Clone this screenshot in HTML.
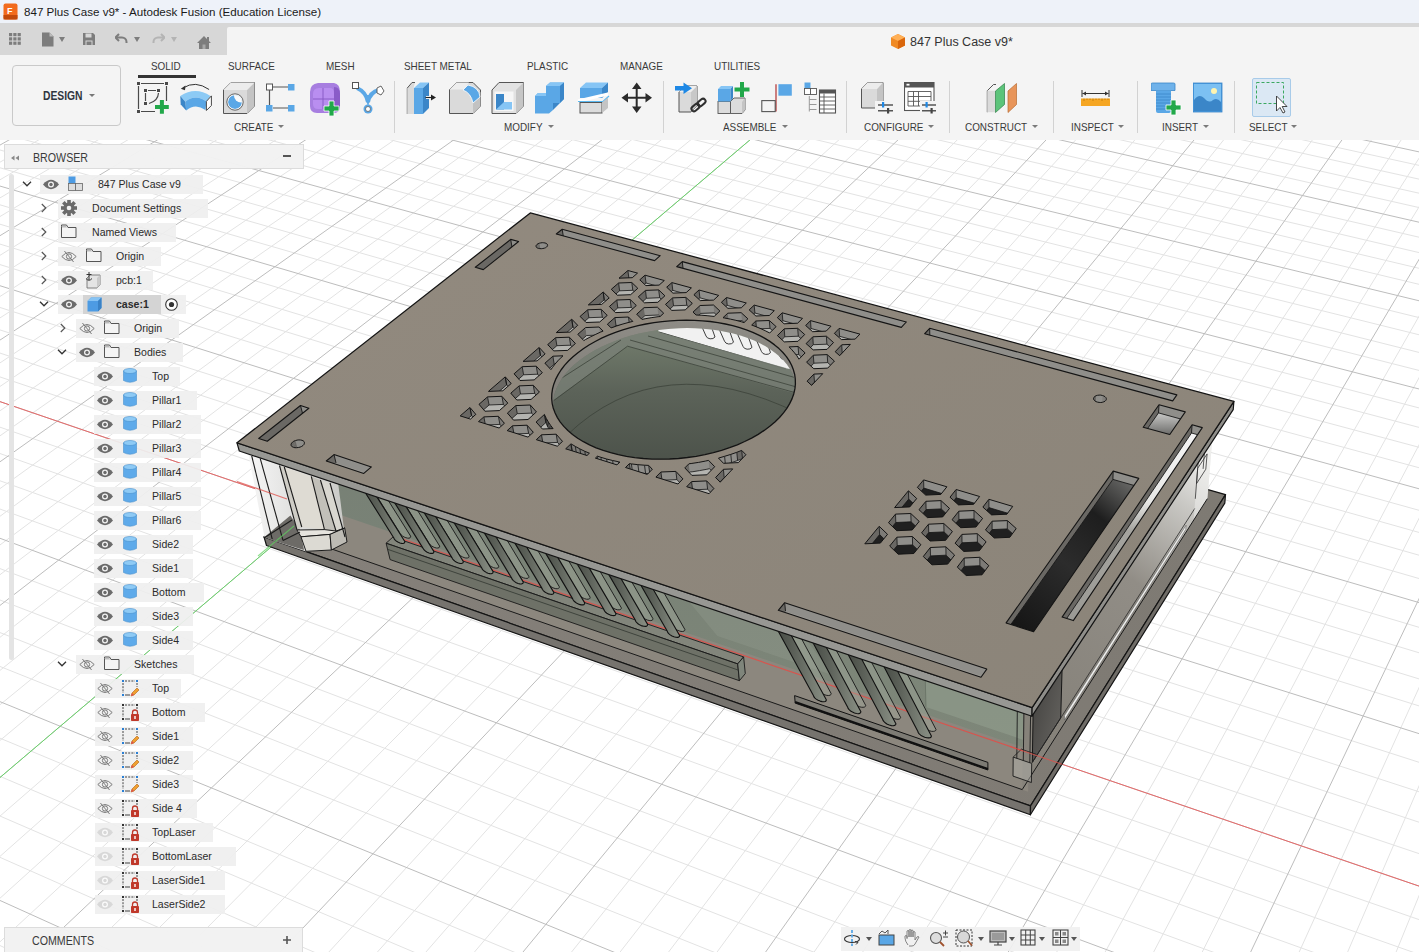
<!DOCTYPE html>
<html><head><meta charset="utf-8">
<style>
html,body{margin:0;padding:0;width:1419px;height:952px;overflow:hidden;background:#fff;font-family:"Liberation Sans",sans-serif;}
.abs{position:absolute;}
#title{left:0;top:0;width:1419px;height:23px;background:#eef2f9;}
#title .t{left:24px;top:5px;font-size:11.6px;color:#1a1a1a;white-space:nowrap;}
#qat{left:0;top:23px;width:1419px;height:32px;background:#d7d7d7;}
#tab{left:227px;top:27px;width:1192px;height:28px;background:#f4f4f4;border-top-left-radius:2px;}
#ribbon{left:0;top:55px;width:1419px;height:85px;background:#f4f4f4;}
.lbl{position:absolute;font-size:11px;color:#3a3a3a;white-space:nowrap;transform:scaleX(0.90);transform-origin:0 0;}
.sep{position:absolute;width:1px;background:#d2d2d2;top:81px;height:52px;}
.arr{position:absolute;width:0;height:0;border-left:3px solid transparent;border-right:3px solid transparent;border-top:3px solid #7a7a7a;}
#view{left:0;top:0;}
#browser{left:0;top:0;}
.hdr{position:absolute;background:rgba(242,242,242,0.97);border:1px solid #dcdcdc;box-sizing:border-box;}
.row{position:absolute;height:19px;background:rgba(239,239,239,0.93);}
.txt{position:absolute;font-size:11px;color:#2b2b2b;white-space:nowrap;transform:scaleX(0.96);transform-origin:0 0;}
</style></head><body>
<svg id="view" class="abs" width="1419" height="952" viewBox="0 0 1419 952">
<defs><clipPath id="vc"><rect x="0" y="140" width="1419" height="812"/></clipPath></defs>
<g clip-path="url(#vc)">
<rect x="0" y="140" width="1419" height="812" fill="#ffffff"/>
<g shape-rendering="auto">
<line x1="-1340.9" y1="689.6" x2="365.6" y2="-176.6" stroke="#e3e3e3" stroke-width="1"/>
<line x1="-1320.9" y1="701.1" x2="381.7" y2="-173.4" stroke="#e3e3e3" stroke-width="1"/>
<line x1="-1300.6" y1="712.8" x2="397.9" y2="-170.2" stroke="#e3e3e3" stroke-width="1"/>
<line x1="-1280.1" y1="724.7" x2="414.2" y2="-167.0" stroke="#e3e3e3" stroke-width="1"/>
<line x1="-1238.2" y1="748.8" x2="447.2" y2="-160.5" stroke="#e3e3e3" stroke-width="1"/>
<line x1="-1216.9" y1="761.1" x2="463.8" y2="-157.2" stroke="#e3e3e3" stroke-width="1"/>
<line x1="-1195.2" y1="773.6" x2="480.6" y2="-153.9" stroke="#e3e3e3" stroke-width="1"/>
<line x1="-1173.3" y1="786.3" x2="497.4" y2="-150.6" stroke="#e3e3e3" stroke-width="1"/>
<line x1="-1128.6" y1="812.1" x2="531.5" y2="-143.9" stroke="#e3e3e3" stroke-width="1"/>
<line x1="-1105.8" y1="825.2" x2="548.7" y2="-140.5" stroke="#e3e3e3" stroke-width="1"/>
<line x1="-1082.7" y1="838.6" x2="566.1" y2="-137.1" stroke="#e3e3e3" stroke-width="1"/>
<line x1="-1059.2" y1="852.1" x2="583.5" y2="-133.6" stroke="#e3e3e3" stroke-width="1"/>
<line x1="-1011.4" y1="879.7" x2="618.8" y2="-126.7" stroke="#e3e3e3" stroke-width="1"/>
<line x1="-987.0" y1="893.8" x2="636.6" y2="-123.2" stroke="#e3e3e3" stroke-width="1"/>
<line x1="-962.2" y1="908.1" x2="654.5" y2="-119.6" stroke="#e3e3e3" stroke-width="1"/>
<line x1="-937.1" y1="922.6" x2="672.6" y2="-116.1" stroke="#e3e3e3" stroke-width="1"/>
<line x1="-885.7" y1="952.2" x2="709.1" y2="-108.9" stroke="#e3e3e3" stroke-width="1"/>
<line x1="-859.5" y1="967.3" x2="727.5" y2="-105.2" stroke="#e3e3e3" stroke-width="1"/>
<line x1="-832.9" y1="982.7" x2="746.1" y2="-101.6" stroke="#e3e3e3" stroke-width="1"/>
<line x1="-805.9" y1="998.2" x2="764.8" y2="-97.9" stroke="#e3e3e3" stroke-width="1"/>
<line x1="-750.7" y1="1030.1" x2="802.7" y2="-90.4" stroke="#e3e3e3" stroke-width="1"/>
<line x1="-722.5" y1="1046.4" x2="821.8" y2="-86.7" stroke="#e3e3e3" stroke-width="1"/>
<line x1="-693.8" y1="1062.9" x2="841.0" y2="-82.9" stroke="#e3e3e3" stroke-width="1"/>
<line x1="-664.7" y1="1079.7" x2="860.4" y2="-79.0" stroke="#e3e3e3" stroke-width="1"/>
<line x1="-605.2" y1="1114.0" x2="899.6" y2="-71.3" stroke="#e3e3e3" stroke-width="1"/>
<line x1="-574.8" y1="1131.6" x2="919.5" y2="-67.4" stroke="#e3e3e3" stroke-width="1"/>
<line x1="-543.8" y1="1149.5" x2="939.4" y2="-63.5" stroke="#e3e3e3" stroke-width="1"/>
<line x1="-512.4" y1="1167.6" x2="959.6" y2="-59.5" stroke="#e3e3e3" stroke-width="1"/>
<line x1="-448.0" y1="1204.7" x2="1000.2" y2="-51.5" stroke="#e3e3e3" stroke-width="1"/>
<line x1="-415.0" y1="1223.8" x2="1020.8" y2="-47.4" stroke="#e3e3e3" stroke-width="1"/>
<line x1="-381.5" y1="1243.1" x2="1041.5" y2="-43.3" stroke="#e3e3e3" stroke-width="1"/>
<line x1="-347.5" y1="1262.7" x2="1062.4" y2="-39.2" stroke="#e3e3e3" stroke-width="1"/>
<line x1="-277.6" y1="1303.0" x2="1104.6" y2="-30.9" stroke="#e3e3e3" stroke-width="1"/>
<line x1="-241.8" y1="1323.7" x2="1126.0" y2="-26.7" stroke="#e3e3e3" stroke-width="1"/>
<line x1="-205.4" y1="1344.7" x2="1147.5" y2="-22.4" stroke="#e3e3e3" stroke-width="1"/>
<line x1="-168.3" y1="1366.1" x2="1169.2" y2="-18.2" stroke="#e3e3e3" stroke-width="1"/>
<line x1="-92.3" y1="1410.0" x2="1213.1" y2="-9.5" stroke="#e3e3e3" stroke-width="1"/>
<line x1="-53.2" y1="1432.5" x2="1235.3" y2="-5.2" stroke="#e3e3e3" stroke-width="1"/>
<line x1="-13.5" y1="1455.4" x2="1257.6" y2="-0.7" stroke="#e3e3e3" stroke-width="1"/>
<line x1="26.9" y1="1478.8" x2="1280.2" y2="3.7" stroke="#e3e3e3" stroke-width="1"/>
<line x1="110.1" y1="1526.7" x2="1325.8" y2="12.7" stroke="#e3e3e3" stroke-width="1"/>
<line x1="152.8" y1="1551.4" x2="1348.9" y2="17.2" stroke="#e3e3e3" stroke-width="1"/>
<line x1="196.3" y1="1576.5" x2="1372.1" y2="21.8" stroke="#e3e3e3" stroke-width="1"/>
<line x1="240.6" y1="1602.0" x2="1395.6" y2="26.4" stroke="#e3e3e3" stroke-width="1"/>
<line x1="331.8" y1="1654.7" x2="1443.0" y2="35.8" stroke="#e3e3e3" stroke-width="1"/>
<line x1="378.8" y1="1681.7" x2="1467.1" y2="40.5" stroke="#e3e3e3" stroke-width="1"/>
<line x1="426.6" y1="1709.4" x2="1491.3" y2="45.3" stroke="#e3e3e3" stroke-width="1"/>
<line x1="475.4" y1="1737.5" x2="1515.7" y2="50.1" stroke="#e3e3e3" stroke-width="1"/>
<line x1="576.0" y1="1795.5" x2="1565.1" y2="59.9" stroke="#e3e3e3" stroke-width="1"/>
<line x1="627.8" y1="1825.4" x2="1590.1" y2="64.8" stroke="#e3e3e3" stroke-width="1"/>
<line x1="680.7" y1="1855.9" x2="1615.3" y2="69.8" stroke="#e3e3e3" stroke-width="1"/>
<line x1="734.7" y1="1887.1" x2="1640.8" y2="74.8" stroke="#e3e3e3" stroke-width="1"/>
<line x1="846.1" y1="1951.4" x2="1692.3" y2="84.9" stroke="#e3e3e3" stroke-width="1"/>
<line x1="903.6" y1="1984.5" x2="1718.3" y2="90.1" stroke="#e3e3e3" stroke-width="1"/>
<line x1="962.4" y1="2018.4" x2="1744.6" y2="95.2" stroke="#e3e3e3" stroke-width="1"/>
<line x1="1022.4" y1="2053.1" x2="1771.2" y2="100.5" stroke="#e3e3e3" stroke-width="1"/>
<line x1="1146.5" y1="2124.7" x2="1824.9" y2="111.1" stroke="#e3e3e3" stroke-width="1"/>
<line x1="1210.7" y1="2161.7" x2="1852.1" y2="116.4" stroke="#e3e3e3" stroke-width="1"/>
<line x1="1276.4" y1="2199.6" x2="1879.5" y2="121.8" stroke="#e3e3e3" stroke-width="1"/>
<line x1="1343.5" y1="2238.4" x2="1907.2" y2="127.3" stroke="#e3e3e3" stroke-width="1"/>
<line x1="-1314.8" y1="655.1" x2="1432.0" y2="2197.2" stroke="#e3e3e3" stroke-width="1"/>
<line x1="-1270.0" y1="632.7" x2="1450.7" y2="2120.2" stroke="#e3e3e3" stroke-width="1"/>
<line x1="-1226.4" y1="610.8" x2="1468.7" y2="2046.7" stroke="#e3e3e3" stroke-width="1"/>
<line x1="-1183.8" y1="589.4" x2="1485.8" y2="1976.4" stroke="#e3e3e3" stroke-width="1"/>
<line x1="-1101.7" y1="548.2" x2="1517.9" y2="1844.7" stroke="#e3e3e3" stroke-width="1"/>
<line x1="-1062.1" y1="528.4" x2="1532.9" y2="1783.0" stroke="#e3e3e3" stroke-width="1"/>
<line x1="-1023.5" y1="509.0" x2="1547.4" y2="1723.8" stroke="#e3e3e3" stroke-width="1"/>
<line x1="-985.7" y1="490.1" x2="1561.2" y2="1666.9" stroke="#e3e3e3" stroke-width="1"/>
<line x1="-912.7" y1="453.5" x2="1587.3" y2="1559.7" stroke="#e3e3e3" stroke-width="1"/>
<line x1="-877.5" y1="435.8" x2="1599.7" y2="1509.2" stroke="#e3e3e3" stroke-width="1"/>
<line x1="-843.0" y1="418.5" x2="1611.5" y2="1460.5" stroke="#e3e3e3" stroke-width="1"/>
<line x1="-809.2" y1="401.5" x2="1623.0" y2="1413.5" stroke="#e3e3e3" stroke-width="1"/>
<line x1="-743.9" y1="368.8" x2="1644.7" y2="1324.6" stroke="#e3e3e3" stroke-width="1"/>
<line x1="-712.3" y1="352.9" x2="1654.9" y2="1282.4" stroke="#e3e3e3" stroke-width="1"/>
<line x1="-681.4" y1="337.4" x2="1664.9" y2="1241.7" stroke="#e3e3e3" stroke-width="1"/>
<line x1="-651.1" y1="322.2" x2="1674.5" y2="1202.3" stroke="#e3e3e3" stroke-width="1"/>
<line x1="-592.3" y1="292.7" x2="1692.7" y2="1127.3" stroke="#e3e3e3" stroke-width="1"/>
<line x1="-563.8" y1="278.4" x2="1701.5" y2="1091.6" stroke="#e3e3e3" stroke-width="1"/>
<line x1="-535.9" y1="264.4" x2="1709.9" y2="1057.0" stroke="#e3e3e3" stroke-width="1"/>
<line x1="-508.5" y1="250.7" x2="1718.1" y2="1023.4" stroke="#e3e3e3" stroke-width="1"/>
<line x1="-455.3" y1="224.0" x2="1733.7" y2="959.3" stroke="#e3e3e3" stroke-width="1"/>
<line x1="-429.5" y1="211.1" x2="1741.1" y2="928.7" stroke="#e3e3e3" stroke-width="1"/>
<line x1="-404.1" y1="198.4" x2="1748.4" y2="899.0" stroke="#e3e3e3" stroke-width="1"/>
<line x1="-379.3" y1="185.9" x2="1755.4" y2="870.1" stroke="#e3e3e3" stroke-width="1"/>
<line x1="-330.9" y1="161.7" x2="1768.9" y2="814.7" stroke="#e3e3e3" stroke-width="1"/>
<line x1="-307.4" y1="149.9" x2="1775.4" y2="788.1" stroke="#e3e3e3" stroke-width="1"/>
<line x1="-284.4" y1="138.3" x2="1781.7" y2="762.3" stroke="#e3e3e3" stroke-width="1"/>
<line x1="-261.7" y1="126.9" x2="1787.8" y2="737.1" stroke="#e3e3e3" stroke-width="1"/>
<line x1="-217.5" y1="104.8" x2="1799.6" y2="688.7" stroke="#e3e3e3" stroke-width="1"/>
<line x1="-196.1" y1="94.0" x2="1805.3" y2="665.5" stroke="#e3e3e3" stroke-width="1"/>
<line x1="-174.9" y1="83.4" x2="1810.8" y2="642.8" stroke="#e3e3e3" stroke-width="1"/>
<line x1="-154.2" y1="73.0" x2="1816.2" y2="620.7" stroke="#e3e3e3" stroke-width="1"/>
<line x1="-113.7" y1="52.7" x2="1826.6" y2="578.1" stroke="#e3e3e3" stroke-width="1"/>
<line x1="-94.0" y1="42.8" x2="1831.6" y2="557.6" stroke="#e3e3e3" stroke-width="1"/>
<line x1="-74.6" y1="33.1" x2="1836.5" y2="537.6" stroke="#e3e3e3" stroke-width="1"/>
<line x1="-55.5" y1="23.5" x2="1841.2" y2="518.0" stroke="#e3e3e3" stroke-width="1"/>
<line x1="-18.3" y1="4.8" x2="1850.5" y2="480.2" stroke="#e3e3e3" stroke-width="1"/>
<line x1="-0.1" y1="-4.3" x2="1854.9" y2="462.0" stroke="#e3e3e3" stroke-width="1"/>
<line x1="17.7" y1="-13.2" x2="1859.3" y2="444.1" stroke="#e3e3e3" stroke-width="1"/>
<line x1="35.3" y1="-22.1" x2="1863.5" y2="426.7" stroke="#e3e3e3" stroke-width="1"/>
<line x1="69.7" y1="-39.3" x2="1871.7" y2="392.9" stroke="#e3e3e3" stroke-width="1"/>
<line x1="86.5" y1="-47.7" x2="1875.7" y2="376.6" stroke="#e3e3e3" stroke-width="1"/>
<line x1="103.0" y1="-56.0" x2="1879.6" y2="360.6" stroke="#e3e3e3" stroke-width="1"/>
<line x1="119.3" y1="-64.2" x2="1883.4" y2="344.9" stroke="#e3e3e3" stroke-width="1"/>
<line x1="151.1" y1="-80.1" x2="1890.8" y2="314.6" stroke="#e3e3e3" stroke-width="1"/>
<line x1="166.7" y1="-87.9" x2="1894.4" y2="299.9" stroke="#e3e3e3" stroke-width="1"/>
<line x1="182.0" y1="-95.6" x2="1897.9" y2="285.5" stroke="#e3e3e3" stroke-width="1"/>
<line x1="197.1" y1="-103.2" x2="1901.4" y2="271.4" stroke="#e3e3e3" stroke-width="1"/>
<line x1="226.6" y1="-118.0" x2="1908.0" y2="243.9" stroke="#e3e3e3" stroke-width="1"/>
<line x1="241.1" y1="-125.2" x2="1911.3" y2="230.6" stroke="#e3e3e3" stroke-width="1"/>
<line x1="255.3" y1="-132.4" x2="1914.5" y2="217.6" stroke="#e3e3e3" stroke-width="1"/>
<line x1="269.4" y1="-139.4" x2="1917.6" y2="204.8" stroke="#e3e3e3" stroke-width="1"/>
<line x1="296.9" y1="-153.2" x2="1923.7" y2="179.9" stroke="#e3e3e3" stroke-width="1"/>
<line x1="310.3" y1="-160.0" x2="1926.6" y2="167.8" stroke="#e3e3e3" stroke-width="1"/>
<line x1="323.6" y1="-166.7" x2="1929.5" y2="155.9" stroke="#e3e3e3" stroke-width="1"/>
<line x1="336.7" y1="-173.2" x2="1932.3" y2="144.2" stroke="#e3e3e3" stroke-width="1"/>
<line x1="-1360.7" y1="678.2" x2="349.7" y2="-179.7" stroke="#bdbdbd" stroke-width="1"/>
<line x1="-1259.3" y1="736.7" x2="430.7" y2="-163.7" stroke="#bdbdbd" stroke-width="1"/>
<line x1="-1151.1" y1="799.1" x2="514.4" y2="-147.2" stroke="#bdbdbd" stroke-width="1"/>
<line x1="-1035.5" y1="865.8" x2="601.1" y2="-130.1" stroke="#bdbdbd" stroke-width="1"/>
<line x1="-911.6" y1="937.3" x2="690.8" y2="-112.5" stroke="#bdbdbd" stroke-width="1"/>
<line x1="-778.5" y1="1014.1" x2="783.7" y2="-94.2" stroke="#bdbdbd" stroke-width="1"/>
<line x1="-635.2" y1="1096.7" x2="880.0" y2="-75.2" stroke="#bdbdbd" stroke-width="1"/>
<line x1="-480.5" y1="1186.0" x2="979.8" y2="-55.5" stroke="#bdbdbd" stroke-width="1"/>
<line x1="-312.8" y1="1282.7" x2="1083.4" y2="-35.1" stroke="#bdbdbd" stroke-width="1"/>
<line x1="-130.6" y1="1387.8" x2="1191.1" y2="-13.9" stroke="#bdbdbd" stroke-width="1"/>
<line x1="68.1" y1="1502.5" x2="1302.9" y2="8.2" stroke="#bdbdbd" stroke-width="1"/>
<line x1="285.8" y1="1628.1" x2="1419.2" y2="31.1" stroke="#bdbdbd" stroke-width="1"/>
<line x1="525.2" y1="1766.2" x2="1540.3" y2="55.0" stroke="#bdbdbd" stroke-width="1"/>
<line x1="789.8" y1="1918.9" x2="1666.4" y2="79.8" stroke="#bdbdbd" stroke-width="1"/>
<line x1="1083.8" y1="2088.5" x2="1797.9" y2="105.7" stroke="#bdbdbd" stroke-width="1"/>
<line x1="1412.3" y1="2278.0" x2="1935.1" y2="132.8" stroke="#bdbdbd" stroke-width="1"/>
<line x1="-1360.7" y1="678.2" x2="1412.3" y2="2278.0" stroke="#bdbdbd" stroke-width="1"/>
<line x1="-1142.3" y1="568.6" x2="1502.2" y2="1909.1" stroke="#bdbdbd" stroke-width="1"/>
<line x1="-948.8" y1="471.5" x2="1574.5" y2="1612.3" stroke="#bdbdbd" stroke-width="1"/>
<line x1="-776.2" y1="385.0" x2="1634.0" y2="1368.3" stroke="#bdbdbd" stroke-width="1"/>
<line x1="-621.4" y1="307.3" x2="1683.8" y2="1164.2" stroke="#bdbdbd" stroke-width="1"/>
<line x1="-481.6" y1="237.2" x2="1726.0" y2="990.9" stroke="#bdbdbd" stroke-width="1"/>
<line x1="-354.9" y1="173.7" x2="1762.3" y2="842.0" stroke="#bdbdbd" stroke-width="1"/>
<line x1="-239.4" y1="115.8" x2="1793.8" y2="712.6" stroke="#bdbdbd" stroke-width="1"/>
<line x1="-133.8" y1="62.8" x2="1821.5" y2="599.2" stroke="#bdbdbd" stroke-width="1"/>
<line x1="-36.8" y1="14.1" x2="1845.9" y2="498.9" stroke="#bdbdbd" stroke-width="1"/>
<line x1="52.7" y1="-30.7" x2="1867.7" y2="409.6" stroke="#bdbdbd" stroke-width="1"/>
<line x1="135.3" y1="-72.2" x2="1887.2" y2="329.6" stroke="#bdbdbd" stroke-width="1"/>
<line x1="212.0" y1="-110.6" x2="1904.7" y2="257.5" stroke="#bdbdbd" stroke-width="1"/>
<line x1="283.2" y1="-146.4" x2="1920.6" y2="192.2" stroke="#bdbdbd" stroke-width="1"/>
<line x1="349.7" y1="-179.7" x2="1935.1" y2="132.8" stroke="#bdbdbd" stroke-width="1"/>
<line x1="-481.6" y1="237.2" x2="1726.0" y2="990.9" stroke="#e86a6a" stroke-width="1"/>
<line x1="-480.5" y1="1186.0" x2="979.8" y2="-55.5" stroke="#6ad46a" stroke-width="1"/>
</g>
<defs>
<linearGradient id="gTop" x1="0" y1="0" x2="1" y2="1"><stop offset="0" stop-color="#928a7f"/><stop offset="1" stop-color="#8b8479"/></linearGradient>
<linearGradient id="gBotTop" x1="0" y1="0" x2="1" y2="0"><stop offset="0" stop-color="#85807a"/><stop offset="1" stop-color="#7e7a73"/></linearGradient>
<linearGradient id="gSideL" x1="0" y1="0" x2="0" y2="1"><stop offset="0" stop-color="#778075"/><stop offset="1" stop-color="#7e8779"/></linearGradient>
<linearGradient id="gSideR" gradientUnits="userSpaceOnUse" x1="1040" y1="720" x2="1215" y2="470"><stop offset="0" stop-color="#86827a"/><stop offset="0.55" stop-color="#918d86"/><stop offset="0.85" stop-color="#c9c8c4"/><stop offset="1" stop-color="#ececea"/></linearGradient>
<linearGradient id="gSideL2" x1="0" y1="0" x2="0" y2="1"><stop offset="0" stop-color="#8d9389" stop-opacity="0.6"/><stop offset="1" stop-color="#8b8a82" stop-opacity="0.6"/></linearGradient>
<linearGradient id="gCorner" x1="0" y1="0" x2="1" y2="0"><stop offset="0" stop-color="#f6f6f6"/><stop offset="1" stop-color="#c9c9c6"/></linearGradient>
<linearGradient id="gFin" x1="0" y1="0" x2="1" y2="0"><stop offset="0" stop-color="#3e423c"/><stop offset="0.45" stop-color="#5d625a"/><stop offset="1" stop-color="#8a9085"/></linearGradient>
<linearGradient id="gWallF" x1="0" y1="0" x2="0" y2="1"><stop offset="0" stop-color="#5a5853"/><stop offset="1" stop-color="#8f8c86"/></linearGradient>
<linearGradient id="gThin" x1="0" y1="0" x2="0" y2="1"><stop offset="0" stop-color="#f4f4f4"/><stop offset="0.35" stop-color="#e8e8e6"/><stop offset="0.5" stop-color="#a5a49f"/><stop offset="1" stop-color="#9a9994"/></linearGradient>
<linearGradient id="gSq" x1="0" y1="0" x2="0" y2="1"><stop offset="0" stop-color="#c9c9c7"/><stop offset="1" stop-color="#4a4a48"/></linearGradient>
<linearGradient id="gDark" gradientUnits="userSpaceOnUse" x1="1130" y1="480" x2="1010" y2="630"><stop offset="0" stop-color="#6a6a68"/><stop offset="0.25" stop-color="#1e1e1e"/><stop offset="0.55" stop-color="#2c2c2c"/><stop offset="1" stop-color="#141414"/></linearGradient>
<linearGradient id="gDarkP" x1="0" y1="0" x2="1" y2="1"><stop offset="0" stop-color="#3c3b39"/><stop offset="1" stop-color="#6a6864"/></linearGradient>
<linearGradient id="gWall" x1="0" y1="0" x2="0" y2="1"><stop offset="0" stop-color="#77736c"/><stop offset="1" stop-color="#9c9a95"/></linearGradient>
<linearGradient id="gWall2" x1="0" y1="0" x2="0" y2="1"><stop offset="0" stop-color="#5c5b58"/><stop offset="1" stop-color="#9a9a98"/></linearGradient>
<linearGradient id="gFanWall" x1="0" y1="0" x2="0" y2="1"><stop offset="0" stop-color="#8e8c86"/><stop offset="1" stop-color="#77746e"/></linearGradient>
<linearGradient id="gFanIn" x1="0" y1="0" x2="0" y2="1"><stop offset="0" stop-color="#75806f"/><stop offset="0.45" stop-color="#5c6359"/><stop offset="1" stop-color="#4b5149"/></linearGradient>
</defs>
<polygon points="264.0,536.9 1030.5,805.9 1225.5,494.6 544.5,300.7" fill="url(#gBotTop)" stroke="#141414" stroke-width="1.2" stroke-linejoin="round" />
<polygon points="266.5,545.5 1030.4,814.8 1030.5,805.9 264.0,536.9" fill="#76736e" stroke="#141414" stroke-width="1.2" stroke-linejoin="round" />
<polygon points="1030.4,814.8 1224.8,503.1 1225.5,494.6 1030.5,805.9" fill="#6f6c67" stroke="#141414" stroke-width="1.2" stroke-linejoin="round" />
<polygon points="280.6,531.2 1028.1,791.7 1029.5,702.1 256.6,445.4" fill="#8c877e" stroke="none" stroke-width="1.2" stroke-linejoin="round" />
<polygon points="339.1,514.4 1037.5,752.4 1038.5,698.5 1016.1,692.1 283.8,449.6" fill="url(#gSideL)" stroke="none" stroke-width="1.2" stroke-linejoin="round" />
<polygon points="926.0,706.9 1032.2,742.9 1033.0,694.4 924.7,658.6" fill="#93a08f" stroke="none" stroke-width="1.0" stroke-linejoin="round" fill-opacity="0.55"/>
<polyline points="926.0,706.9 924.7,658.6 1033.0,694.4" fill="none" stroke="#5d665a" stroke-width="0.6" stroke-linejoin="round" />
<polygon points="717.4,636.0 832.2,675.0 795.3,624.3 674.7,584.3" fill="#8e968a" stroke="none" stroke-width="1.0" stroke-linejoin="round" fill-opacity="0.45"/>
<polyline points="280.6,531.2 1022.2,789.6" fill="none" stroke="#1a1a1a" stroke-width="1.0" stroke-linejoin="round" />
<line x1="394.1" y1="536.2" x2="1043.8" y2="758.0" stroke="#e0504a" stroke-width="1.2" opacity="0.9"/>
<polygon points="795.2,703.1 987.9,770.0 987.9,762.4 794.6,695.6" fill="#7d7b74" stroke="#121212" stroke-width="1.0" stroke-linejoin="round" />
<polyline points="795.1,702.0 987.9,768.9" fill="none" stroke="#101010" stroke-width="2.0" stroke-linejoin="round" />
<polygon points="386.1,543.2 737.7,663.9 743.6,656.9 392.9,537.1" fill="#7c8479" stroke="#1a1a1a" stroke-width="0.9" stroke-linejoin="round" fill-opacity="0.6"/>
<polygon points="390.1,559.6 739.4,680.7 737.7,663.9 386.1,543.2" fill="#5d655b" stroke="#1a1a1a" stroke-width="0.9" stroke-linejoin="round" fill-opacity="0.65"/>
<polygon points="739.4,680.7 745.3,673.6 743.6,656.9 737.7,663.9" fill="#7f857b" stroke="#1a1a1a" stroke-width="0.9" stroke-linejoin="round" />
<polyline points="387.6,549.3 738.3,670.1" fill="none" stroke="#2a2f29" stroke-width="0.7" stroke-linejoin="round" />
<polygon points="362.0,472.5 373.1,476.2 410.6,536.1 410.6,537.1 410.0,537.8 409.0,538.2 407.5,538.1 405.9,537.7 404.1,537.0 402.5,536.0 401.1,534.8 400.1,533.5 399.5,532.4" fill="#a2a89c" stroke="#161616" stroke-width="0.9" stroke-linejoin="round" fill-opacity="0.45"/>
<polygon points="355.9,477.7 367.1,481.4 404.8,541.5 404.7,542.4 404.2,543.1 403.1,543.5 401.7,543.4 400.0,543.0 398.3,542.3 396.6,541.3 395.2,540.1 394.2,538.8 393.7,537.7" fill="url(#gFin)" stroke="#111" stroke-width="1.1" stroke-linejoin="round" />
<polygon points="391.1,482.1 402.4,485.9 439.6,546.0 439.6,547.0 439.0,547.7 437.9,548.0 436.5,548.0 434.8,547.6 433.0,546.8 431.4,545.8 430.0,544.6 429.0,543.4 428.4,542.2" fill="#a2a89c" stroke="#161616" stroke-width="0.9" stroke-linejoin="round" fill-opacity="0.45"/>
<polygon points="385.1,487.4 396.4,491.1 433.8,551.4 433.8,552.4 433.2,553.1 432.2,553.4 430.7,553.4 429.0,553.0 427.2,552.2 425.6,551.2 424.2,550.0 423.2,548.7 422.6,547.6" fill="url(#gFin)" stroke="#111" stroke-width="1.1" stroke-linejoin="round" />
<polygon points="420.6,491.9 432.0,495.7 469.0,556.0 469.0,557.0 468.4,557.7 467.3,558.0 465.8,558.0 464.1,557.6 462.3,556.8 460.6,555.8 459.2,554.6 458.2,553.3 457.7,552.2" fill="#a2a89c" stroke="#161616" stroke-width="0.9" stroke-linejoin="round" fill-opacity="0.45"/>
<polygon points="414.6,497.2 426.1,501.0 463.3,561.5 463.2,562.4 462.6,563.1 461.5,563.5 460.1,563.4 458.4,563.0 456.6,562.2 454.9,561.2 453.5,560.0 452.5,558.8 451.9,557.6" fill="url(#gFin)" stroke="#111" stroke-width="1.1" stroke-linejoin="round" />
<polygon points="450.4,501.7 461.9,505.6 498.7,566.1 498.7,567.1 498.1,567.8 496.9,568.2 495.4,568.1 493.7,567.7 491.9,566.9 490.2,565.9 488.8,564.7 487.8,563.4 487.3,562.2" fill="#a2a89c" stroke="#161616" stroke-width="0.9" stroke-linejoin="round" fill-opacity="0.45"/>
<polygon points="444.5,507.1 456.1,510.9 493.1,571.6 493.0,572.6 492.4,573.3 491.3,573.7 489.8,573.6 488.0,573.2 486.2,572.4 484.5,571.3 483.1,570.1 482.1,568.9 481.6,567.7" fill="url(#gFin)" stroke="#111" stroke-width="1.1" stroke-linejoin="round" />
<polygon points="480.6,511.7 492.3,515.6 528.8,576.4 528.8,577.4 528.1,578.1 527.0,578.4 525.4,578.3 523.7,577.9 521.9,577.1 520.2,576.1 518.7,574.9 517.7,573.6 517.2,572.4" fill="#a2a89c" stroke="#161616" stroke-width="0.9" stroke-linejoin="round" fill-opacity="0.45"/>
<polygon points="474.8,517.1 486.5,521.0 523.2,581.9 523.2,582.9 522.5,583.6 521.4,584.0 519.9,583.9 518.1,583.5 516.3,582.7 514.6,581.6 513.1,580.4 512.1,579.2 511.6,578.0" fill="url(#gFin)" stroke="#111" stroke-width="1.1" stroke-linejoin="round" />
<polygon points="511.1,521.8 523.0,525.7 559.3,586.7 559.2,587.7 558.5,588.4 557.4,588.7 555.8,588.7 554.0,588.2 552.2,587.4 550.5,586.4 549.0,585.2 548.0,583.9 547.6,582.7" fill="#a2a89c" stroke="#161616" stroke-width="0.9" stroke-linejoin="round" fill-opacity="0.45"/>
<polygon points="505.4,527.3 517.2,531.3 553.8,592.4 553.7,593.4 553.0,594.0 551.8,594.4 550.3,594.3 548.5,593.9 546.7,593.1 544.9,592.0 543.5,590.8 542.5,589.5 542.0,588.4" fill="url(#gFin)" stroke="#111" stroke-width="1.1" stroke-linejoin="round" />
<polygon points="542.1,532.0 554.0,536.0 590.1,597.2 590.0,598.2 589.3,598.9 588.1,599.2 586.6,599.2 584.7,598.7 582.9,597.9 581.2,596.8 579.7,595.6 578.7,594.4 578.2,593.2" fill="#a2a89c" stroke="#161616" stroke-width="0.9" stroke-linejoin="round" fill-opacity="0.45"/>
<polygon points="536.4,537.6 548.4,541.6 584.7,602.9 584.5,603.9 583.9,604.6 582.7,604.9 581.1,604.9 579.3,604.4 577.4,603.6 575.7,602.5 574.2,601.3 573.2,600.0 572.7,598.9" fill="url(#gFin)" stroke="#111" stroke-width="1.1" stroke-linejoin="round" />
<polygon points="573.4,542.4 585.5,546.4 621.3,607.8 621.2,608.8 620.5,609.5 619.3,609.8 617.7,609.8 615.8,609.3 614.0,608.5 612.2,607.4 610.8,606.2 609.8,604.9 609.3,603.7" fill="#a2a89c" stroke="#161616" stroke-width="0.9" stroke-linejoin="round" fill-opacity="0.45"/>
<polygon points="567.8,548.0 579.9,552.1 615.9,613.6 615.8,614.6 615.1,615.3 613.9,615.6 612.3,615.5 610.4,615.1 608.6,614.3 606.8,613.2 605.3,612.0 604.3,610.7 603.9,609.5" fill="url(#gFin)" stroke="#111" stroke-width="1.1" stroke-linejoin="round" />
<polygon points="605.1,552.9 617.4,556.9 652.9,618.6 652.8,619.6 652.0,620.3 650.8,620.6 649.2,620.5 647.3,620.0 645.4,619.2 643.6,618.1 642.2,616.9 641.2,615.6 640.7,614.4" fill="#a2a89c" stroke="#161616" stroke-width="0.9" stroke-linejoin="round" fill-opacity="0.45"/>
<polygon points="599.5,558.6 611.8,562.7 647.6,624.4 647.4,625.4 646.7,626.1 645.5,626.4 643.8,626.3 642.0,625.9 640.1,625.1 638.3,624.0 636.8,622.7 635.8,621.5 635.4,620.3" fill="url(#gFin)" stroke="#111" stroke-width="1.1" stroke-linejoin="round" />
<polygon points="637.2,563.5 649.6,567.6 684.9,629.5 684.7,630.5 684.0,631.1 682.7,631.5 681.0,631.4 679.2,630.9 677.2,630.1 675.5,629.0 674.0,627.7 673.0,626.5 672.6,625.3" fill="#a2a89c" stroke="#161616" stroke-width="0.9" stroke-linejoin="round" fill-opacity="0.45"/>
<polygon points="631.7,569.3 644.2,573.4 679.6,635.4 679.5,636.4 678.7,637.1 677.5,637.4 675.8,637.3 673.9,636.8 672.0,636.0 670.2,634.9 668.7,633.6 667.7,632.4 667.3,631.2" fill="url(#gFin)" stroke="#111" stroke-width="1.1" stroke-linejoin="round" />
<polygon points="774.6,608.9 787.7,613.2 831.2,693.6 830.9,694.6 830.1,695.2 828.7,695.5 826.9,695.4 825.0,694.9 822.9,694.0 821.1,692.9 819.6,691.6 818.6,690.3 818.2,689.1" fill="#a2a89c" stroke="#161616" stroke-width="0.9" stroke-linejoin="round" fill-opacity="0.45"/>
<polygon points="769.4,615.0 782.6,619.4 826.3,699.8 826.1,700.8 825.2,701.5 823.9,701.8 822.1,701.6 820.1,701.1 818.1,700.3 816.2,699.1 814.7,697.9 813.8,696.6 813.4,695.4" fill="url(#gFin)" stroke="#111" stroke-width="1.1" stroke-linejoin="round" />
<polygon points="809.3,620.4 822.6,624.8 865.7,705.4 865.4,706.4 864.5,707.0 863.1,707.3 861.3,707.2 859.3,706.7 857.3,705.8 855.4,704.7 853.9,703.4 852.9,702.1 852.6,700.9" fill="#a2a89c" stroke="#161616" stroke-width="0.9" stroke-linejoin="round" fill-opacity="0.45"/>
<polygon points="804.3,626.6 817.6,631.0 860.9,711.7 860.6,712.7 859.8,713.4 858.3,713.7 856.5,713.5 854.5,713.0 852.5,712.1 850.6,711.0 849.1,709.7 848.1,708.4 847.7,707.2" fill="url(#gFin)" stroke="#111" stroke-width="1.1" stroke-linejoin="round" />
<polygon points="844.5,632.0 858.0,636.5 900.6,717.4 900.3,718.3 899.4,719.0 898.0,719.3 896.1,719.1 894.1,718.6 892.0,717.7 890.2,716.6 888.7,715.3 887.7,714.0 887.3,712.8" fill="#a2a89c" stroke="#161616" stroke-width="0.9" stroke-linejoin="round" fill-opacity="0.45"/>
<polygon points="839.5,638.3 853.0,642.8 895.9,723.8 895.6,724.8 894.7,725.4 893.3,725.7 891.4,725.6 889.4,725.0 887.3,724.2 885.5,723.0 884.0,721.7 883.0,720.4 882.6,719.2" fill="url(#gFin)" stroke="#111" stroke-width="1.1" stroke-linejoin="round" />
<polygon points="880.2,643.8 893.8,648.3 936.0,729.5 935.7,730.5 934.7,731.1 933.3,731.4 931.4,731.3 929.3,730.7 927.2,729.8 925.4,728.7 923.8,727.4 922.9,726.1 922.5,724.9" fill="#a2a89c" stroke="#161616" stroke-width="0.9" stroke-linejoin="round" fill-opacity="0.45"/>
<polygon points="875.3,650.1 889.0,654.7 931.4,736.0 931.1,737.0 930.1,737.7 928.7,737.9 926.8,737.8 924.7,737.2 922.6,736.3 920.7,735.2 919.2,733.9 918.2,732.6 917.9,731.4" fill="url(#gFin)" stroke="#111" stroke-width="1.1" stroke-linejoin="round" />
<polygon points="248.0,452.0 338.0,482.0 345.0,537.0 331.0,550.0 306.0,551.5 276.5,541.5 264.5,537.1" fill="url(#gCorner)" stroke="none" stroke-width="1.1" stroke-linejoin="round" />
<polygon points="264.5,537.1 290.4,515.4 300.0,530.0 304.0,550.0 276.5,541.5" fill="#6d6b67" stroke="none" stroke-width="1.1" stroke-linejoin="round" />
<polygon points="279.5,465.5 284.3,467.0 301.8,527.0 297.0,530.0" fill="#cfcdc6" stroke="none" stroke-width="1.1" stroke-linejoin="round" />
<polygon points="284.3,467.0 311.3,476.4 324.5,529.6 301.8,527.0" fill="#dedbd3" stroke="none" stroke-width="1.1" stroke-linejoin="round" />
<polygon points="311.3,476.4 320.4,480.0 336.0,531.0 324.5,529.6" fill="#c2c0b9" stroke="none" stroke-width="1.1" stroke-linejoin="round" />
<polygon points="320.4,480.0 330.0,483.0 345.0,537.0 336.0,531.0" fill="#d9d7d0" stroke="none" stroke-width="1.1" stroke-linejoin="round" />
<polygon points="297.0,530.0 324.5,529.6 336.0,531.0 344.7,528.0 330.0,534.4 301.0,536.8" fill="#e6e4de" stroke="#1a1a1a" stroke-width="1.0" stroke-linejoin="round" />
<polygon points="301.0,536.8 330.0,534.4 331.4,550.0 306.0,551.3" fill="#dcdad3" stroke="#1a1a1a" stroke-width="1.0" stroke-linejoin="round" />
<polygon points="330.0,534.4 344.7,528.0 347.0,542.0 331.4,550.0" fill="#bdbbb4" stroke="#1a1a1a" stroke-width="1.0" stroke-linejoin="round" />
<polyline points="251.7,455.9 272.2,539.2" fill="none" stroke="#1a1a1a" stroke-width="1.1" stroke-linejoin="round"/>
<polyline points="260.2,458.3 283.0,540.4" fill="none" stroke="#1a1a1a" stroke-width="1.1" stroke-linejoin="round"/>
<polyline points="279.5,465.5 297.0,530.0" fill="none" stroke="#1a1a1a" stroke-width="1.1" stroke-linejoin="round"/>
<polyline points="284.3,467.0 301.8,527.0" fill="none" stroke="#1a1a1a" stroke-width="1.1" stroke-linejoin="round"/>
<polyline points="311.3,476.4 324.5,529.6" fill="none" stroke="#1a1a1a" stroke-width="1.1" stroke-linejoin="round"/>
<polyline points="320.4,480.0 336.0,531.0" fill="none" stroke="#1a1a1a" stroke-width="1.1" stroke-linejoin="round"/>
<polyline points="330.0,483.0 345.0,537.0" fill="none" stroke="#1a1a1a" stroke-width="1.1" stroke-linejoin="round"/>
<polyline points="264.0,538.0 292.0,520.0" fill="none" stroke="#1a1a1a" stroke-width="1.1" stroke-linejoin="round"/>
<polyline points="283.0,540.4 300.0,532.0" fill="none" stroke="#1a1a1a" stroke-width="1.1" stroke-linejoin="round"/>
<line x1="237" y1="481.5" x2="287" y2="499" stroke="#e0504a" stroke-width="1.1" opacity="0.75"/>
<line x1="258" y1="556" x2="294" y2="526" stroke="#5fd35f" stroke-width="1.1" opacity="0.7"/>
<polygon points="1022.2,789.6 1207.4,498.6 1214.4,413.5 1023.4,700.1" fill="url(#gSideR)" stroke="none" stroke-width="1.2" stroke-linejoin="round" />
<polygon points="1032.3,762.4 1060.7,717.9 1062.9,640.7 1033.6,684.7" fill="url(#gDarkP)" stroke="#161616" stroke-width="1.0" stroke-linejoin="round" />
<polyline points="1032.3,762.4 1194.9,508.3" fill="none" stroke="#2a2a2a" stroke-width="0.8" stroke-linejoin="round" />
<polygon points="1064.4,720.0 1185.7,529.6 1186.1,525.2 1064.6,715.3" fill="#ededeb" stroke="#555" stroke-width="0.5" stroke-linejoin="round" />
<polygon points="1193.6,520.1 1207.4,498.6 1214.4,413.5 1200.3,434.6" fill="#f0f0ee" stroke="none" stroke-width="1.0" stroke-linejoin="round" fill-opacity="0.5"/>
<polyline points="1195.3,498.8 1200.3,434.6" fill="none" stroke="#333" stroke-width="0.8" stroke-linejoin="round" />
<polyline points="1203.1,468.9 1206.7,425.1" fill="none" stroke="#333" stroke-width="0.8" stroke-linejoin="round" />
<polygon points="1196.5,483.7 1205.8,469.2 1207.1,453.9 1197.7,468.3" fill="none" stroke="#333" stroke-width="0.8" stroke-linejoin="round" />
<polyline points="1022.2,789.6 1207.4,498.6" fill="none" stroke="#1a1a1a" stroke-width="1.0" stroke-linejoin="round" />
<polygon points="1013.6,702.5 1032.6,708.8 1032.8,693.0 1013.7,686.7" fill="#b5b5b0" stroke="#1a1a1a" stroke-width="0.9" stroke-linejoin="round" fill-opacity="0.45"/>
<polygon points="1013.0,776.1 1031.4,782.5 1031.7,763.4 1013.2,757.1" fill="#b5b5b0" stroke="#1a1a1a" stroke-width="0.9" stroke-linejoin="round" fill-opacity="0.45"/>
<polyline points="1016.8,758.3 1017.4,703.7" fill="none" stroke="#1a1a1a" stroke-width="0.9" stroke-linejoin="round" />
<polyline points="1023.3,760.6 1024.0,706.0" fill="none" stroke="#1a1a1a" stroke-width="0.9" stroke-linejoin="round" />
<polyline points="1029.8,762.8 1030.7,708.2" fill="none" stroke="#1a1a1a" stroke-width="0.9" stroke-linejoin="round" />
<polyline points="1013.6,702.5 1022.1,694.6 1037.2,699.6" fill="none" stroke="#1a1a1a" stroke-width="0.8" stroke-linejoin="round" />
<polyline points="1013.2,757.1 1021.4,749.2 1036.2,754.3" fill="none" stroke="#1a1a1a" stroke-width="0.8" stroke-linejoin="round" />
<line x1="1010.0" y1="746.5" x2="1062.0" y2="764.2" stroke="#e0504a" stroke-width="1.1" opacity="0.8"/>
<polygon points="239.3,451.0 1032.0,716.2 1032.1,707.6 237.0,442.8" fill="#979793" stroke="#141414" stroke-width="1.2" stroke-linejoin="round" />
<polygon points="1032.0,716.2 1233.2,409.6 1233.9,401.4 1032.1,707.6" fill="#8f8e8a" stroke="#141414" stroke-width="1.2" stroke-linejoin="round" />
<polygon points="237.0,442.8 1032.1,707.6 1233.9,401.4 530.3,212.9" fill="url(#gTop)" stroke="#141414" stroke-width="1.25" stroke-linejoin="round" />
<clipPath id="h1"><polygon points="258.7,438.5 267.3,441.3 308.9,408.2 300.5,405.5"/></clipPath>
<g clip-path="url(#h1)">
<polygon points="258.7,438.5 267.3,441.3 308.9,408.2 300.5,405.5" fill="#8f8e8a"/>
<polygon points="308.9,408.2 300.5,405.5 302.6,413.6 311.0,416.3" fill="#8f8e8a"/>
<polygon points="300.5,405.5 258.7,438.5 261.0,446.7 302.6,413.6" fill="#6a6864"/>
<polygon points="261.0,446.7 269.5,449.6 311.0,416.3 302.6,413.6" fill="#8a8780" stroke="none" stroke-width="0.88"/>
<line x1="258.7" y1="438.5" x2="261.0" y2="446.7" stroke="#141414" stroke-width="0.88"/>
<line x1="267.3" y1="441.3" x2="269.5" y2="449.6" stroke="#141414" stroke-width="0.88"/>
<line x1="308.9" y1="408.2" x2="311.0" y2="416.3" stroke="#141414" stroke-width="0.88"/>
<line x1="300.5" y1="405.5" x2="302.6" y2="413.6" stroke="#141414" stroke-width="0.88"/>
</g>
<polygon points="258.7,438.5 267.3,441.3 308.9,408.2 300.5,405.5" fill="none" stroke="#141414" stroke-width="1.1" stroke-linejoin="round"/>
<clipPath id="h2"><polygon points="475.3,267.3 483.3,269.6 518.6,241.5 510.7,239.4"/></clipPath>
<g clip-path="url(#h2)">
<polygon points="475.3,267.3 483.3,269.6 518.6,241.5 510.7,239.4" fill="#8f8e8a"/>
<polygon points="518.6,241.5 510.7,239.4 512.0,247.1 519.9,249.2" fill="#8f8e8a"/>
<polygon points="510.7,239.4 475.3,267.3 476.7,275.1 512.0,247.1" fill="#6a6864"/>
<polygon points="476.7,275.1 484.7,277.4 519.9,249.2 512.0,247.1" fill="#8a8780" stroke="none" stroke-width="0.88"/>
<line x1="475.3" y1="267.3" x2="476.7" y2="275.1" stroke="#141414" stroke-width="0.88"/>
<line x1="483.3" y1="269.6" x2="484.7" y2="277.4" stroke="#141414" stroke-width="0.88"/>
<line x1="518.6" y1="241.5" x2="519.9" y2="249.2" stroke="#141414" stroke-width="0.88"/>
<line x1="510.7" y1="239.4" x2="512.0" y2="247.1" stroke="#141414" stroke-width="0.88"/>
</g>
<polygon points="475.3,267.3 483.3,269.6 518.6,241.5 510.7,239.4" fill="none" stroke="#141414" stroke-width="1.1" stroke-linejoin="round"/>
<clipPath id="h3"><polygon points="326.3,461.0 363.8,473.4 371.4,466.9 334.0,454.6"/></clipPath>
<g clip-path="url(#h3)">
<polygon points="326.3,461.0 363.8,473.4 371.4,466.9 334.0,454.6" fill="#8f8e8a"/>
<polygon points="371.4,466.9 334.0,454.6 336.0,462.9 373.3,475.2" fill="#8f8e8a"/>
<polygon points="334.0,454.6 326.3,461.0 328.4,469.2 336.0,462.9" fill="#6a6864"/>
<polygon points="328.4,469.2 365.8,481.7 373.3,475.2 336.0,462.9" fill="#9a9893" stroke="none" stroke-width="0.88"/>
<line x1="326.3" y1="461.0" x2="328.4" y2="469.2" stroke="#141414" stroke-width="0.88"/>
<line x1="363.8" y1="473.4" x2="365.8" y2="481.7" stroke="#141414" stroke-width="0.88"/>
<line x1="371.4" y1="466.9" x2="373.3" y2="475.2" stroke="#141414" stroke-width="0.88"/>
<line x1="334.0" y1="454.6" x2="336.0" y2="462.9" stroke="#141414" stroke-width="0.88"/>
</g>
<polygon points="326.3,461.0 363.8,473.4 371.4,466.9 334.0,454.6" fill="none" stroke="#141414" stroke-width="1.1" stroke-linejoin="round"/>
<clipPath id="h4"><polygon points="778.3,610.3 981.0,677.3 986.8,669.1 784.7,602.7"/></clipPath>
<g clip-path="url(#h4)">
<polygon points="778.3,610.3 981.0,677.3 986.8,669.1 784.7,602.7" fill="#8f8e8a"/>
<polygon points="986.8,669.1 784.7,602.7 785.5,611.2 986.8,677.7" fill="#8f8e8a"/>
<polygon points="784.7,602.7 778.3,610.3 779.1,618.8 785.5,611.2" fill="#6a6864"/>
<polygon points="779.1,618.8 981.1,685.9 986.8,677.7 785.5,611.2" fill="#9a9893" stroke="none" stroke-width="0.88"/>
<line x1="778.3" y1="610.3" x2="779.1" y2="618.8" stroke="#141414" stroke-width="0.88"/>
<line x1="981.0" y1="677.3" x2="981.1" y2="685.9" stroke="#141414" stroke-width="0.88"/>
<line x1="986.8" y1="669.1" x2="986.8" y2="677.7" stroke="#141414" stroke-width="0.88"/>
<line x1="784.7" y1="602.7" x2="785.5" y2="611.2" stroke="#141414" stroke-width="0.88"/>
</g>
<polygon points="778.3,610.3 981.0,677.3 986.8,669.1 784.7,602.7" fill="none" stroke="#141414" stroke-width="1.1" stroke-linejoin="round"/>
<clipPath id="h5"><polygon points="556.3,234.0 654.6,260.6 660.2,255.7 562.2,229.2"/></clipPath>
<g clip-path="url(#h5)">
<polygon points="556.3,234.0 654.6,260.6 660.2,255.7 562.2,229.2" fill="#8f8e8a"/>
<polygon points="660.2,255.7 562.2,229.2 563.4,236.9 661.2,263.4" fill="#8f8e8a"/>
<polygon points="562.2,229.2 556.3,234.0 557.5,241.7 563.4,236.9" fill="#6a6864"/>
<polygon points="557.5,241.7 655.5,268.4 661.2,263.4 563.4,236.9" fill="#b5b5b0" stroke="none" stroke-width="0.88"/>
<line x1="556.3" y1="234.0" x2="557.5" y2="241.7" stroke="#141414" stroke-width="0.88"/>
<line x1="654.6" y1="260.6" x2="655.5" y2="268.4" stroke="#141414" stroke-width="0.88"/>
<line x1="660.2" y1="255.7" x2="661.2" y2="263.4" stroke="#141414" stroke-width="0.88"/>
<line x1="562.2" y1="229.2" x2="563.4" y2="236.9" stroke="#141414" stroke-width="0.88"/>
</g>
<polygon points="556.3,234.0 654.6,260.6 660.2,255.7 562.2,229.2" fill="none" stroke="#141414" stroke-width="1.1" stroke-linejoin="round"/>
<clipPath id="h6"><polygon points="676.7,266.6 901.3,327.4 906.3,322.0 682.3,261.6"/></clipPath>
<g clip-path="url(#h6)">
<polygon points="676.7,266.6 901.3,327.4 906.3,322.0 682.3,261.6" fill="#8f8e8a"/>
<polygon points="906.3,322.0 682.3,261.6 683.1,269.4 906.5,329.9" fill="#8f8e8a"/>
<polygon points="682.3,261.6 676.7,266.6 677.5,274.4 683.1,269.4" fill="#6a6864"/>
<polygon points="677.5,274.4 901.5,335.3 906.5,329.9 683.1,269.4" fill="#b5b5b0" stroke="none" stroke-width="0.88"/>
<line x1="676.7" y1="266.6" x2="677.5" y2="274.4" stroke="#141414" stroke-width="0.88"/>
<line x1="901.3" y1="327.4" x2="901.5" y2="335.3" stroke="#141414" stroke-width="0.88"/>
<line x1="906.3" y1="322.0" x2="906.5" y2="329.9" stroke="#141414" stroke-width="0.88"/>
<line x1="682.3" y1="261.6" x2="683.1" y2="269.4" stroke="#141414" stroke-width="0.88"/>
</g>
<polygon points="676.7,266.6 901.3,327.4 906.3,322.0 682.3,261.6" fill="none" stroke="#141414" stroke-width="1.1" stroke-linejoin="round"/>
<clipPath id="h7"><polygon points="924.7,333.7 1172.7,400.9 1176.9,394.9 929.7,328.3"/></clipPath>
<g clip-path="url(#h7)">
<polygon points="924.7,333.7 1172.7,400.9 1176.9,394.9 929.7,328.3" fill="#8f8e8a"/>
<polygon points="1176.9,394.9 929.7,328.3 929.8,336.2 1176.3,403.0" fill="#8f8e8a"/>
<polygon points="929.7,328.3 924.7,333.7 924.9,341.7 929.8,336.2" fill="#6a6864"/>
<polygon points="924.9,341.7 1172.1,409.0 1176.3,403.0 929.8,336.2" fill="#b5b5b0" stroke="none" stroke-width="0.88"/>
<line x1="924.7" y1="333.7" x2="924.9" y2="341.7" stroke="#141414" stroke-width="0.88"/>
<line x1="1172.7" y1="400.9" x2="1172.1" y2="409.0" stroke="#141414" stroke-width="0.88"/>
<line x1="1176.9" y1="394.9" x2="1176.3" y2="403.0" stroke="#141414" stroke-width="0.88"/>
<line x1="929.7" y1="328.3" x2="929.8" y2="336.2" stroke="#141414" stroke-width="0.88"/>
</g>
<polygon points="924.7,333.7 1172.7,400.9 1176.9,394.9 929.7,328.3" fill="none" stroke="#141414" stroke-width="1.1" stroke-linejoin="round"/>
<clipPath id="h8"><polygon points="1143.2,427.2 1169.8,434.5 1185.3,411.9 1159.0,404.8"/></clipPath>
<g clip-path="url(#h8)">
<polygon points="1143.2,427.2 1169.8,434.5 1185.3,411.9 1159.0,404.8" fill="#8f8e8a"/>
<polygon points="1185.3,411.9 1159.0,404.8 1158.5,412.9 1184.7,420.1" fill="#8f8e8a"/>
<polygon points="1159.0,404.8 1143.2,427.2 1142.8,435.3 1158.5,412.9" fill="#6a6864"/>
<polygon points="1142.8,435.3 1169.2,442.7 1184.7,420.1 1158.5,412.9" fill="url(#gSq)" stroke="#141414" stroke-width="0.88"/>
<line x1="1143.2" y1="427.2" x2="1142.8" y2="435.3" stroke="#141414" stroke-width="0.88"/>
<line x1="1169.8" y1="434.5" x2="1169.2" y2="442.7" stroke="#141414" stroke-width="0.88"/>
<line x1="1185.3" y1="411.9" x2="1184.7" y2="420.1" stroke="#141414" stroke-width="0.88"/>
<line x1="1159.0" y1="404.8" x2="1158.5" y2="412.9" stroke="#141414" stroke-width="0.88"/>
</g>
<polygon points="1143.2,427.2 1169.8,434.5 1185.3,411.9 1159.0,404.8" fill="none" stroke="#141414" stroke-width="1.1" stroke-linejoin="round"/>
<clipPath id="h9"><polygon points="1062.1,617.1 1073.3,620.6 1202.3,427.6 1192.1,424.8"/></clipPath>
<g clip-path="url(#h9)">
<polygon points="1062.1,617.1 1073.3,620.6 1202.3,427.6 1192.1,424.8" fill="#8f8e8a"/>
<polygon points="1202.3,427.6 1192.1,424.8 1191.5,433.0 1201.6,435.8" fill="#8f8e8a"/>
<polygon points="1192.1,424.8 1062.1,617.1 1061.9,625.6 1191.5,433.0" fill="#6a6864"/>
<polygon points="1061.9,625.6 1073.0,629.1 1201.6,435.8 1191.5,433.0" fill="url(#gThin)" stroke="#141414" stroke-width="0.88"/>
<line x1="1062.1" y1="617.1" x2="1061.9" y2="625.6" stroke="#141414" stroke-width="0.88"/>
<line x1="1073.3" y1="620.6" x2="1073.0" y2="629.1" stroke="#141414" stroke-width="0.88"/>
<line x1="1202.3" y1="427.6" x2="1201.6" y2="435.8" stroke="#141414" stroke-width="0.88"/>
<line x1="1192.1" y1="424.8" x2="1191.5" y2="433.0" stroke="#141414" stroke-width="0.88"/>
</g>
<polygon points="1062.1,617.1 1073.3,620.6 1202.3,427.6 1192.1,424.8" fill="none" stroke="#141414" stroke-width="1.1" stroke-linejoin="round"/>
<clipPath id="h10"><polygon points="1006.1,622.9 1033.6,631.7 1138.8,478.4 1113.2,471.1"/></clipPath>
<g clip-path="url(#h10)">
<polygon points="1006.1,622.9 1033.6,631.7 1138.8,478.4 1113.2,471.1" fill="#8f8e8a"/>
<polygon points="1138.8,478.4 1113.2,471.1 1112.9,479.4 1138.4,486.7" fill="#8f8e8a"/>
<polygon points="1113.2,471.1 1006.1,622.9 1006.0,631.4 1112.9,479.4" fill="#6a6864"/>
<polygon points="1006.0,631.4 1033.4,640.2 1138.4,486.7 1112.9,479.4" fill="url(#gDark)" stroke="#141414" stroke-width="0.88"/>
<line x1="1006.1" y1="622.9" x2="1006.0" y2="631.4" stroke="#141414" stroke-width="0.88"/>
<line x1="1033.6" y1="631.7" x2="1033.4" y2="640.2" stroke="#141414" stroke-width="0.88"/>
<line x1="1138.8" y1="478.4" x2="1138.4" y2="486.7" stroke="#141414" stroke-width="0.88"/>
<line x1="1113.2" y1="471.1" x2="1112.9" y2="479.4" stroke="#141414" stroke-width="0.88"/>
</g>
<polygon points="1006.1,622.9 1033.6,631.7 1138.8,478.4 1113.2,471.1" fill="none" stroke="#141414" stroke-width="1.1" stroke-linejoin="round"/>
<clipPath id="h11"><polygon points="303.0,445.5 303.9,444.6 304.4,443.5 304.5,442.5 304.1,441.6 303.3,440.9 302.1,440.3 300.6,440.0 298.9,439.9 297.1,440.1 295.4,440.6 293.8,441.2 292.5,442.1 291.6,443.1 291.1,444.1 291.0,445.1 291.4,446.0 292.2,446.8 293.4,447.3 294.9,447.7 296.6,447.7 298.3,447.5 300.1,447.1 301.7,446.4"/></clipPath>
<g clip-path="url(#h11)">
<polygon points="303.0,445.5 303.9,444.6 304.4,443.5 304.5,442.5 304.1,441.6 303.3,440.9 302.1,440.3 300.6,440.0 298.9,439.9 297.1,440.1 295.4,440.6 293.8,441.2 292.5,442.1 291.6,443.1 291.1,444.1 291.0,445.1 291.4,446.0 292.2,446.8 293.4,447.3 294.9,447.7 296.6,447.7 298.3,447.5 300.1,447.1 301.7,446.4" fill="#8f8e8a"/>
<polygon points="304.5,442.5 304.1,441.6 306.3,449.8 306.6,450.7" fill="#7d7b77"/>
<polygon points="304.1,441.6 303.3,440.9 305.4,449.1 306.3,449.8" fill="#7d7b77"/>
<polygon points="303.3,440.9 302.1,440.3 304.2,448.5 305.4,449.1" fill="#7d7b77"/>
<polygon points="302.1,440.3 300.6,440.0 302.8,448.2 304.2,448.5" fill="#8f8e8a"/>
<polygon points="300.6,440.0 298.9,439.9 301.1,448.1 302.8,448.2" fill="#8f8e8a"/>
<polygon points="298.9,439.9 297.1,440.1 299.3,448.3 301.1,448.1" fill="#8f8e8a"/>
<polygon points="297.1,440.1 295.4,440.6 297.6,448.8 299.3,448.3" fill="#8f8e8a"/>
<polygon points="295.4,440.6 293.8,441.2 296.0,449.5 297.6,448.8" fill="#6a6864"/>
<polygon points="293.8,441.2 292.5,442.1 294.7,450.3 296.0,449.5" fill="#6a6864"/>
<polygon points="292.5,442.1 291.6,443.1 293.8,451.3 294.7,450.3" fill="#6a6864"/>
<polygon points="291.6,443.1 291.1,444.1 293.2,452.3 293.8,451.3" fill="#6a6864"/>
<polygon points="291.1,444.1 291.0,445.1 293.2,453.3 293.2,452.3" fill="#6a6864"/>
<polygon points="305.1,453.7 306.1,452.8 306.6,451.7 306.6,450.7 306.3,449.8 305.4,449.1 304.2,448.5 302.8,448.2 301.1,448.1 299.3,448.3 297.6,448.8 296.0,449.5 294.7,450.3 293.8,451.3 293.2,452.3 293.2,453.3 293.6,454.2 294.4,455.0 295.6,455.6 297.1,455.9 298.8,455.9 300.5,455.7 302.2,455.3 303.8,454.6" fill="#b9b9b4" stroke="#141414" stroke-width="0.80"/>
</g>
<polygon points="303.0,445.5 303.9,444.6 304.4,443.5 304.5,442.5 304.1,441.6 303.3,440.9 302.1,440.3 300.6,440.0 298.9,439.9 297.1,440.1 295.4,440.6 293.8,441.2 292.5,442.1 291.6,443.1 291.1,444.1 291.0,445.1 291.4,446.0 292.2,446.8 293.4,447.3 294.9,447.7 296.6,447.7 298.3,447.5 300.1,447.1 301.7,446.4" fill="none" stroke="#141414" stroke-width="1.0" stroke-linejoin="round"/>
<clipPath id="h12"><polygon points="546.6,247.0 547.3,246.3 547.6,245.5 547.5,244.7 547.1,244.0 546.3,243.4 545.1,243.0 543.8,242.8 542.3,242.7 540.8,242.9 539.3,243.2 538.1,243.7 537.0,244.4 536.3,245.1 536.0,245.9 536.1,246.7 536.5,247.4 537.4,248.0 538.5,248.4 539.8,248.6 541.3,248.7 542.8,248.5 544.3,248.2 545.6,247.7"/></clipPath>
<g clip-path="url(#h12)">
<polygon points="546.6,247.0 547.3,246.3 547.6,245.5 547.5,244.7 547.1,244.0 546.3,243.4 545.1,243.0 543.8,242.8 542.3,242.7 540.8,242.9 539.3,243.2 538.1,243.7 537.0,244.4 536.3,245.1 536.0,245.9 536.1,246.7 536.5,247.4 537.4,248.0 538.5,248.4 539.8,248.6 541.3,248.7 542.8,248.5 544.3,248.2 545.6,247.7" fill="#8f8e8a"/>
<polygon points="547.5,244.7 547.1,244.0 548.3,251.7 548.8,252.4" fill="#7d7b77"/>
<polygon points="547.1,244.0 546.3,243.4 547.5,251.2 548.3,251.7" fill="#7d7b77"/>
<polygon points="546.3,243.4 545.1,243.0 546.4,250.7 547.5,251.2" fill="#7d7b77"/>
<polygon points="545.1,243.0 543.8,242.8 545.0,250.5 546.4,250.7" fill="#8f8e8a"/>
<polygon points="543.8,242.8 542.3,242.7 543.5,250.4 545.0,250.5" fill="#8f8e8a"/>
<polygon points="542.3,242.7 540.8,242.9 542.0,250.6 543.5,250.4" fill="#8f8e8a"/>
<polygon points="540.8,242.9 539.3,243.2 540.6,250.9 542.0,250.6" fill="#8f8e8a"/>
<polygon points="539.3,243.2 538.1,243.7 539.3,251.5 540.6,250.9" fill="#6a6864"/>
<polygon points="538.1,243.7 537.0,244.4 538.3,252.1 539.3,251.5" fill="#6a6864"/>
<polygon points="537.0,244.4 536.3,245.1 537.6,252.8 538.3,252.1" fill="#6a6864"/>
<polygon points="536.3,245.1 536.0,245.9 537.3,253.6 537.6,252.8" fill="#6a6864"/>
<polygon points="536.0,245.9 536.1,246.7 537.3,254.4 537.3,253.6" fill="#7d7b77"/>
<polygon points="547.8,254.7 548.5,254.0 548.8,253.2 548.8,252.4 548.3,251.7 547.5,251.2 546.4,250.7 545.0,250.5 543.5,250.4 542.0,250.6 540.6,250.9 539.3,251.5 538.3,252.1 537.6,252.8 537.3,253.6 537.3,254.4 537.8,255.1 538.6,255.7 539.7,256.1 541.1,256.4 542.6,256.4 544.1,256.3 545.5,255.9 546.8,255.4" fill="#b9b9b4" stroke="#141414" stroke-width="0.80"/>
</g>
<polygon points="546.6,247.0 547.3,246.3 547.6,245.5 547.5,244.7 547.1,244.0 546.3,243.4 545.1,243.0 543.8,242.8 542.3,242.7 540.8,242.9 539.3,243.2 538.1,243.7 537.0,244.4 536.3,245.1 536.0,245.9 536.1,246.7 536.5,247.4 537.4,248.0 538.5,248.4 539.8,248.6 541.3,248.7 542.8,248.5 544.3,248.2 545.6,247.7" fill="none" stroke="#141414" stroke-width="1.0" stroke-linejoin="round"/>
<clipPath id="h13"><polygon points="1105.8,400.4 1106.3,399.5 1106.3,398.5 1105.9,397.6 1105.0,396.7 1103.9,396.0 1102.4,395.5 1100.8,395.1 1099.1,395.1 1097.5,395.3 1096.1,395.7 1094.9,396.4 1094.0,397.2 1093.6,398.1 1093.6,399.0 1094.0,400.0 1094.8,400.8 1096.0,401.6 1097.4,402.1 1099.1,402.4 1100.7,402.5 1102.4,402.3 1103.8,401.8 1105.0,401.2"/></clipPath>
<g clip-path="url(#h13)">
<polygon points="1105.8,400.4 1106.3,399.5 1106.3,398.5 1105.9,397.6 1105.0,396.7 1103.9,396.0 1102.4,395.5 1100.8,395.1 1099.1,395.1 1097.5,395.3 1096.1,395.7 1094.9,396.4 1094.0,397.2 1093.6,398.1 1093.6,399.0 1094.0,400.0 1094.8,400.8 1096.0,401.6 1097.4,402.1 1099.1,402.4 1100.7,402.5 1102.4,402.3 1103.8,401.8 1105.0,401.2" fill="#8f8e8a"/>
<polygon points="1106.3,399.5 1106.3,398.5 1105.9,406.6 1105.9,407.6" fill="#6a6864"/>
<polygon points="1106.3,398.5 1105.9,397.6 1105.5,405.7 1105.9,406.6" fill="#7d7b77"/>
<polygon points="1105.9,397.6 1105.0,396.7 1104.7,404.8 1105.5,405.7" fill="#7d7b77"/>
<polygon points="1105.0,396.7 1103.9,396.0 1103.5,404.1 1104.7,404.8" fill="#7d7b77"/>
<polygon points="1103.9,396.0 1102.4,395.5 1102.1,403.6 1103.5,404.1" fill="#7d7b77"/>
<polygon points="1102.4,395.5 1100.8,395.1 1100.5,403.3 1102.1,403.6" fill="#8f8e8a"/>
<polygon points="1100.8,395.1 1099.1,395.1 1098.8,403.2 1100.5,403.3" fill="#8f8e8a"/>
<polygon points="1099.1,395.1 1097.5,395.3 1097.2,403.4 1098.8,403.2" fill="#8f8e8a"/>
<polygon points="1097.5,395.3 1096.1,395.7 1095.8,403.8 1097.2,403.4" fill="#8f8e8a"/>
<polygon points="1096.1,395.7 1094.9,396.4 1094.6,404.5 1095.8,403.8" fill="#6a6864"/>
<polygon points="1094.9,396.4 1094.0,397.2 1093.7,405.3 1094.6,404.5" fill="#6a6864"/>
<polygon points="1094.0,397.2 1093.6,398.1 1093.3,406.2 1093.7,405.3" fill="#6a6864"/>
<polygon points="1105.5,408.5 1105.9,407.6 1105.9,406.6 1105.5,405.7 1104.7,404.8 1103.5,404.1 1102.1,403.6 1100.5,403.3 1098.8,403.2 1097.2,403.4 1095.8,403.8 1094.6,404.5 1093.7,405.3 1093.3,406.2 1093.3,407.1 1093.7,408.1 1094.5,409.0 1095.7,409.7 1097.1,410.2 1098.7,410.5 1100.4,410.6 1102.0,410.4 1103.5,410.0 1104.7,409.3" fill="#b9b9b4" stroke="#141414" stroke-width="0.80"/>
</g>
<polygon points="1105.8,400.4 1106.3,399.5 1106.3,398.5 1105.9,397.6 1105.0,396.7 1103.9,396.0 1102.4,395.5 1100.8,395.1 1099.1,395.1 1097.5,395.3 1096.1,395.7 1094.9,396.4 1094.0,397.2 1093.6,398.1 1093.6,399.0 1094.0,400.0 1094.8,400.8 1096.0,401.6 1097.4,402.1 1099.1,402.4 1100.7,402.5 1102.4,402.3 1103.8,401.8 1105.0,401.2" fill="none" stroke="#141414" stroke-width="1.0" stroke-linejoin="round"/>
<clipPath id="h14"><polygon points="779.5,417.5 783.5,412.9 787.0,408.2 789.8,403.4 792.1,398.6 793.8,393.7 794.9,388.9 795.4,384.0 795.3,379.2 794.7,374.5 793.4,369.8 791.6,365.3 789.3,360.9 786.4,356.6 782.9,352.5 779.0,348.6 774.6,344.9 769.8,341.4 764.5,338.1 758.8,335.1 752.8,332.3 746.4,329.8 739.7,327.6 732.7,325.6 725.4,324.0 717.9,322.6 710.2,321.5 702.4,320.8 694.5,320.3 686.4,320.2 678.3,320.3 670.2,320.8 662.1,321.6 654.0,322.6 646.0,324.0 638.1,325.7 630.4,327.7 622.8,329.9 615.5,332.4 608.4,335.2 601.6,338.2 595.2,341.5 589.0,345.0 583.3,348.7 577.9,352.7 573.0,356.8 568.5,361.0 564.5,365.4 561.0,370.0 558.1,374.6 555.6,379.4 553.8,384.2 552.5,389.0 551.8,393.9 551.7,398.7 552.2,403.6 553.3,408.3 555.1,413.0 557.4,417.6 560.3,422.1 563.8,426.4 567.9,430.5 572.5,434.5 577.7,438.2 583.4,441.7 589.5,444.9 596.1,447.8 603.2,450.4 610.6,452.7 618.3,454.7 626.4,456.3 634.7,457.6 643.3,458.5 652.0,459.1 660.8,459.2 669.7,459.0 678.6,458.5 687.4,457.5 696.2,456.3 704.9,454.6 713.4,452.6 721.6,450.3 729.6,447.7 737.3,444.8 744.7,441.5 751.6,438.1 758.2,434.4 764.2,430.4 769.8,426.3 774.9,422.0"/></clipPath>
<g clip-path="url(#h14)">
<polygon points="779.5,417.5 783.5,412.9 787.0,408.2 789.8,403.4 792.1,398.6 793.8,393.7 794.9,388.9 795.4,384.0 795.3,379.2 794.7,374.5 793.4,369.8 791.6,365.3 789.3,360.9 786.4,356.6 782.9,352.5 779.0,348.6 774.6,344.9 769.8,341.4 764.5,338.1 758.8,335.1 752.8,332.3 746.4,329.8 739.7,327.6 732.7,325.6 725.4,324.0 717.9,322.6 710.2,321.5 702.4,320.8 694.5,320.3 686.4,320.2 678.3,320.3 670.2,320.8 662.1,321.6 654.0,322.6 646.0,324.0 638.1,325.7 630.4,327.7 622.8,329.9 615.5,332.4 608.4,335.2 601.6,338.2 595.2,341.5 589.0,345.0 583.3,348.7 577.9,352.7 573.0,356.8 568.5,361.0 564.5,365.4 561.0,370.0 558.1,374.6 555.6,379.4 553.8,384.2 552.5,389.0 551.8,393.9 551.7,398.7 552.2,403.6 553.3,408.3 555.1,413.0 557.4,417.6 560.3,422.1 563.8,426.4 567.9,430.5 572.5,434.5 577.7,438.2 583.4,441.7 589.5,444.9 596.1,447.8 603.2,450.4 610.6,452.7 618.3,454.7 626.4,456.3 634.7,457.6 643.3,458.5 652.0,459.1 660.8,459.2 669.7,459.0 678.6,458.5 687.4,457.5 696.2,456.3 704.9,454.6 713.4,452.6 721.6,450.3 729.6,447.7 737.3,444.8 744.7,441.5 751.6,438.1 758.2,434.4 764.2,430.4 769.8,426.3 774.9,422.0" fill="url(#gFanWall)"/>
<polygon points="780.2,425.6 784.2,421.0 787.6,416.3 790.5,411.5 792.7,406.7 794.4,401.8 795.5,397.0 796.0,392.1 795.9,387.3 795.3,382.5 794.0,377.9 792.2,373.3 789.9,368.9 787.0,364.6 783.6,360.5 779.6,356.6 775.3,352.9 770.4,349.4 765.2,346.1 759.5,343.1 753.5,340.3 747.1,337.8 740.4,335.5 733.4,333.6 726.2,331.9 718.7,330.5 711.1,329.5 703.3,328.7 695.3,328.2 687.3,328.1 679.2,328.2 671.1,328.7 663.0,329.5 655.0,330.6 647.0,332.0 639.1,333.6 631.4,335.6 623.9,337.8 616.6,340.4 609.6,343.2 602.8,346.2 596.3,349.5 590.2,353.0 584.5,356.7 579.1,360.7 574.2,364.8 569.8,369.0 565.8,373.5 562.3,378.0 559.4,382.7 557.0,387.4 555.1,392.3 553.8,397.1 553.2,402.0 553.1,406.8 553.6,411.7 554.7,416.5 556.4,421.2 558.7,425.8 561.6,430.3 565.1,434.6 569.2,438.7 573.8,442.7 579.0,446.4 584.6,449.9 590.8,453.1 597.4,456.0 604.4,458.6 611.8,460.9 619.5,462.9 627.6,464.5 635.9,465.8 644.4,466.7 653.0,467.3 661.8,467.5 670.7,467.3 679.6,466.7 688.4,465.8 697.2,464.5 705.8,462.9 714.3,460.9 722.5,458.5 730.5,455.9 738.1,453.0 745.5,449.8 752.4,446.3 758.9,442.5 765.0,438.6 770.5,434.4 775.6,430.1" fill="url(#gFanIn)" stroke="none" stroke-width="1.04"/>
<clipPath id="hb15"><polygon points="780.2,425.6 784.2,421.0 787.6,416.3 790.5,411.5 792.7,406.7 794.4,401.8 795.5,397.0 796.0,392.1 795.9,387.3 795.3,382.5 794.0,377.9 792.2,373.3 789.9,368.9 787.0,364.6 783.6,360.5 779.6,356.6 775.3,352.9 770.4,349.4 765.2,346.1 759.5,343.1 753.5,340.3 747.1,337.8 740.4,335.5 733.4,333.6 726.2,331.9 718.7,330.5 711.1,329.5 703.3,328.7 695.3,328.2 687.3,328.1 679.2,328.2 671.1,328.7 663.0,329.5 655.0,330.6 647.0,332.0 639.1,333.6 631.4,335.6 623.9,337.8 616.6,340.4 609.6,343.2 602.8,346.2 596.3,349.5 590.2,353.0 584.5,356.7 579.1,360.7 574.2,364.8 569.8,369.0 565.8,373.5 562.3,378.0 559.4,382.7 557.0,387.4 555.1,392.3 553.8,397.1 553.2,402.0 553.1,406.8 553.6,411.7 554.7,416.5 556.4,421.2 558.7,425.8 561.6,430.3 565.1,434.6 569.2,438.7 573.8,442.7 579.0,446.4 584.6,449.9 590.8,453.1 597.4,456.0 604.4,458.6 611.8,460.9 619.5,462.9 627.6,464.5 635.9,465.8 644.4,466.7 653.0,467.3 661.8,467.5 670.7,467.3 679.6,466.7 688.4,465.8 697.2,464.5 705.8,462.9 714.3,460.9 722.5,458.5 730.5,455.9 738.1,453.0 745.5,449.8 752.4,446.3 758.9,442.5 765.0,438.6 770.5,434.4 775.6,430.1"/></clipPath><g clip-path="url(#hb15)"><g>
<polygon points="640,290 659,332 786,369 830,370 830,290" fill="#f1f1f1"/>
<g fill="none" stroke="#2a2a2a" stroke-width="0.9">
<path d="M690.0,300.0 L706.0,336.0 a5,4 0 0 0 9,1 L703.0,303.0"/><path d="M708.5,305.2 L724.5,341.2 a5,4 0 0 0 9,1 L721.5,308.2"/><path d="M727.0,310.4 L743.0,346.4 a5,4 0 0 0 9,1 L740.0,313.4"/><path d="M745.5,315.6 L761.5,351.6 a5,4 0 0 0 9,1 L758.5,318.6"/><path d="M764.0,320.8 L780.0,356.8 a5,4 0 0 0 9,1 L777.0,323.8"/><path d="M782.5,326.0 L798.5,362.0 a5,4 0 0 0 9,1 L795.5,329.0"/><path d="M801.0,331.2 L817.0,367.2 a5,4 0 0 0 9,1 L814.0,334.2"/>
</g>
<path d="M659,332 L786,369" stroke="#3a3f39" stroke-width="1"/>
<polygon points="540,300 659,332 800,372 800,395 627.5,346.2 540,410" fill="#7b8278" fill-opacity="0.75"/>
<path d="M627.5,346.2 L553.5,400.8 M627.5,346.2 L800,394 M630,340 L800,388 M540,392 L621,340 M648,336 L800,379" stroke="#3c423a" stroke-width="0.8" fill="none"/>
<path d="M566,436 Q660,345 800,414" stroke="#3c423a" stroke-width="0.8" fill="none"/>
</g></g>
</g>
<polygon points="779.5,417.5 783.5,412.9 787.0,408.2 789.8,403.4 792.1,398.6 793.8,393.7 794.9,388.9 795.4,384.0 795.3,379.2 794.7,374.5 793.4,369.8 791.6,365.3 789.3,360.9 786.4,356.6 782.9,352.5 779.0,348.6 774.6,344.9 769.8,341.4 764.5,338.1 758.8,335.1 752.8,332.3 746.4,329.8 739.7,327.6 732.7,325.6 725.4,324.0 717.9,322.6 710.2,321.5 702.4,320.8 694.5,320.3 686.4,320.2 678.3,320.3 670.2,320.8 662.1,321.6 654.0,322.6 646.0,324.0 638.1,325.7 630.4,327.7 622.8,329.9 615.5,332.4 608.4,335.2 601.6,338.2 595.2,341.5 589.0,345.0 583.3,348.7 577.9,352.7 573.0,356.8 568.5,361.0 564.5,365.4 561.0,370.0 558.1,374.6 555.6,379.4 553.8,384.2 552.5,389.0 551.8,393.9 551.7,398.7 552.2,403.6 553.3,408.3 555.1,413.0 557.4,417.6 560.3,422.1 563.8,426.4 567.9,430.5 572.5,434.5 577.7,438.2 583.4,441.7 589.5,444.9 596.1,447.8 603.2,450.4 610.6,452.7 618.3,454.7 626.4,456.3 634.7,457.6 643.3,458.5 652.0,459.1 660.8,459.2 669.7,459.0 678.6,458.5 687.4,457.5 696.2,456.3 704.9,454.6 713.4,452.6 721.6,450.3 729.6,447.7 737.3,444.8 744.7,441.5 751.6,438.1 758.2,434.4 764.2,430.4 769.8,426.3 774.9,422.0" fill="none" stroke="#141414" stroke-width="1.3" stroke-linejoin="round"/>
<clipPath id="h16"><polygon points="470.0,407.5 475.8,414.4 470.5,419.1 460.2,415.9 469.9,407.5"/></clipPath>
<g clip-path="url(#h16)">
<polygon points="470.0,407.5 475.8,414.4 470.5,419.1 460.2,415.9 469.9,407.5" fill="#8f8e8a"/>
<polygon points="470.0,407.5 475.8,414.4 477.4,422.5 471.6,415.6" fill="#7d7b77"/>
<polygon points="460.2,415.9 469.9,407.5 471.5,415.6 461.8,424.0" fill="#6a6864"/>
<polygon points="471.6,415.6 477.4,422.5 472.1,427.2 461.8,424.0 471.5,415.6" fill="#b4b4b0" stroke="#141414" stroke-width="0.80"/>
<line x1="470.0" y1="407.5" x2="471.6" y2="415.6" stroke="#141414" stroke-width="0.80"/>
<line x1="475.8" y1="414.4" x2="477.4" y2="422.5" stroke="#141414" stroke-width="0.80"/>
<line x1="470.5" y1="419.1" x2="472.1" y2="427.2" stroke="#141414" stroke-width="0.80"/>
<line x1="460.2" y1="415.9" x2="461.8" y2="424.0" stroke="#141414" stroke-width="0.80"/>
<line x1="469.9" y1="407.5" x2="471.5" y2="415.6" stroke="#141414" stroke-width="0.80"/>
</g>
<polygon points="470.0,407.5 475.8,414.4 470.5,419.1 460.2,415.9 469.9,407.5" fill="none" stroke="#141414" stroke-width="1.0" stroke-linejoin="round"/>
<clipPath id="h17"><polygon points="483.9,416.9 498.4,416.3 504.4,423.3 499.1,428.0 478.5,421.6"/></clipPath>
<g clip-path="url(#h17)">
<polygon points="483.9,416.9 498.4,416.3 504.4,423.3 499.1,428.0 478.5,421.6" fill="#8f8e8a"/>
<polygon points="483.9,416.9 498.4,416.3 499.9,424.4 485.4,425.0" fill="#8f8e8a"/>
<polygon points="498.4,416.3 504.4,423.3 505.9,431.4 499.9,424.4" fill="#7d7b77"/>
<polygon points="478.5,421.6 483.9,416.9 485.4,425.0 480.1,429.8" fill="#6a6864"/>
<polygon points="485.4,425.0 499.9,424.4 505.9,431.4 500.6,436.2 480.1,429.8" fill="#b4b4b0" stroke="#141414" stroke-width="0.80"/>
<line x1="483.9" y1="416.9" x2="485.4" y2="425.0" stroke="#141414" stroke-width="0.80"/>
<line x1="498.4" y1="416.3" x2="499.9" y2="424.4" stroke="#141414" stroke-width="0.80"/>
<line x1="504.4" y1="423.3" x2="505.9" y2="431.4" stroke="#141414" stroke-width="0.80"/>
<line x1="499.1" y1="428.0" x2="500.6" y2="436.2" stroke="#141414" stroke-width="0.80"/>
<line x1="478.5" y1="421.6" x2="480.1" y2="429.8" stroke="#141414" stroke-width="0.80"/>
</g>
<polygon points="483.9,416.9 498.4,416.3 504.4,423.3 499.1,428.0 478.5,421.6" fill="none" stroke="#141414" stroke-width="1.0" stroke-linejoin="round"/>
<clipPath id="h18"><polygon points="512.5,425.8 527.1,425.2 533.3,432.3 528.0,437.1 507.2,430.6"/></clipPath>
<g clip-path="url(#h18)">
<polygon points="512.5,425.8 527.1,425.2 533.3,432.3 528.0,437.1 507.2,430.6" fill="#8f8e8a"/>
<polygon points="512.5,425.8 527.1,425.2 528.6,433.4 514.0,434.0" fill="#8f8e8a"/>
<polygon points="527.1,425.2 533.3,432.3 534.7,440.5 528.6,433.4" fill="#7d7b77"/>
<polygon points="507.2,430.6 512.5,425.8 514.0,434.0 508.7,438.8" fill="#6a6864"/>
<polygon points="514.0,434.0 528.6,433.4 534.7,440.5 529.5,445.3 508.7,438.8" fill="#b4b4b0" stroke="#141414" stroke-width="0.80"/>
<line x1="512.5" y1="425.8" x2="514.0" y2="434.0" stroke="#141414" stroke-width="0.80"/>
<line x1="527.1" y1="425.2" x2="528.6" y2="433.4" stroke="#141414" stroke-width="0.80"/>
<line x1="533.3" y1="432.3" x2="534.7" y2="440.5" stroke="#141414" stroke-width="0.80"/>
<line x1="528.0" y1="437.1" x2="529.5" y2="445.3" stroke="#141414" stroke-width="0.80"/>
<line x1="507.2" y1="430.6" x2="508.7" y2="438.8" stroke="#141414" stroke-width="0.80"/>
</g>
<polygon points="512.5,425.8 527.1,425.2 533.3,432.3 528.0,437.1 507.2,430.6" fill="none" stroke="#141414" stroke-width="1.0" stroke-linejoin="round"/>
<clipPath id="h19"><polygon points="541.5,434.8 556.2,434.2 562.5,441.4 557.3,446.2 536.3,439.7"/></clipPath>
<g clip-path="url(#h19)">
<polygon points="541.5,434.8 556.2,434.2 562.5,441.4 557.3,446.2 536.3,439.7" fill="#8f8e8a"/>
<polygon points="541.5,434.8 556.2,434.2 557.5,442.4 542.9,443.0" fill="#8f8e8a"/>
<polygon points="556.2,434.2 562.5,441.4 563.9,449.6 557.5,442.4" fill="#7d7b77"/>
<polygon points="536.3,439.7 541.5,434.8 542.9,443.0 537.7,447.9" fill="#6a6864"/>
<polygon points="542.9,443.0 557.5,442.4 563.9,449.6 558.7,454.5 537.7,447.9" fill="#b4b4b0" stroke="#141414" stroke-width="0.80"/>
<line x1="541.5" y1="434.8" x2="542.9" y2="443.0" stroke="#141414" stroke-width="0.80"/>
<line x1="556.2" y1="434.2" x2="557.5" y2="442.4" stroke="#141414" stroke-width="0.80"/>
<line x1="562.5" y1="441.4" x2="563.9" y2="449.6" stroke="#141414" stroke-width="0.80"/>
<line x1="557.3" y1="446.2" x2="558.7" y2="454.5" stroke="#141414" stroke-width="0.80"/>
<line x1="536.3" y1="439.7" x2="537.7" y2="447.9" stroke="#141414" stroke-width="0.80"/>
</g>
<polygon points="541.5,434.8 556.2,434.2 562.5,441.4 557.3,446.2 536.3,439.7" fill="none" stroke="#141414" stroke-width="1.0" stroke-linejoin="round"/>
<clipPath id="h20"><polygon points="570.8,444.0 571.1,443.9 575.3,446.4 579.9,448.9 584.8,451.3 589.4,453.2 587.0,455.5 565.7,448.8"/></clipPath>
<g clip-path="url(#h20)">
<polygon points="570.8,444.0 571.1,443.9 575.3,446.4 579.9,448.9 584.8,451.3 589.4,453.2 587.0,455.5 565.7,448.8" fill="#8f8e8a"/>
<polygon points="570.8,444.0 571.1,443.9 572.5,452.2 572.2,452.2" fill="#8f8e8a"/>
<polygon points="571.1,443.9 575.3,446.4 576.6,454.7 572.5,452.2" fill="#7d7b77"/>
<polygon points="575.3,446.4 579.9,448.9 581.2,457.2 576.6,454.7" fill="#7d7b77"/>
<polygon points="579.9,448.9 584.8,451.3 586.1,459.5 581.2,457.2" fill="#7d7b77"/>
<polygon points="584.8,451.3 589.4,453.2 590.6,461.4 586.1,459.5" fill="#7d7b77"/>
<polygon points="565.7,448.8 570.8,444.0 572.2,452.2 567.0,457.1" fill="#6a6864"/>
<polygon points="572.2,452.2 572.5,452.2 576.6,454.7 581.2,457.2 586.1,459.5 590.6,461.4 588.2,463.7 567.0,457.1" fill="#b4b4b0" stroke="#141414" stroke-width="0.80"/>
<line x1="570.8" y1="444.0" x2="572.2" y2="452.2" stroke="#141414" stroke-width="0.80"/>
<line x1="571.1" y1="443.9" x2="572.5" y2="452.2" stroke="#141414" stroke-width="0.80"/>
<line x1="575.3" y1="446.4" x2="576.6" y2="454.7" stroke="#141414" stroke-width="0.80"/>
<line x1="579.9" y1="448.9" x2="581.2" y2="457.2" stroke="#141414" stroke-width="0.80"/>
<line x1="584.8" y1="451.3" x2="586.1" y2="459.5" stroke="#141414" stroke-width="0.80"/>
<line x1="589.4" y1="453.2" x2="590.6" y2="461.4" stroke="#141414" stroke-width="0.80"/>
<line x1="587.0" y1="455.5" x2="588.2" y2="463.7" stroke="#141414" stroke-width="0.80"/>
<line x1="565.7" y1="448.8" x2="567.0" y2="457.1" stroke="#141414" stroke-width="0.80"/>
</g>
<polygon points="570.8,444.0 571.1,443.9 575.3,446.4 579.9,448.9 584.8,451.3 589.4,453.2 587.0,455.5 565.7,448.8" fill="none" stroke="#141414" stroke-width="1.0" stroke-linejoin="round"/>
<clipPath id="h21"><polygon points="597.4,456.2 600.9,457.3 606.6,459.0 612.6,460.5 618.7,461.8 619.8,462.0 617.0,464.9 595.4,458.1"/></clipPath>
<g clip-path="url(#h21)">
<polygon points="597.4,456.2 600.9,457.3 606.6,459.0 612.6,460.5 618.7,461.8 619.8,462.0 617.0,464.9 595.4,458.1" fill="#8f8e8a"/>
<polygon points="597.4,456.2 600.9,457.3 602.1,465.6 598.7,464.4" fill="#8f8e8a"/>
<polygon points="600.9,457.3 606.6,459.0 607.9,467.3 602.1,465.6" fill="#8f8e8a"/>
<polygon points="606.6,459.0 612.6,460.5 613.8,468.8 607.9,467.3" fill="#8f8e8a"/>
<polygon points="612.6,460.5 618.7,461.8 619.9,470.1 613.8,468.8" fill="#8f8e8a"/>
<polygon points="618.7,461.8 619.8,462.0 621.0,470.3 619.9,470.1" fill="#8f8e8a"/>
<polygon points="595.4,458.1 597.4,456.2 598.7,464.4 596.6,466.4" fill="#6a6864"/>
<polygon points="598.7,464.4 602.1,465.6 607.9,467.3 613.8,468.8 619.9,470.1 621.0,470.3 618.1,473.1 596.6,466.4" fill="#b4b4b0" stroke="#141414" stroke-width="0.80"/>
<line x1="597.4" y1="456.2" x2="598.7" y2="464.4" stroke="#141414" stroke-width="0.80"/>
<line x1="600.9" y1="457.3" x2="602.1" y2="465.6" stroke="#141414" stroke-width="0.80"/>
<line x1="606.6" y1="459.0" x2="607.9" y2="467.3" stroke="#141414" stroke-width="0.80"/>
<line x1="612.6" y1="460.5" x2="613.8" y2="468.8" stroke="#141414" stroke-width="0.80"/>
<line x1="618.7" y1="461.8" x2="619.9" y2="470.1" stroke="#141414" stroke-width="0.80"/>
<line x1="619.8" y1="462.0" x2="621.0" y2="470.3" stroke="#141414" stroke-width="0.80"/>
<line x1="617.0" y1="464.9" x2="618.1" y2="473.1" stroke="#141414" stroke-width="0.80"/>
<line x1="595.4" y1="458.1" x2="596.6" y2="466.4" stroke="#141414" stroke-width="0.80"/>
</g>
<polygon points="597.4,456.2 600.9,457.3 606.6,459.0 612.6,460.5 618.7,461.8 619.8,462.0 617.0,464.9 595.4,458.1" fill="none" stroke="#141414" stroke-width="1.0" stroke-linejoin="round"/>
<clipPath id="h22"><polygon points="652.3,469.3 647.3,474.4 625.5,467.5 629.4,463.6 631.4,463.9 637.9,464.7 644.5,465.2 648.7,465.4"/></clipPath>
<g clip-path="url(#h22)">
<polygon points="652.3,469.3 647.3,474.4 625.5,467.5 629.4,463.6 631.4,463.9 637.9,464.7 644.5,465.2 648.7,465.4" fill="#8f8e8a"/>
<polygon points="625.5,467.5 629.4,463.6 630.6,471.9 626.6,475.8" fill="#6a6864"/>
<polygon points="629.4,463.6 631.4,463.9 632.5,472.2 630.6,471.9" fill="#8f8e8a"/>
<polygon points="631.4,463.9 637.9,464.7 639.0,472.9 632.5,472.2" fill="#8f8e8a"/>
<polygon points="637.9,464.7 644.5,465.2 645.6,473.5 639.0,472.9" fill="#8f8e8a"/>
<polygon points="644.5,465.2 648.7,465.4 649.8,473.7 645.6,473.5" fill="#8f8e8a"/>
<polygon points="648.7,465.4 652.3,469.3 653.4,477.6 649.8,473.7" fill="#7d7b77"/>
<polygon points="653.4,477.6 648.4,482.6 626.6,475.8 630.6,471.9 632.5,472.2 639.0,472.9 645.6,473.5 649.8,473.7" fill="#b4b4b0" stroke="#141414" stroke-width="0.80"/>
<line x1="652.3" y1="469.3" x2="653.4" y2="477.6" stroke="#141414" stroke-width="0.80"/>
<line x1="647.3" y1="474.4" x2="648.4" y2="482.6" stroke="#141414" stroke-width="0.80"/>
<line x1="625.5" y1="467.5" x2="626.6" y2="475.8" stroke="#141414" stroke-width="0.80"/>
<line x1="629.4" y1="463.6" x2="630.6" y2="471.9" stroke="#141414" stroke-width="0.80"/>
<line x1="631.4" y1="463.9" x2="632.5" y2="472.2" stroke="#141414" stroke-width="0.80"/>
<line x1="637.9" y1="464.7" x2="639.0" y2="472.9" stroke="#141414" stroke-width="0.80"/>
<line x1="644.5" y1="465.2" x2="645.6" y2="473.5" stroke="#141414" stroke-width="0.80"/>
<line x1="648.7" y1="465.4" x2="649.8" y2="473.7" stroke="#141414" stroke-width="0.80"/>
</g>
<polygon points="652.3,469.3 647.3,474.4 625.5,467.5 629.4,463.6 631.4,463.9 637.9,464.7 644.5,465.2 648.7,465.4" fill="none" stroke="#141414" stroke-width="1.0" stroke-linejoin="round"/>
<clipPath id="h23"><polygon points="660.9,472.0 675.9,471.4 682.9,478.9 678.0,484.0 655.9,477.1"/></clipPath>
<g clip-path="url(#h23)">
<polygon points="660.9,472.0 675.9,471.4 682.9,478.9 678.0,484.0 655.9,477.1" fill="#8f8e8a"/>
<polygon points="660.9,472.0 675.9,471.4 676.9,479.6 662.0,480.3" fill="#8f8e8a"/>
<polygon points="675.9,471.4 682.9,478.9 683.9,487.1 676.9,479.6" fill="#7d7b77"/>
<polygon points="655.9,477.1 660.9,472.0 662.0,480.3 657.0,485.3" fill="#6a6864"/>
<polygon points="662.0,480.3 676.9,479.6 683.9,487.1 679.0,492.2 657.0,485.3" fill="#b4b4b0" stroke="#141414" stroke-width="0.80"/>
<line x1="660.9" y1="472.0" x2="662.0" y2="480.3" stroke="#141414" stroke-width="0.80"/>
<line x1="675.9" y1="471.4" x2="676.9" y2="479.6" stroke="#141414" stroke-width="0.80"/>
<line x1="682.9" y1="478.9" x2="683.9" y2="487.1" stroke="#141414" stroke-width="0.80"/>
<line x1="678.0" y1="484.0" x2="679.0" y2="492.2" stroke="#141414" stroke-width="0.80"/>
<line x1="655.9" y1="477.1" x2="657.0" y2="485.3" stroke="#141414" stroke-width="0.80"/>
</g>
<polygon points="660.9,472.0 675.9,471.4 682.9,478.9 678.0,484.0 655.9,477.1" fill="none" stroke="#141414" stroke-width="1.0" stroke-linejoin="round"/>
<clipPath id="h24"><polygon points="691.6,481.6 706.7,480.9 713.9,488.5 709.1,493.7 686.7,486.7"/></clipPath>
<g clip-path="url(#h24)">
<polygon points="691.6,481.6 706.7,480.9 713.9,488.5 709.1,493.7 686.7,486.7" fill="#8f8e8a"/>
<polygon points="691.6,481.6 706.7,480.9 707.6,489.2 692.6,489.9" fill="#8f8e8a"/>
<polygon points="706.7,480.9 713.9,488.5 714.8,496.8 707.6,489.2" fill="#7d7b77"/>
<polygon points="686.7,486.7 691.6,481.6 692.6,489.9 687.7,495.0" fill="#6a6864"/>
<polygon points="692.6,489.9 707.6,489.2 714.8,496.8 710.0,502.0 687.7,495.0" fill="#b4b4b0" stroke="#141414" stroke-width="0.80"/>
<line x1="691.6" y1="481.6" x2="692.6" y2="489.9" stroke="#141414" stroke-width="0.80"/>
<line x1="706.7" y1="480.9" x2="707.6" y2="489.2" stroke="#141414" stroke-width="0.80"/>
<line x1="713.9" y1="488.5" x2="714.8" y2="496.8" stroke="#141414" stroke-width="0.80"/>
<line x1="709.1" y1="493.7" x2="710.0" y2="502.0" stroke="#141414" stroke-width="0.80"/>
<line x1="686.7" y1="486.7" x2="687.7" y2="495.0" stroke="#141414" stroke-width="0.80"/>
</g>
<polygon points="691.6,481.6 706.7,480.9 713.9,488.5 709.1,493.7 686.7,486.7" fill="none" stroke="#141414" stroke-width="1.0" stroke-linejoin="round"/>
<clipPath id="h25"><polygon points="499.4,410.6 484.9,411.2 479.0,404.3 487.5,396.9 501.9,396.3 507.8,403.1"/></clipPath>
<g clip-path="url(#h25)">
<polygon points="499.4,410.6 484.9,411.2 479.0,404.3 487.5,396.9 501.9,396.3 507.8,403.1" fill="#8f8e8a"/>
<polygon points="479.0,404.3 487.5,396.9 489.1,405.0 480.6,412.4" fill="#6a6864"/>
<polygon points="487.5,396.9 501.9,396.3 503.4,404.4 489.1,405.0" fill="#8f8e8a"/>
<polygon points="501.9,396.3 507.8,403.1 509.3,411.3 503.4,404.4" fill="#7d7b77"/>
<polygon points="500.9,418.7 486.5,419.3 480.6,412.4 489.1,405.0 503.4,404.4 509.3,411.3" fill="#b4b4b0" stroke="#141414" stroke-width="0.80"/>
<line x1="499.4" y1="410.6" x2="500.9" y2="418.7" stroke="#141414" stroke-width="0.80"/>
<line x1="484.9" y1="411.2" x2="486.5" y2="419.3" stroke="#141414" stroke-width="0.80"/>
<line x1="479.0" y1="404.3" x2="480.6" y2="412.4" stroke="#141414" stroke-width="0.80"/>
<line x1="487.5" y1="396.9" x2="489.1" y2="405.0" stroke="#141414" stroke-width="0.80"/>
<line x1="501.9" y1="396.3" x2="503.4" y2="404.4" stroke="#141414" stroke-width="0.80"/>
<line x1="507.8" y1="403.1" x2="509.3" y2="411.3" stroke="#141414" stroke-width="0.80"/>
</g>
<polygon points="499.4,410.6 484.9,411.2 479.0,404.3 487.5,396.9 501.9,396.3 507.8,403.1" fill="none" stroke="#141414" stroke-width="1.0" stroke-linejoin="round"/>
<clipPath id="h26"><polygon points="528.0,419.5 513.5,420.1 507.4,413.1 515.8,405.6 530.3,405.0 536.4,411.9"/></clipPath>
<g clip-path="url(#h26)">
<polygon points="528.0,419.5 513.5,420.1 507.4,413.1 515.8,405.6 530.3,405.0 536.4,411.9" fill="#8f8e8a"/>
<polygon points="507.4,413.1 515.8,405.6 517.3,413.7 508.9,421.2" fill="#6a6864"/>
<polygon points="515.8,405.6 530.3,405.0 531.7,413.1 517.3,413.7" fill="#8f8e8a"/>
<polygon points="530.3,405.0 536.4,411.9 537.8,420.0 531.7,413.1" fill="#7d7b77"/>
<polygon points="529.4,427.6 514.9,428.2 508.9,421.2 517.3,413.7 531.7,413.1 537.8,420.0" fill="#b4b4b0" stroke="#141414" stroke-width="0.80"/>
<line x1="528.0" y1="419.5" x2="529.4" y2="427.6" stroke="#141414" stroke-width="0.80"/>
<line x1="513.5" y1="420.1" x2="514.9" y2="428.2" stroke="#141414" stroke-width="0.80"/>
<line x1="507.4" y1="413.1" x2="508.9" y2="421.2" stroke="#141414" stroke-width="0.80"/>
<line x1="515.8" y1="405.6" x2="517.3" y2="413.7" stroke="#141414" stroke-width="0.80"/>
<line x1="530.3" y1="405.0" x2="531.7" y2="413.1" stroke="#141414" stroke-width="0.80"/>
<line x1="536.4" y1="411.9" x2="537.8" y2="420.0" stroke="#141414" stroke-width="0.80"/>
</g>
<polygon points="528.0,419.5 513.5,420.1 507.4,413.1 515.8,405.6 530.3,405.0 536.4,411.9" fill="none" stroke="#141414" stroke-width="1.0" stroke-linejoin="round"/>
<clipPath id="h27"><polygon points="542.4,429.0 536.1,422.0 544.5,414.4 544.7,415.1 546.4,418.6 548.4,422.1 550.7,425.5 553.1,428.6"/></clipPath>
<g clip-path="url(#h27)">
<polygon points="542.4,429.0 536.1,422.0 544.5,414.4 544.7,415.1 546.4,418.6 548.4,422.1 550.7,425.5 553.1,428.6" fill="#8f8e8a"/>
<polygon points="536.1,422.0 544.5,414.4 545.8,422.6 537.6,430.1" fill="#6a6864"/>
<polygon points="544.5,414.4 544.7,415.1 546.1,423.2 545.8,422.6" fill="#7d7b77"/>
<polygon points="544.7,415.1 546.4,418.6 547.7,426.8 546.1,423.2" fill="#7d7b77"/>
<polygon points="546.4,418.6 548.4,422.1 549.7,430.2 547.7,426.8" fill="#7d7b77"/>
<polygon points="548.4,422.1 550.7,425.5 552.0,433.6 549.7,430.2" fill="#7d7b77"/>
<polygon points="550.7,425.5 553.1,428.6 554.5,436.7 552.0,433.6" fill="#7d7b77"/>
<polygon points="543.8,437.2 537.6,430.1 545.8,422.6 546.1,423.2 547.7,426.8 549.7,430.2 552.0,433.6 554.5,436.7" fill="#b4b4b0" stroke="#141414" stroke-width="0.80"/>
<line x1="542.4" y1="429.0" x2="543.8" y2="437.2" stroke="#141414" stroke-width="0.80"/>
<line x1="536.1" y1="422.0" x2="537.6" y2="430.1" stroke="#141414" stroke-width="0.80"/>
<line x1="544.5" y1="414.4" x2="545.8" y2="422.6" stroke="#141414" stroke-width="0.80"/>
<line x1="544.7" y1="415.1" x2="546.1" y2="423.2" stroke="#141414" stroke-width="0.80"/>
<line x1="546.4" y1="418.6" x2="547.7" y2="426.8" stroke="#141414" stroke-width="0.80"/>
<line x1="548.4" y1="422.1" x2="549.7" y2="430.2" stroke="#141414" stroke-width="0.80"/>
<line x1="550.7" y1="425.5" x2="552.0" y2="433.6" stroke="#141414" stroke-width="0.80"/>
<line x1="553.1" y1="428.6" x2="554.5" y2="436.7" stroke="#141414" stroke-width="0.80"/>
</g>
<polygon points="542.4,429.0 536.1,422.0 544.5,414.4 544.7,415.1 546.4,418.6 548.4,422.1 550.7,425.5 553.1,428.6" fill="none" stroke="#141414" stroke-width="1.0" stroke-linejoin="round"/>
<clipPath id="h28"><polygon points="714.7,466.7 706.9,474.8 691.9,475.4 684.8,467.9 688.9,463.8 691.9,463.4 698.6,462.4 705.3,461.1 708.6,460.4"/></clipPath>
<g clip-path="url(#h28)">
<polygon points="714.7,466.7 706.9,474.8 691.9,475.4 684.8,467.9 688.9,463.8 691.9,463.4 698.6,462.4 705.3,461.1 708.6,460.4" fill="#8f8e8a"/>
<polygon points="684.8,467.9 688.9,463.8 689.9,472.0 685.8,476.2" fill="#6a6864"/>
<polygon points="688.9,463.8 691.9,463.4 692.9,471.7 689.9,472.0" fill="#8f8e8a"/>
<polygon points="691.9,463.4 698.6,462.4 699.6,470.6 692.9,471.7" fill="#8f8e8a"/>
<polygon points="698.6,462.4 705.3,461.1 706.2,469.4 699.6,470.6" fill="#8f8e8a"/>
<polygon points="705.3,461.1 708.6,460.4 709.5,468.7 706.2,469.4" fill="#8f8e8a"/>
<polygon points="708.6,460.4 714.7,466.7 715.6,474.9 709.5,468.7" fill="#7d7b77"/>
<polygon points="715.6,474.9 707.8,483.0 692.9,483.7 685.8,476.2 689.9,472.0 692.9,471.7 699.6,470.6 706.2,469.4 709.5,468.7" fill="#b4b4b0" stroke="#141414" stroke-width="0.80"/>
</g>
<polygon points="714.7,466.7 706.9,474.8 691.9,475.4 684.8,467.9 688.9,463.8 691.9,463.4 698.6,462.4 705.3,461.1 708.6,460.4" fill="none" stroke="#141414" stroke-width="1.0" stroke-linejoin="round"/>
<clipPath id="h29"><polygon points="715.6,477.5 723.4,469.3 732.7,468.9 720.2,482.2"/></clipPath>
<g clip-path="url(#h29)">
<polygon points="715.6,477.5 723.4,469.3 732.7,468.9 720.2,482.2" fill="#8f8e8a"/>
<polygon points="715.6,477.5 723.4,469.3 724.2,477.6 716.5,485.7" fill="#6a6864"/>
<polygon points="723.4,469.3 732.7,468.9 733.5,477.2 724.2,477.6" fill="#8f8e8a"/>
<polygon points="716.5,485.7 724.2,477.6 733.5,477.2 721.1,490.5" fill="#b4b4b0" stroke="#141414" stroke-width="0.80"/>
<line x1="715.6" y1="477.5" x2="716.5" y2="485.7" stroke="#141414" stroke-width="0.80"/>
<line x1="723.4" y1="469.3" x2="724.2" y2="477.6" stroke="#141414" stroke-width="0.80"/>
<line x1="732.7" y1="468.9" x2="733.5" y2="477.2" stroke="#141414" stroke-width="0.80"/>
<line x1="720.2" y1="482.2" x2="721.1" y2="490.5" stroke="#141414" stroke-width="0.80"/>
</g>
<polygon points="715.6,477.5 723.4,469.3 732.7,468.9 720.2,482.2" fill="none" stroke="#141414" stroke-width="1.0" stroke-linejoin="round"/>
<clipPath id="h30"><polygon points="505.3,376.9 511.2,383.5 502.8,390.8 488.6,391.4 488.5,391.3 505.2,376.9"/></clipPath>
<g clip-path="url(#h30)">
<polygon points="505.3,376.9 511.2,383.5 502.8,390.8 488.6,391.4 488.5,391.3 505.2,376.9" fill="#8f8e8a"/>
<polygon points="505.3,376.9 511.2,383.5 512.6,391.6 506.7,384.9" fill="#7d7b77"/>
<polygon points="488.5,391.3 505.2,376.9 506.6,384.9 490.0,399.4" fill="#6a6864"/>
<polygon points="506.7,384.9 512.6,391.6 504.3,398.9 490.1,399.5 490.0,399.4 506.6,384.9" fill="#b4b4b0" stroke="#141414" stroke-width="0.80"/>
<line x1="505.3" y1="376.9" x2="506.7" y2="384.9" stroke="#141414" stroke-width="0.80"/>
<line x1="511.2" y1="383.5" x2="512.6" y2="391.6" stroke="#141414" stroke-width="0.80"/>
<line x1="502.8" y1="390.8" x2="504.3" y2="398.9" stroke="#141414" stroke-width="0.80"/>
<line x1="488.6" y1="391.4" x2="490.1" y2="399.5" stroke="#141414" stroke-width="0.80"/>
<line x1="488.5" y1="391.3" x2="490.0" y2="399.4" stroke="#141414" stroke-width="0.80"/>
<line x1="505.2" y1="376.9" x2="506.6" y2="384.9" stroke="#141414" stroke-width="0.80"/>
</g>
<polygon points="505.3,376.9 511.2,383.5 502.8,390.8 488.6,391.4 488.5,391.3 505.2,376.9" fill="none" stroke="#141414" stroke-width="1.0" stroke-linejoin="round"/>
<clipPath id="h31"><polygon points="531.1,399.4 516.8,400.0 510.8,393.2 519.1,385.9 533.3,385.3 539.4,392.1"/></clipPath>
<g clip-path="url(#h31)">
<polygon points="531.1,399.4 516.8,400.0 510.8,393.2 519.1,385.9 533.3,385.3 539.4,392.1" fill="#8f8e8a"/>
<polygon points="510.8,393.2 519.1,385.9 520.5,394.0 512.2,401.3" fill="#6a6864"/>
<polygon points="519.1,385.9 533.3,385.3 534.7,393.4 520.5,394.0" fill="#8f8e8a"/>
<polygon points="533.3,385.3 539.4,392.1 540.7,400.2 534.7,393.4" fill="#7d7b77"/>
<polygon points="532.5,407.5 518.2,408.1 512.2,401.3 520.5,394.0 534.7,393.4 540.7,400.2" fill="#b4b4b0" stroke="#141414" stroke-width="0.80"/>
<line x1="531.1" y1="399.4" x2="532.5" y2="407.5" stroke="#141414" stroke-width="0.80"/>
<line x1="516.8" y1="400.0" x2="518.2" y2="408.1" stroke="#141414" stroke-width="0.80"/>
<line x1="510.8" y1="393.2" x2="512.2" y2="401.3" stroke="#141414" stroke-width="0.80"/>
<line x1="519.1" y1="385.9" x2="520.5" y2="394.0" stroke="#141414" stroke-width="0.80"/>
<line x1="533.3" y1="385.3" x2="534.7" y2="393.4" stroke="#141414" stroke-width="0.80"/>
<line x1="539.4" y1="392.1" x2="540.7" y2="400.2" stroke="#141414" stroke-width="0.80"/>
</g>
<polygon points="531.1,399.4 516.8,400.0 510.8,393.2 519.1,385.9 533.3,385.3 539.4,392.1" fill="none" stroke="#141414" stroke-width="1.0" stroke-linejoin="round"/>
<clipPath id="h32"><polygon points="745.9,454.7 738.4,462.6 723.5,463.3 718.5,458.1 724.6,456.3 730.8,454.4 736.8,452.3 741.7,450.4"/></clipPath>
<g clip-path="url(#h32)">
<polygon points="745.9,454.7 738.4,462.6 723.5,463.3 718.5,458.1 724.6,456.3 730.8,454.4 736.8,452.3 741.7,450.4" fill="#8f8e8a"/>
<polygon points="718.5,458.1 724.6,456.3 725.4,464.6 719.3,466.3" fill="#8f8e8a"/>
<polygon points="724.6,456.3 730.8,454.4 731.6,462.6 725.4,464.6" fill="#8f8e8a"/>
<polygon points="730.8,454.4 736.8,452.3 737.6,460.5 731.6,462.6" fill="#8f8e8a"/>
<polygon points="736.8,452.3 741.7,450.4 742.5,458.6 737.6,460.5" fill="#6a6864"/>
<polygon points="741.7,450.4 745.9,454.7 746.7,462.9 742.5,458.6" fill="#7d7b77"/>
<polygon points="746.7,462.9 739.2,470.9 724.4,471.5 719.3,466.3 725.4,464.6 731.6,462.6 737.6,460.5 742.5,458.6" fill="#b4b4b0" stroke="#141414" stroke-width="0.80"/>
<line x1="745.9" y1="454.7" x2="746.7" y2="462.9" stroke="#141414" stroke-width="0.80"/>
<line x1="738.4" y1="462.6" x2="739.2" y2="470.9" stroke="#141414" stroke-width="0.80"/>
<line x1="723.5" y1="463.3" x2="724.4" y2="471.5" stroke="#141414" stroke-width="0.80"/>
<line x1="718.5" y1="458.1" x2="719.3" y2="466.3" stroke="#141414" stroke-width="0.80"/>
<line x1="724.6" y1="456.3" x2="725.4" y2="464.6" stroke="#141414" stroke-width="0.80"/>
<line x1="730.8" y1="454.4" x2="731.6" y2="462.6" stroke="#141414" stroke-width="0.80"/>
<line x1="736.8" y1="452.3" x2="737.6" y2="460.5" stroke="#141414" stroke-width="0.80"/>
<line x1="741.7" y1="450.4" x2="742.5" y2="458.6" stroke="#141414" stroke-width="0.80"/>
</g>
<polygon points="745.9,454.7 738.4,462.6 723.5,463.3 718.5,458.1 724.6,456.3 730.8,454.4 736.8,452.3 741.7,450.4" fill="none" stroke="#141414" stroke-width="1.0" stroke-linejoin="round"/>
<clipPath id="h33"><polygon points="534.2,379.9 520.0,380.5 514.1,373.8 522.2,366.7 536.3,366.2 542.3,372.7"/></clipPath>
<g clip-path="url(#h33)">
<polygon points="534.2,379.9 520.0,380.5 514.1,373.8 522.2,366.7 536.3,366.2 542.3,372.7" fill="#8f8e8a"/>
<polygon points="514.1,373.8 522.2,366.7 523.6,374.8 515.5,381.9" fill="#6a6864"/>
<polygon points="522.2,366.7 536.3,366.2 537.6,374.2 523.6,374.8" fill="#8f8e8a"/>
<polygon points="536.3,366.2 542.3,372.7 543.6,380.8 537.6,374.2" fill="#7d7b77"/>
<polygon points="535.5,388.0 521.4,388.5 515.5,381.9 523.6,374.8 537.6,374.2 543.6,380.8" fill="#b4b4b0" stroke="#141414" stroke-width="0.80"/>
<line x1="534.2" y1="379.9" x2="535.5" y2="388.0" stroke="#141414" stroke-width="0.80"/>
<line x1="520.0" y1="380.5" x2="521.4" y2="388.5" stroke="#141414" stroke-width="0.80"/>
<line x1="514.1" y1="373.8" x2="515.5" y2="381.9" stroke="#141414" stroke-width="0.80"/>
<line x1="522.2" y1="366.7" x2="523.6" y2="374.8" stroke="#141414" stroke-width="0.80"/>
<line x1="536.3" y1="366.2" x2="537.6" y2="374.2" stroke="#141414" stroke-width="0.80"/>
<line x1="542.3" y1="372.7" x2="543.6" y2="380.8" stroke="#141414" stroke-width="0.80"/>
</g>
<polygon points="534.2,379.9 520.0,380.5 514.1,373.8 522.2,366.7 536.3,366.2 542.3,372.7" fill="none" stroke="#141414" stroke-width="1.0" stroke-linejoin="round"/>
<clipPath id="h34"><polygon points="539.2,347.5 545.1,353.9 537.1,360.9 523.1,361.4 523.1,361.4 539.1,347.5"/></clipPath>
<g clip-path="url(#h34)">
<polygon points="539.2,347.5 545.1,353.9 537.1,360.9 523.1,361.4 523.1,361.4 539.1,347.5" fill="#8f8e8a"/>
<polygon points="539.2,347.5 545.1,353.9 546.4,361.9 540.5,355.5" fill="#7d7b77"/>
<polygon points="523.1,361.4 539.1,347.5 540.4,355.5 524.5,369.4" fill="#6a6864"/>
<polygon points="540.5,355.5 546.4,361.9 538.5,368.9 524.5,369.4 524.5,369.4 540.4,355.5" fill="#b4b4b0" stroke="#141414" stroke-width="0.80"/>
<line x1="539.2" y1="347.5" x2="540.5" y2="355.5" stroke="#141414" stroke-width="0.80"/>
<line x1="545.1" y1="353.9" x2="546.4" y2="361.9" stroke="#141414" stroke-width="0.80"/>
<line x1="537.1" y1="360.9" x2="538.5" y2="368.9" stroke="#141414" stroke-width="0.80"/>
<line x1="523.1" y1="361.4" x2="524.5" y2="369.4" stroke="#141414" stroke-width="0.80"/>
<line x1="523.1" y1="361.4" x2="524.5" y2="369.4" stroke="#141414" stroke-width="0.80"/>
<line x1="539.1" y1="347.5" x2="540.4" y2="355.5" stroke="#141414" stroke-width="0.80"/>
</g>
<polygon points="539.2,347.5 545.1,353.9 537.1,360.9 523.1,361.4 523.1,361.4 539.1,347.5" fill="none" stroke="#141414" stroke-width="1.0" stroke-linejoin="round"/>
<clipPath id="h35"><polygon points="544.9,363.2 552.9,356.2 563.0,355.8 561.1,357.5 557.9,360.8 554.9,364.2 552.3,367.7 550.9,369.6"/></clipPath>
<g clip-path="url(#h35)">
<polygon points="544.9,363.2 552.9,356.2 563.0,355.8 561.1,357.5 557.9,360.8 554.9,364.2 552.3,367.7 550.9,369.6" fill="#8f8e8a"/>
<polygon points="544.9,363.2 552.9,356.2 554.2,364.2 546.3,371.2" fill="#6a6864"/>
<polygon points="552.9,356.2 563.0,355.8 564.3,363.8 554.2,364.2" fill="#8f8e8a"/>
<polygon points="546.3,371.2 554.2,364.2 564.3,363.8 562.4,365.5 559.2,368.9 556.2,372.2 553.6,375.7 552.2,377.7" fill="#b4b4b0" stroke="#141414" stroke-width="0.80"/>
<line x1="544.9" y1="363.2" x2="546.3" y2="371.2" stroke="#141414" stroke-width="0.80"/>
<line x1="552.9" y1="356.2" x2="554.2" y2="364.2" stroke="#141414" stroke-width="0.80"/>
<line x1="563.0" y1="355.8" x2="564.3" y2="363.8" stroke="#141414" stroke-width="0.80"/>
<line x1="561.1" y1="357.5" x2="562.4" y2="365.5" stroke="#141414" stroke-width="0.80"/>
<line x1="557.9" y1="360.8" x2="559.2" y2="368.9" stroke="#141414" stroke-width="0.80"/>
<line x1="554.9" y1="364.2" x2="556.2" y2="372.2" stroke="#141414" stroke-width="0.80"/>
<line x1="552.3" y1="367.7" x2="553.6" y2="375.7" stroke="#141414" stroke-width="0.80"/>
<line x1="550.9" y1="369.6" x2="552.2" y2="377.7" stroke="#141414" stroke-width="0.80"/>
</g>
<polygon points="544.9,363.2 552.9,356.2 563.0,355.8 561.1,357.5 557.9,360.8 554.9,364.2 552.3,367.7 550.9,369.6" fill="none" stroke="#141414" stroke-width="1.0" stroke-linejoin="round"/>
<clipPath id="h36"><polygon points="567.6,350.4 553.7,350.9 547.7,344.6 555.6,337.7 569.4,337.2 575.4,343.5"/></clipPath>
<g clip-path="url(#h36)">
<polygon points="567.6,350.4 553.7,350.9 547.7,344.6 555.6,337.7 569.4,337.2 575.4,343.5" fill="#8f8e8a"/>
<polygon points="547.7,344.6 555.6,337.7 556.9,345.7 549.0,352.5" fill="#6a6864"/>
<polygon points="555.6,337.7 569.4,337.2 570.6,345.2 556.9,345.7" fill="#8f8e8a"/>
<polygon points="569.4,337.2 575.4,343.5 576.6,351.5 570.6,345.2" fill="#7d7b77"/>
<polygon points="568.8,358.4 555.0,358.9 549.0,352.5 556.9,345.7 570.6,345.2 576.6,351.5" fill="#b4b4b0" stroke="#141414" stroke-width="0.80"/>
<line x1="567.6" y1="350.4" x2="568.8" y2="358.4" stroke="#141414" stroke-width="0.80"/>
<line x1="553.7" y1="350.9" x2="555.0" y2="358.9" stroke="#141414" stroke-width="0.80"/>
<line x1="547.7" y1="344.6" x2="549.0" y2="352.5" stroke="#141414" stroke-width="0.80"/>
<line x1="555.6" y1="337.7" x2="556.9" y2="345.7" stroke="#141414" stroke-width="0.80"/>
<line x1="569.4" y1="337.2" x2="570.6" y2="345.2" stroke="#141414" stroke-width="0.80"/>
<line x1="575.4" y1="343.5" x2="576.6" y2="351.5" stroke="#141414" stroke-width="0.80"/>
</g>
<polygon points="567.6,350.4 553.7,350.9 547.7,344.6 555.6,337.7 569.4,337.2 575.4,343.5" fill="none" stroke="#141414" stroke-width="1.0" stroke-linejoin="round"/>
<clipPath id="h37"><polygon points="571.8,319.2 577.7,325.3 570.1,332.1 556.3,332.6 556.3,332.6 571.7,319.2"/></clipPath>
<g clip-path="url(#h37)">
<polygon points="571.8,319.2 577.7,325.3 570.1,332.1 556.3,332.6 556.3,332.6 571.7,319.2" fill="#8f8e8a"/>
<polygon points="571.8,319.2 577.7,325.3 578.9,333.3 573.0,327.1" fill="#7d7b77"/>
<polygon points="556.3,332.6 571.7,319.2 572.9,327.1 557.6,340.5" fill="#6a6864"/>
<polygon points="573.0,327.1 578.9,333.3 571.3,340.0 557.6,340.6 557.6,340.5 572.9,327.1" fill="#b4b4b0" stroke="#141414" stroke-width="0.80"/>
<line x1="571.8" y1="319.2" x2="573.0" y2="327.1" stroke="#141414" stroke-width="0.80"/>
<line x1="577.7" y1="325.3" x2="578.9" y2="333.3" stroke="#141414" stroke-width="0.80"/>
<line x1="570.1" y1="332.1" x2="571.3" y2="340.0" stroke="#141414" stroke-width="0.80"/>
<line x1="556.3" y1="332.6" x2="557.6" y2="340.6" stroke="#141414" stroke-width="0.80"/>
<line x1="556.3" y1="332.6" x2="557.6" y2="340.5" stroke="#141414" stroke-width="0.80"/>
<line x1="571.7" y1="319.2" x2="572.9" y2="327.1" stroke="#141414" stroke-width="0.80"/>
</g>
<polygon points="571.8,319.2 577.7,325.3 570.1,332.1 556.3,332.6 556.3,332.6 571.7,319.2" fill="none" stroke="#141414" stroke-width="1.0" stroke-linejoin="round"/>
<clipPath id="h38"><polygon points="583.8,340.6 577.8,334.3 585.5,327.6 599.1,327.0 603.1,331.1 600.3,332.2 595.2,334.6 590.2,337.0 585.4,339.6 583.8,340.6"/></clipPath>
<g clip-path="url(#h38)">
<polygon points="583.8,340.6 577.8,334.3 585.5,327.6 599.1,327.0 603.1,331.1 600.3,332.2 595.2,334.6 590.2,337.0 585.4,339.6 583.8,340.6" fill="#8f8e8a"/>
<polygon points="577.8,334.3 585.5,327.6 586.6,335.5 579.0,342.3" fill="#6a6864"/>
<polygon points="585.5,327.6 599.1,327.0 600.3,335.0 586.6,335.5" fill="#8f8e8a"/>
<polygon points="599.1,327.0 603.1,331.1 604.2,339.0 600.3,335.0" fill="#7d7b77"/>
<polygon points="585.0,348.6 579.0,342.3 586.6,335.5 600.3,335.0 604.2,339.0 601.4,340.2 596.3,342.5 591.4,345.0 586.6,347.6 585.0,348.6" fill="#b4b4b0" stroke="#141414" stroke-width="0.80"/>
</g>
<polygon points="583.8,340.6 577.8,334.3 585.5,327.6 599.1,327.0 603.1,331.1 600.3,332.2 595.2,334.6 590.2,337.0 585.4,339.6 583.8,340.6" fill="none" stroke="#141414" stroke-width="1.0" stroke-linejoin="round"/>
<clipPath id="h39"><polygon points="599.7,322.0 586.1,322.5 580.1,316.4 587.7,309.8 601.2,309.3 607.2,315.4"/></clipPath>
<g clip-path="url(#h39)">
<polygon points="599.7,322.0 586.1,322.5 580.1,316.4 587.7,309.8 601.2,309.3 607.2,315.4" fill="#8f8e8a"/>
<polygon points="580.1,316.4 587.7,309.8 588.9,317.7 581.3,324.3" fill="#6a6864"/>
<polygon points="587.7,309.8 601.2,309.3 602.3,317.2 588.9,317.7" fill="#8f8e8a"/>
<polygon points="601.2,309.3 607.2,315.4 608.3,323.3 602.3,317.2" fill="#7d7b77"/>
<polygon points="600.8,329.9 587.3,330.4 581.3,324.3 588.9,317.7 602.3,317.2 608.3,323.3" fill="#b4b4b0" stroke="#141414" stroke-width="0.80"/>
<line x1="599.7" y1="322.0" x2="600.8" y2="329.9" stroke="#141414" stroke-width="0.80"/>
<line x1="586.1" y1="322.5" x2="587.3" y2="330.4" stroke="#141414" stroke-width="0.80"/>
<line x1="580.1" y1="316.4" x2="581.3" y2="324.3" stroke="#141414" stroke-width="0.80"/>
<line x1="587.7" y1="309.8" x2="588.9" y2="317.7" stroke="#141414" stroke-width="0.80"/>
<line x1="601.2" y1="309.3" x2="602.3" y2="317.2" stroke="#141414" stroke-width="0.80"/>
<line x1="607.2" y1="315.4" x2="608.3" y2="323.3" stroke="#141414" stroke-width="0.80"/>
</g>
<polygon points="599.7,322.0 586.1,322.5 580.1,316.4 587.7,309.8 601.2,309.3 607.2,315.4" fill="none" stroke="#141414" stroke-width="1.0" stroke-linejoin="round"/>
<clipPath id="h40"><polygon points="607.4,324.2 614.9,317.6 628.5,317.0 632.8,321.4 628.0,322.6 622.2,324.2 616.6,326.0 611.1,327.9"/></clipPath>
<g clip-path="url(#h40)">
<polygon points="607.4,324.2 614.9,317.6 628.5,317.0 632.8,321.4 628.0,322.6 622.2,324.2 616.6,326.0 611.1,327.9" fill="#8f8e8a"/>
<polygon points="607.4,324.2 614.9,317.6 616.0,325.5 608.5,332.1" fill="#6a6864"/>
<polygon points="614.9,317.6 628.5,317.0 629.5,324.9 616.0,325.5" fill="#8f8e8a"/>
<polygon points="628.5,317.0 632.8,321.4 633.9,329.3 629.5,324.9" fill="#7d7b77"/>
<polygon points="608.5,332.1 616.0,325.5 629.5,324.9 633.9,329.3 629.1,330.5 623.3,332.2 617.6,333.9 612.2,335.8" fill="#b4b4b0" stroke="#141414" stroke-width="0.80"/>
<line x1="607.4" y1="324.2" x2="608.5" y2="332.1" stroke="#141414" stroke-width="0.80"/>
<line x1="614.9" y1="317.6" x2="616.0" y2="325.5" stroke="#141414" stroke-width="0.80"/>
<line x1="628.5" y1="317.0" x2="629.5" y2="324.9" stroke="#141414" stroke-width="0.80"/>
<line x1="632.8" y1="321.4" x2="633.9" y2="329.3" stroke="#141414" stroke-width="0.80"/>
<line x1="628.0" y1="322.6" x2="629.1" y2="330.5" stroke="#141414" stroke-width="0.80"/>
<line x1="622.2" y1="324.2" x2="623.3" y2="332.2" stroke="#141414" stroke-width="0.80"/>
<line x1="616.6" y1="326.0" x2="617.6" y2="333.9" stroke="#141414" stroke-width="0.80"/>
<line x1="611.1" y1="327.9" x2="612.2" y2="335.8" stroke="#141414" stroke-width="0.80"/>
</g>
<polygon points="607.4,324.2 614.9,317.6 628.5,317.0 632.8,321.4 628.0,322.6 622.2,324.2 616.6,326.0 611.1,327.9" fill="none" stroke="#141414" stroke-width="1.0" stroke-linejoin="round"/>
<clipPath id="h41"><polygon points="807.1,381.2 813.9,374.1 822.7,373.7 811.6,385.4"/></clipPath>
<g clip-path="url(#h41)">
<polygon points="807.1,381.2 813.9,374.1 822.7,373.7 811.6,385.4" fill="#8f8e8a"/>
<polygon points="807.1,381.2 813.9,374.1 814.5,382.1 807.6,389.3" fill="#6a6864"/>
<polygon points="813.9,374.1 822.7,373.7 823.2,381.8 814.5,382.1" fill="#8f8e8a"/>
<polygon points="807.6,389.3 814.5,382.1 823.2,381.8 812.2,393.5" fill="#b4b4b0" stroke="#141414" stroke-width="0.80"/>
<line x1="807.1" y1="381.2" x2="807.6" y2="389.3" stroke="#141414" stroke-width="0.80"/>
<line x1="813.9" y1="374.1" x2="814.5" y2="382.1" stroke="#141414" stroke-width="0.80"/>
<line x1="822.7" y1="373.7" x2="823.2" y2="381.8" stroke="#141414" stroke-width="0.80"/>
<line x1="811.6" y1="385.4" x2="812.2" y2="393.5" stroke="#141414" stroke-width="0.80"/>
</g>
<polygon points="807.1,381.2 813.9,374.1 822.7,373.7 811.6,385.4" fill="none" stroke="#141414" stroke-width="1.0" stroke-linejoin="round"/>
<clipPath id="h42"><polygon points="603.2,292.0 609.2,297.9 601.7,304.4 588.3,304.9 588.3,304.9 603.1,292.0"/></clipPath>
<g clip-path="url(#h42)">
<polygon points="603.2,292.0 609.2,297.9 601.7,304.4 588.3,304.9 588.3,304.9 603.1,292.0" fill="#8f8e8a"/>
<polygon points="603.2,292.0 609.2,297.9 610.2,305.8 604.3,299.9" fill="#7d7b77"/>
<polygon points="588.3,304.9 603.1,292.0 604.2,299.9 589.4,312.7" fill="#6a6864"/>
<polygon points="604.3,299.9 610.2,305.8 602.9,312.3 589.5,312.8 589.4,312.7 604.2,299.9" fill="#b4b4b0" stroke="#141414" stroke-width="0.80"/>
<line x1="603.2" y1="292.0" x2="604.3" y2="299.9" stroke="#141414" stroke-width="0.80"/>
<line x1="609.2" y1="297.9" x2="610.2" y2="305.8" stroke="#141414" stroke-width="0.80"/>
<line x1="601.7" y1="304.4" x2="602.9" y2="312.3" stroke="#141414" stroke-width="0.80"/>
<line x1="588.3" y1="304.9" x2="589.5" y2="312.8" stroke="#141414" stroke-width="0.80"/>
<line x1="588.3" y1="304.9" x2="589.4" y2="312.7" stroke="#141414" stroke-width="0.80"/>
<line x1="603.1" y1="292.0" x2="604.2" y2="299.9" stroke="#141414" stroke-width="0.80"/>
</g>
<polygon points="603.2,292.0 609.2,297.9 601.7,304.4 588.3,304.9 588.3,304.9 603.1,292.0" fill="none" stroke="#141414" stroke-width="1.0" stroke-linejoin="round"/>
<clipPath id="h43"><polygon points="628.9,312.1 615.4,312.6 609.4,306.5 616.8,300.0 630.2,299.5 636.3,305.5"/></clipPath>
<g clip-path="url(#h43)">
<polygon points="628.9,312.1 615.4,312.6 609.4,306.5 616.8,300.0 630.2,299.5 636.3,305.5" fill="#8f8e8a"/>
<polygon points="609.4,306.5 616.8,300.0 617.8,307.9 610.5,314.4" fill="#6a6864"/>
<polygon points="616.8,300.0 630.2,299.5 631.2,307.4 617.8,307.9" fill="#8f8e8a"/>
<polygon points="630.2,299.5 636.3,305.5 637.3,313.4 631.2,307.4" fill="#7d7b77"/>
<polygon points="630.0,320.0 616.5,320.5 610.5,314.4 617.8,307.9 631.2,307.4 637.3,313.4" fill="#b4b4b0" stroke="#141414" stroke-width="0.80"/>
<line x1="628.9" y1="312.1" x2="630.0" y2="320.0" stroke="#141414" stroke-width="0.80"/>
<line x1="615.4" y1="312.6" x2="616.5" y2="320.5" stroke="#141414" stroke-width="0.80"/>
<line x1="609.4" y1="306.5" x2="610.5" y2="314.4" stroke="#141414" stroke-width="0.80"/>
<line x1="616.8" y1="300.0" x2="617.8" y2="307.9" stroke="#141414" stroke-width="0.80"/>
<line x1="630.2" y1="299.5" x2="631.2" y2="307.4" stroke="#141414" stroke-width="0.80"/>
<line x1="636.3" y1="305.5" x2="637.3" y2="313.4" stroke="#141414" stroke-width="0.80"/>
</g>
<polygon points="628.9,312.1 615.4,312.6 609.4,306.5 616.8,300.0 630.2,299.5 636.3,305.5" fill="none" stroke="#141414" stroke-width="1.0" stroke-linejoin="round"/>
<clipPath id="h44"><polygon points="636.7,314.2 644.0,307.7 657.4,307.2 663.7,313.2 660.1,316.5 658.1,316.7 651.9,317.6 645.9,318.6 641.9,319.4"/></clipPath>
<g clip-path="url(#h44)">
<polygon points="636.7,314.2 644.0,307.7 657.4,307.2 663.7,313.2 660.1,316.5 658.1,316.7 651.9,317.6 645.9,318.6 641.9,319.4" fill="#8f8e8a"/>
<polygon points="636.7,314.2 644.0,307.7 645.0,315.6 637.7,322.1" fill="#6a6864"/>
<polygon points="644.0,307.7 657.4,307.2 658.4,315.0 645.0,315.6" fill="#8f8e8a"/>
<polygon points="657.4,307.2 663.7,313.2 664.6,321.1 658.4,315.0" fill="#7d7b77"/>
<polygon points="637.7,322.1 645.0,315.6 658.4,315.0 664.6,321.1 661.0,324.4 659.0,324.6 652.9,325.5 646.9,326.5 642.9,327.3" fill="#b4b4b0" stroke="#141414" stroke-width="0.80"/>
</g>
<polygon points="636.7,314.2 644.0,307.7 657.4,307.2 663.7,313.2 660.1,316.5 658.1,316.7 651.9,317.6 645.9,318.6 641.9,319.4" fill="none" stroke="#141414" stroke-width="1.0" stroke-linejoin="round"/>
<clipPath id="h45"><polygon points="798.1,346.5 805.1,352.9 799.0,359.2 798.9,359.0 796.8,355.7 794.3,352.6 791.6,349.5 789.1,346.9"/></clipPath>
<g clip-path="url(#h45)">
<polygon points="798.1,346.5 805.1,352.9 799.0,359.2 798.9,359.0 796.8,355.7 794.3,352.6 791.6,349.5 789.1,346.9" fill="#8f8e8a"/>
<polygon points="798.1,346.5 805.1,352.9 805.7,360.9 798.7,354.5" fill="#7d7b77"/>
<polygon points="789.1,346.9 798.1,346.5 798.7,354.5 789.7,354.9" fill="#8f8e8a"/>
<polygon points="798.7,354.5 805.7,360.9 799.6,367.2 799.5,367.0 797.4,363.7 794.9,360.6 792.2,357.5 789.7,354.9" fill="#b4b4b0" stroke="#141414" stroke-width="0.80"/>
<line x1="798.1" y1="346.5" x2="798.7" y2="354.5" stroke="#141414" stroke-width="0.80"/>
<line x1="805.1" y1="352.9" x2="805.7" y2="360.9" stroke="#141414" stroke-width="0.80"/>
<line x1="799.0" y1="359.2" x2="799.6" y2="367.2" stroke="#141414" stroke-width="0.80"/>
<line x1="798.9" y1="359.0" x2="799.5" y2="367.0" stroke="#141414" stroke-width="0.80"/>
<line x1="796.8" y1="355.7" x2="797.4" y2="363.7" stroke="#141414" stroke-width="0.80"/>
<line x1="794.3" y1="352.6" x2="794.9" y2="360.6" stroke="#141414" stroke-width="0.80"/>
<line x1="791.6" y1="349.5" x2="792.2" y2="357.5" stroke="#141414" stroke-width="0.80"/>
<line x1="789.1" y1="346.9" x2="789.7" y2="354.9" stroke="#141414" stroke-width="0.80"/>
</g>
<polygon points="798.1,346.5 805.1,352.9 799.0,359.2 798.9,359.0 796.8,355.7 794.3,352.6 791.6,349.5 789.1,346.9" fill="none" stroke="#141414" stroke-width="1.0" stroke-linejoin="round"/>
<clipPath id="h46"><polygon points="827.7,368.1 813.8,368.7 806.6,362.2 813.3,355.2 827.2,354.6 834.4,361.1"/></clipPath>
<g clip-path="url(#h46)">
<polygon points="827.7,368.1 813.8,368.7 806.6,362.2 813.3,355.2 827.2,354.6 834.4,361.1" fill="#8f8e8a"/>
<polygon points="806.6,362.2 813.3,355.2 813.9,363.2 807.2,370.2" fill="#6a6864"/>
<polygon points="813.3,355.2 827.2,354.6 827.7,362.6 813.9,363.2" fill="#8f8e8a"/>
<polygon points="827.2,354.6 834.4,361.1 834.8,369.1 827.7,362.6" fill="#7d7b77"/>
<polygon points="828.2,376.2 814.3,376.7 807.2,370.2 813.9,363.2 827.7,362.6 834.8,369.1" fill="#b4b4b0" stroke="#141414" stroke-width="0.80"/>
<line x1="827.7" y1="368.1" x2="828.2" y2="376.2" stroke="#141414" stroke-width="0.80"/>
<line x1="813.8" y1="368.7" x2="814.3" y2="376.7" stroke="#141414" stroke-width="0.80"/>
<line x1="806.6" y1="362.2" x2="807.2" y2="370.2" stroke="#141414" stroke-width="0.80"/>
<line x1="813.3" y1="355.2" x2="813.9" y2="363.2" stroke="#141414" stroke-width="0.80"/>
<line x1="827.2" y1="354.6" x2="827.7" y2="362.6" stroke="#141414" stroke-width="0.80"/>
<line x1="834.4" y1="361.1" x2="834.8" y2="369.1" stroke="#141414" stroke-width="0.80"/>
</g>
<polygon points="827.7,368.1 813.8,368.7 806.6,362.2 813.3,355.2 827.2,354.6 834.4,361.1" fill="none" stroke="#141414" stroke-width="1.0" stroke-linejoin="round"/>
<clipPath id="h47"><polygon points="630.6,294.7 617.3,295.2 611.3,289.3 618.6,283.0 631.8,282.5 637.8,288.3"/></clipPath>
<g clip-path="url(#h47)">
<polygon points="630.6,294.7 617.3,295.2 611.3,289.3 618.6,283.0 631.8,282.5 637.8,288.3" fill="#8f8e8a"/>
<polygon points="611.3,289.3 618.6,283.0 619.6,290.8 612.4,297.1" fill="#6a6864"/>
<polygon points="618.6,283.0 631.8,282.5 632.8,290.3 619.6,290.8" fill="#8f8e8a"/>
<polygon points="631.8,282.5 637.8,288.3 638.8,296.1 632.8,290.3" fill="#7d7b77"/>
<polygon points="631.6,302.5 618.4,303.0 612.4,297.1 619.6,290.8 632.8,290.3 638.8,296.1" fill="#b4b4b0" stroke="#141414" stroke-width="0.80"/>
<line x1="630.6" y1="294.7" x2="631.6" y2="302.5" stroke="#141414" stroke-width="0.80"/>
<line x1="617.3" y1="295.2" x2="618.4" y2="303.0" stroke="#141414" stroke-width="0.80"/>
<line x1="611.3" y1="289.3" x2="612.4" y2="297.1" stroke="#141414" stroke-width="0.80"/>
<line x1="618.6" y1="283.0" x2="619.6" y2="290.8" stroke="#141414" stroke-width="0.80"/>
<line x1="631.8" y1="282.5" x2="632.8" y2="290.3" stroke="#141414" stroke-width="0.80"/>
<line x1="637.8" y1="288.3" x2="638.8" y2="296.1" stroke="#141414" stroke-width="0.80"/>
</g>
<polygon points="630.6,294.7 617.3,295.2 611.3,289.3 618.6,283.0 631.8,282.5 637.8,288.3" fill="none" stroke="#141414" stroke-width="1.0" stroke-linejoin="round"/>
<clipPath id="h48"><polygon points="657.8,302.3 644.4,302.8 638.3,296.8 645.5,290.4 658.7,289.9 664.9,295.8"/></clipPath>
<g clip-path="url(#h48)">
<polygon points="657.8,302.3 644.4,302.8 638.3,296.8 645.5,290.4 658.7,289.9 664.9,295.8" fill="#8f8e8a"/>
<polygon points="638.3,296.8 645.5,290.4 646.4,298.3 639.3,304.7" fill="#6a6864"/>
<polygon points="645.5,290.4 658.7,289.9 659.7,297.7 646.4,298.3" fill="#8f8e8a"/>
<polygon points="658.7,289.9 664.9,295.8 665.9,303.7 659.7,297.7" fill="#7d7b77"/>
<polygon points="658.7,310.1 645.4,310.6 639.3,304.7 646.4,298.3 659.7,297.7 665.9,303.7" fill="#b4b4b0" stroke="#141414" stroke-width="0.80"/>
<line x1="657.8" y1="302.3" x2="658.7" y2="310.1" stroke="#141414" stroke-width="0.80"/>
<line x1="644.4" y1="302.8" x2="645.4" y2="310.6" stroke="#141414" stroke-width="0.80"/>
<line x1="638.3" y1="296.8" x2="639.3" y2="304.7" stroke="#141414" stroke-width="0.80"/>
<line x1="645.5" y1="290.4" x2="646.4" y2="298.3" stroke="#141414" stroke-width="0.80"/>
<line x1="658.7" y1="289.9" x2="659.7" y2="297.7" stroke="#141414" stroke-width="0.80"/>
<line x1="664.9" y1="295.8" x2="665.9" y2="303.7" stroke="#141414" stroke-width="0.80"/>
</g>
<polygon points="657.8,302.3 644.4,302.8 638.3,296.8 645.5,290.4 658.7,289.9 664.9,295.8" fill="none" stroke="#141414" stroke-width="1.0" stroke-linejoin="round"/>
<clipPath id="h49"><polygon points="685.2,309.9 671.8,310.4 665.5,304.4 672.6,297.9 685.9,297.4 692.3,303.4"/></clipPath>
<g clip-path="url(#h49)">
<polygon points="685.2,309.9 671.8,310.4 665.5,304.4 672.6,297.9 685.9,297.4 692.3,303.4" fill="#8f8e8a"/>
<polygon points="665.5,304.4 672.6,297.9 673.5,305.8 666.4,312.3" fill="#6a6864"/>
<polygon points="672.6,297.9 685.9,297.4 686.8,305.3 673.5,305.8" fill="#8f8e8a"/>
<polygon points="685.9,297.4 692.3,303.4 693.1,311.3 686.8,305.3" fill="#7d7b77"/>
<polygon points="686.1,317.8 672.7,318.3 666.4,312.3 673.5,305.8 686.8,305.3 693.1,311.3" fill="#b4b4b0" stroke="#141414" stroke-width="0.80"/>
<line x1="685.2" y1="309.9" x2="686.1" y2="317.8" stroke="#141414" stroke-width="0.80"/>
<line x1="671.8" y1="310.4" x2="672.7" y2="318.3" stroke="#141414" stroke-width="0.80"/>
<line x1="665.5" y1="304.4" x2="666.4" y2="312.3" stroke="#141414" stroke-width="0.80"/>
<line x1="672.6" y1="297.9" x2="673.5" y2="305.8" stroke="#141414" stroke-width="0.80"/>
<line x1="685.9" y1="297.4" x2="686.8" y2="305.3" stroke="#141414" stroke-width="0.80"/>
<line x1="692.3" y1="303.4" x2="693.1" y2="311.3" stroke="#141414" stroke-width="0.80"/>
</g>
<polygon points="685.2,309.9 671.8,310.4 665.5,304.4 672.6,297.9 685.9,297.4 692.3,303.4" fill="none" stroke="#141414" stroke-width="1.0" stroke-linejoin="round"/>
<clipPath id="h50"><polygon points="693.0,312.1 700.1,305.5 713.5,305.0 719.9,311.0 714.2,316.4 713.0,316.3 707.1,315.7 701.1,315.2 696.1,315.0"/></clipPath>
<g clip-path="url(#h50)">
<polygon points="693.0,312.1 700.1,305.5 713.5,305.0 719.9,311.0 714.2,316.4 713.0,316.3 707.1,315.7 701.1,315.2 696.1,315.0" fill="#8f8e8a"/>
<polygon points="693.0,312.1 700.1,305.5 700.9,313.4 693.9,320.0" fill="#6a6864"/>
<polygon points="700.1,305.5 713.5,305.0 714.2,312.9 700.9,313.4" fill="#8f8e8a"/>
<polygon points="713.5,305.0 719.9,311.0 720.7,318.9 714.2,312.9" fill="#7d7b77"/>
<polygon points="693.9,320.0 700.9,313.4 714.2,312.9 720.7,318.9 715.0,324.4 713.8,324.2 707.9,323.6 701.9,323.1 697.0,322.9" fill="#b4b4b0" stroke="#141414" stroke-width="0.80"/>
</g>
<polygon points="693.0,312.1 700.1,305.5 713.5,305.0 719.9,311.0 714.2,316.4 713.0,316.3 707.1,315.7 701.1,315.2 696.1,315.0" fill="none" stroke="#141414" stroke-width="1.0" stroke-linejoin="round"/>
<clipPath id="h51"><polygon points="727.8,313.2 741.2,312.7 747.9,318.8 744.0,322.6 741.2,321.7 735.8,320.3 730.3,319.1 724.6,318.0 723.0,317.7"/></clipPath>
<g clip-path="url(#h51)">
<polygon points="727.8,313.2 741.2,312.7 747.9,318.8 744.0,322.6 741.2,321.7 735.8,320.3 730.3,319.1 724.6,318.0 723.0,317.7" fill="#8f8e8a"/>
<polygon points="727.8,313.2 741.2,312.7 742.0,320.6 728.5,321.1" fill="#8f8e8a"/>
<polygon points="741.2,312.7 747.9,318.8 748.6,326.7 742.0,320.6" fill="#7d7b77"/>
<polygon points="723.0,317.7 727.8,313.2 728.5,321.1 723.8,325.7" fill="#6a6864"/>
<polygon points="728.5,321.1 742.0,320.6 748.6,326.7 744.7,330.5 741.9,329.7 736.6,328.3 731.0,327.0 725.4,325.9 723.8,325.7" fill="#b4b4b0" stroke="#141414" stroke-width="0.80"/>
</g>
<polygon points="727.8,313.2 741.2,312.7 747.9,318.8 744.0,322.6 741.2,321.7 735.8,320.3 730.3,319.1 724.6,318.0 723.0,317.7" fill="none" stroke="#141414" stroke-width="1.0" stroke-linejoin="round"/>
<clipPath id="h52"><polygon points="755.8,321.0 769.3,320.5 776.1,326.6 769.7,333.0 765.8,331.0 761.3,328.9 756.5,326.9 751.7,325.0"/></clipPath>
<g clip-path="url(#h52)">
<polygon points="755.8,321.0 769.3,320.5 776.1,326.6 769.7,333.0 765.8,331.0 761.3,328.9 756.5,326.9 751.7,325.0" fill="#8f8e8a"/>
<polygon points="755.8,321.0 769.3,320.5 770.0,328.4 756.5,328.9" fill="#8f8e8a"/>
<polygon points="769.3,320.5 776.1,326.6 776.8,334.5 770.0,328.4" fill="#7d7b77"/>
<polygon points="751.7,325.0 755.8,321.0 756.5,328.9 752.4,333.0" fill="#6a6864"/>
<polygon points="756.5,328.9 770.0,328.4 776.8,334.5 770.3,341.0 766.5,338.9 761.9,336.8 757.2,334.8 752.4,333.0" fill="#b4b4b0" stroke="#141414" stroke-width="0.80"/>
<line x1="755.8" y1="321.0" x2="756.5" y2="328.9" stroke="#141414" stroke-width="0.80"/>
<line x1="769.3" y1="320.5" x2="770.0" y2="328.4" stroke="#141414" stroke-width="0.80"/>
<line x1="776.1" y1="326.6" x2="776.8" y2="334.5" stroke="#141414" stroke-width="0.80"/>
<line x1="769.7" y1="333.0" x2="770.3" y2="341.0" stroke="#141414" stroke-width="0.80"/>
<line x1="765.8" y1="331.0" x2="766.5" y2="338.9" stroke="#141414" stroke-width="0.80"/>
<line x1="761.3" y1="328.9" x2="761.9" y2="336.8" stroke="#141414" stroke-width="0.80"/>
<line x1="756.5" y1="326.9" x2="757.2" y2="334.8" stroke="#141414" stroke-width="0.80"/>
<line x1="751.7" y1="325.0" x2="752.4" y2="333.0" stroke="#141414" stroke-width="0.80"/>
</g>
<polygon points="755.8,321.0 769.3,320.5 776.1,326.6 769.7,333.0 765.8,331.0 761.3,328.9 756.5,326.9 751.7,325.0" fill="none" stroke="#141414" stroke-width="1.0" stroke-linejoin="round"/>
<clipPath id="h53"><polygon points="798.0,341.3 784.3,341.9 777.4,335.6 784.2,328.8 797.7,328.3 804.7,334.5"/></clipPath>
<g clip-path="url(#h53)">
<polygon points="798.0,341.3 784.3,341.9 777.4,335.6 784.2,328.8 797.7,328.3 804.7,334.5" fill="#8f8e8a"/>
<polygon points="777.4,335.6 784.2,328.8 784.8,336.8 778.0,343.5" fill="#6a6864"/>
<polygon points="784.2,328.8 797.7,328.3 798.3,336.2 784.8,336.8" fill="#8f8e8a"/>
<polygon points="797.7,328.3 804.7,334.5 805.2,342.5 798.3,336.2" fill="#7d7b77"/>
<polygon points="798.6,349.3 784.9,349.8 778.0,343.5 784.8,336.8 798.3,336.2 805.2,342.5" fill="#b4b4b0" stroke="#141414" stroke-width="0.80"/>
<line x1="798.0" y1="341.3" x2="798.6" y2="349.3" stroke="#141414" stroke-width="0.80"/>
<line x1="784.3" y1="341.9" x2="784.9" y2="349.8" stroke="#141414" stroke-width="0.80"/>
<line x1="777.4" y1="335.6" x2="778.0" y2="343.5" stroke="#141414" stroke-width="0.80"/>
<line x1="784.2" y1="328.8" x2="784.8" y2="336.8" stroke="#141414" stroke-width="0.80"/>
<line x1="797.7" y1="328.3" x2="798.3" y2="336.2" stroke="#141414" stroke-width="0.80"/>
<line x1="804.7" y1="334.5" x2="805.2" y2="342.5" stroke="#141414" stroke-width="0.80"/>
</g>
<polygon points="798.0,341.3 784.3,341.9 777.4,335.6 784.2,328.8 797.7,328.3 804.7,334.5" fill="none" stroke="#141414" stroke-width="1.0" stroke-linejoin="round"/>
<clipPath id="h54"><polygon points="827.0,349.4 813.2,349.9 806.1,343.6 812.8,336.8 826.4,336.2 833.5,342.5"/></clipPath>
<g clip-path="url(#h54)">
<polygon points="827.0,349.4 813.2,349.9 806.1,343.6 812.8,336.8 826.4,336.2 833.5,342.5" fill="#8f8e8a"/>
<polygon points="806.1,343.6 812.8,336.8 813.3,344.7 806.7,351.6" fill="#6a6864"/>
<polygon points="812.8,336.8 826.4,336.2 826.9,344.2 813.3,344.7" fill="#8f8e8a"/>
<polygon points="826.4,336.2 833.5,342.5 834.0,350.5 826.9,344.2" fill="#7d7b77"/>
<polygon points="827.4,357.4 813.7,357.9 806.7,351.6 813.3,344.7 826.9,344.2 834.0,350.5" fill="#b4b4b0" stroke="#141414" stroke-width="0.80"/>
<line x1="827.0" y1="349.4" x2="827.4" y2="357.4" stroke="#141414" stroke-width="0.80"/>
<line x1="813.2" y1="349.9" x2="813.7" y2="357.9" stroke="#141414" stroke-width="0.80"/>
<line x1="806.1" y1="343.6" x2="806.7" y2="351.6" stroke="#141414" stroke-width="0.80"/>
<line x1="812.8" y1="336.8" x2="813.3" y2="344.7" stroke="#141414" stroke-width="0.80"/>
<line x1="826.4" y1="336.2" x2="826.9" y2="344.2" stroke="#141414" stroke-width="0.80"/>
<line x1="833.5" y1="342.5" x2="834.0" y2="350.5" stroke="#141414" stroke-width="0.80"/>
</g>
<polygon points="827.0,349.4 813.2,349.9 806.1,343.6 812.8,336.8 826.4,336.2 833.5,342.5" fill="none" stroke="#141414" stroke-width="1.0" stroke-linejoin="round"/>
<clipPath id="h55"><polygon points="835.2,351.7 841.7,344.8 850.3,344.4 839.7,355.7"/></clipPath>
<g clip-path="url(#h55)">
<polygon points="835.2,351.7 841.7,344.8 850.3,344.4 839.7,355.7" fill="#8f8e8a"/>
<polygon points="835.2,351.7 841.7,344.8 842.2,352.8 835.7,359.7" fill="#6a6864"/>
<polygon points="841.7,344.8 850.3,344.4 850.7,352.4 842.2,352.8" fill="#8f8e8a"/>
<polygon points="835.7,359.7 842.2,352.8 850.7,352.4 840.1,363.7" fill="#b4b4b0" stroke="#141414" stroke-width="0.80"/>
<line x1="835.2" y1="351.7" x2="835.7" y2="359.7" stroke="#141414" stroke-width="0.80"/>
<line x1="841.7" y1="344.8" x2="842.2" y2="352.8" stroke="#141414" stroke-width="0.80"/>
<line x1="850.3" y1="344.4" x2="850.7" y2="352.4" stroke="#141414" stroke-width="0.80"/>
<line x1="839.7" y1="355.7" x2="840.1" y2="363.7" stroke="#141414" stroke-width="0.80"/>
</g>
<polygon points="835.2,351.7 841.7,344.8 850.3,344.4 839.7,355.7" fill="none" stroke="#141414" stroke-width="1.0" stroke-linejoin="round"/>
<clipPath id="h56"><polygon points="632.3,277.7 619.1,278.2 619.0,278.2 627.9,270.5 637.5,273.1"/></clipPath>
<g clip-path="url(#h56)">
<polygon points="632.3,277.7 619.1,278.2 619.0,278.2 627.9,270.5 637.5,273.1" fill="#8f8e8a"/>
<polygon points="619.0,278.2 627.9,270.5 628.9,278.3 620.1,286.0" fill="#6a6864"/>
<polygon points="627.9,270.5 637.5,273.1 638.5,280.9 628.9,278.3" fill="#8f8e8a"/>
<polygon points="633.3,285.5 620.1,286.0 620.1,286.0 628.9,278.3 638.5,280.9" fill="#b4b4b0" stroke="#141414" stroke-width="0.80"/>
<line x1="632.3" y1="277.7" x2="633.3" y2="285.5" stroke="#141414" stroke-width="0.80"/>
<line x1="619.1" y1="278.2" x2="620.1" y2="286.0" stroke="#141414" stroke-width="0.80"/>
<line x1="619.0" y1="278.2" x2="620.1" y2="286.0" stroke="#141414" stroke-width="0.80"/>
<line x1="627.9" y1="270.5" x2="628.9" y2="278.3" stroke="#141414" stroke-width="0.80"/>
<line x1="637.5" y1="273.1" x2="638.5" y2="280.9" stroke="#141414" stroke-width="0.80"/>
</g>
<polygon points="632.3,277.7 619.1,278.2 619.0,278.2 627.9,270.5 637.5,273.1" fill="none" stroke="#141414" stroke-width="1.0" stroke-linejoin="round"/>
<clipPath id="h57"><polygon points="659.1,285.1 645.9,285.6 639.8,279.8 645.0,275.2 664.3,280.5"/></clipPath>
<g clip-path="url(#h57)">
<polygon points="659.1,285.1 645.9,285.6 639.8,279.8 645.0,275.2 664.3,280.5" fill="#8f8e8a"/>
<polygon points="639.8,279.8 645.0,275.2 646.0,283.0 640.8,287.6" fill="#6a6864"/>
<polygon points="645.0,275.2 664.3,280.5 665.2,288.3 646.0,283.0" fill="#8f8e8a"/>
<polygon points="660.0,292.9 646.8,293.4 640.8,287.6 646.0,283.0 665.2,288.3" fill="#b4b4b0" stroke="#141414" stroke-width="0.80"/>
<line x1="659.1" y1="285.1" x2="660.0" y2="292.9" stroke="#141414" stroke-width="0.80"/>
<line x1="645.9" y1="285.6" x2="646.8" y2="293.4" stroke="#141414" stroke-width="0.80"/>
<line x1="639.8" y1="279.8" x2="640.8" y2="287.6" stroke="#141414" stroke-width="0.80"/>
<line x1="645.0" y1="275.2" x2="646.0" y2="283.0" stroke="#141414" stroke-width="0.80"/>
<line x1="664.3" y1="280.5" x2="665.2" y2="288.3" stroke="#141414" stroke-width="0.80"/>
</g>
<polygon points="659.1,285.1 645.9,285.6 639.8,279.8 645.0,275.2 664.3,280.5" fill="none" stroke="#141414" stroke-width="1.0" stroke-linejoin="round"/>
<clipPath id="h58"><polygon points="686.2,292.6 672.9,293.1 666.7,287.2 671.9,282.6 691.4,287.9"/></clipPath>
<g clip-path="url(#h58)">
<polygon points="686.2,292.6 672.9,293.1 666.7,287.2 671.9,282.6 691.4,287.9" fill="#8f8e8a"/>
<polygon points="666.7,287.2 671.9,282.6 672.8,290.4 667.6,295.0" fill="#6a6864"/>
<polygon points="671.9,282.6 691.4,287.9 692.2,295.7 672.8,290.4" fill="#8f8e8a"/>
<polygon points="687.1,300.4 673.8,300.9 667.6,295.0 672.8,290.4 692.2,295.7" fill="#b4b4b0" stroke="#141414" stroke-width="0.80"/>
<line x1="686.2" y1="292.6" x2="687.1" y2="300.4" stroke="#141414" stroke-width="0.80"/>
<line x1="672.9" y1="293.1" x2="673.8" y2="300.9" stroke="#141414" stroke-width="0.80"/>
<line x1="666.7" y1="287.2" x2="667.6" y2="295.0" stroke="#141414" stroke-width="0.80"/>
<line x1="671.9" y1="282.6" x2="672.8" y2="290.4" stroke="#141414" stroke-width="0.80"/>
<line x1="691.4" y1="287.9" x2="692.2" y2="295.7" stroke="#141414" stroke-width="0.80"/>
</g>
<polygon points="686.2,292.6 672.9,293.1 666.7,287.2 671.9,282.6 691.4,287.9" fill="none" stroke="#141414" stroke-width="1.0" stroke-linejoin="round"/>
<clipPath id="h59"><polygon points="713.6,300.1 700.3,300.6 693.9,294.7 699.0,290.0 718.7,295.4"/></clipPath>
<g clip-path="url(#h59)">
<polygon points="713.6,300.1 700.3,300.6 693.9,294.7 699.0,290.0 718.7,295.4" fill="#8f8e8a"/>
<polygon points="693.9,294.7 699.0,290.0 699.9,297.8 694.8,302.6" fill="#6a6864"/>
<polygon points="699.0,290.0 718.7,295.4 719.5,303.2 699.9,297.8" fill="#8f8e8a"/>
<polygon points="714.4,308.0 701.1,308.5 694.8,302.6 699.9,297.8 719.5,303.2" fill="#b4b4b0" stroke="#141414" stroke-width="0.80"/>
<line x1="713.6" y1="300.1" x2="714.4" y2="308.0" stroke="#141414" stroke-width="0.80"/>
<line x1="700.3" y1="300.6" x2="701.1" y2="308.5" stroke="#141414" stroke-width="0.80"/>
<line x1="693.9" y1="294.7" x2="694.8" y2="302.6" stroke="#141414" stroke-width="0.80"/>
<line x1="699.0" y1="290.0" x2="699.9" y2="297.8" stroke="#141414" stroke-width="0.80"/>
<line x1="718.7" y1="295.4" x2="719.5" y2="303.2" stroke="#141414" stroke-width="0.80"/>
</g>
<polygon points="713.6,300.1 700.3,300.6 693.9,294.7 699.0,290.0 718.7,295.4" fill="none" stroke="#141414" stroke-width="1.0" stroke-linejoin="round"/>
<clipPath id="h60"><polygon points="741.3,307.8 727.9,308.3 721.4,302.3 726.5,297.5 746.3,303.0"/></clipPath>
<g clip-path="url(#h60)">
<polygon points="741.3,307.8 727.9,308.3 721.4,302.3 726.5,297.5 746.3,303.0" fill="#8f8e8a"/>
<polygon points="721.4,302.3 726.5,297.5 727.2,305.4 722.2,310.1" fill="#6a6864"/>
<polygon points="726.5,297.5 746.3,303.0 747.0,310.8 727.2,305.4" fill="#8f8e8a"/>
<polygon points="742.1,315.6 728.7,316.2 722.2,310.1 727.2,305.4 747.0,310.8" fill="#b4b4b0" stroke="#141414" stroke-width="0.80"/>
<line x1="741.3" y1="307.8" x2="742.1" y2="315.6" stroke="#141414" stroke-width="0.80"/>
<line x1="727.9" y1="308.3" x2="728.7" y2="316.2" stroke="#141414" stroke-width="0.80"/>
<line x1="721.4" y1="302.3" x2="722.2" y2="310.1" stroke="#141414" stroke-width="0.80"/>
<line x1="726.5" y1="297.5" x2="727.2" y2="305.4" stroke="#141414" stroke-width="0.80"/>
<line x1="746.3" y1="303.0" x2="747.0" y2="310.8" stroke="#141414" stroke-width="0.80"/>
</g>
<polygon points="741.3,307.8 727.9,308.3 721.4,302.3 726.5,297.5 746.3,303.0" fill="none" stroke="#141414" stroke-width="1.0" stroke-linejoin="round"/>
<clipPath id="h61"><polygon points="769.3,315.5 755.9,316.0 749.2,309.9 754.2,305.1 774.3,310.6"/></clipPath>
<g clip-path="url(#h61)">
<polygon points="769.3,315.5 755.9,316.0 749.2,309.9 754.2,305.1 774.3,310.6" fill="#8f8e8a"/>
<polygon points="749.2,309.9 754.2,305.1 754.9,313.0 749.9,317.8" fill="#6a6864"/>
<polygon points="754.2,305.1 774.3,310.6 774.9,318.5 754.9,313.0" fill="#8f8e8a"/>
<polygon points="770.0,323.4 756.5,323.9 749.9,317.8 754.9,313.0 774.9,318.5" fill="#b4b4b0" stroke="#141414" stroke-width="0.80"/>
<line x1="769.3" y1="315.5" x2="770.0" y2="323.4" stroke="#141414" stroke-width="0.80"/>
<line x1="755.9" y1="316.0" x2="756.5" y2="323.9" stroke="#141414" stroke-width="0.80"/>
<line x1="749.2" y1="309.9" x2="749.9" y2="317.8" stroke="#141414" stroke-width="0.80"/>
<line x1="754.2" y1="305.1" x2="754.9" y2="313.0" stroke="#141414" stroke-width="0.80"/>
<line x1="774.3" y1="310.6" x2="774.9" y2="318.5" stroke="#141414" stroke-width="0.80"/>
</g>
<polygon points="769.3,315.5 755.9,316.0 749.2,309.9 754.2,305.1 774.3,310.6" fill="none" stroke="#141414" stroke-width="1.0" stroke-linejoin="round"/>
<clipPath id="h62"><polygon points="797.6,323.2 784.1,323.8 777.3,317.6 782.2,312.8 802.5,318.4"/></clipPath>
<g clip-path="url(#h62)">
<polygon points="797.6,323.2 784.1,323.8 777.3,317.6 782.2,312.8 802.5,318.4" fill="#8f8e8a"/>
<polygon points="777.3,317.6 782.2,312.8 782.8,320.7 777.9,325.6" fill="#6a6864"/>
<polygon points="782.2,312.8 802.5,318.4 803.1,326.3 782.8,320.7" fill="#8f8e8a"/>
<polygon points="798.2,331.2 784.7,331.7 777.9,325.6 782.8,320.7 803.1,326.3" fill="#b4b4b0" stroke="#141414" stroke-width="0.80"/>
<line x1="797.6" y1="323.2" x2="798.2" y2="331.2" stroke="#141414" stroke-width="0.80"/>
<line x1="784.1" y1="323.8" x2="784.7" y2="331.7" stroke="#141414" stroke-width="0.80"/>
<line x1="777.3" y1="317.6" x2="777.9" y2="325.6" stroke="#141414" stroke-width="0.80"/>
<line x1="782.2" y1="312.8" x2="782.8" y2="320.7" stroke="#141414" stroke-width="0.80"/>
<line x1="802.5" y1="318.4" x2="803.1" y2="326.3" stroke="#141414" stroke-width="0.80"/>
</g>
<polygon points="797.6,323.2 784.1,323.8 777.3,317.6 782.2,312.8 802.5,318.4" fill="none" stroke="#141414" stroke-width="1.0" stroke-linejoin="round"/>
<clipPath id="h63"><polygon points="826.2,331.1 812.6,331.7 805.7,325.5 810.5,320.6 831.0,326.2"/></clipPath>
<g clip-path="url(#h63)">
<polygon points="826.2,331.1 812.6,331.7 805.7,325.5 810.5,320.6 831.0,326.2" fill="#8f8e8a"/>
<polygon points="805.7,325.5 810.5,320.6 811.0,328.5 806.2,333.4" fill="#6a6864"/>
<polygon points="810.5,320.6 831.0,326.2 831.5,334.1 811.0,328.5" fill="#8f8e8a"/>
<polygon points="826.7,339.1 813.2,339.6 806.2,333.4 811.0,328.5 831.5,334.1" fill="#b4b4b0" stroke="#141414" stroke-width="0.80"/>
<line x1="826.2" y1="331.1" x2="826.7" y2="339.1" stroke="#141414" stroke-width="0.80"/>
<line x1="812.6" y1="331.7" x2="813.2" y2="339.6" stroke="#141414" stroke-width="0.80"/>
<line x1="805.7" y1="325.5" x2="806.2" y2="333.4" stroke="#141414" stroke-width="0.80"/>
<line x1="810.5" y1="320.6" x2="811.0" y2="328.5" stroke="#141414" stroke-width="0.80"/>
<line x1="831.0" y1="326.2" x2="831.5" y2="334.1" stroke="#141414" stroke-width="0.80"/>
</g>
<polygon points="826.2,331.1 812.6,331.7 805.7,325.5 810.5,320.6 831.0,326.2" fill="none" stroke="#141414" stroke-width="1.0" stroke-linejoin="round"/>
<clipPath id="h64"><polygon points="855.2,339.1 841.5,339.6 834.4,333.4 839.1,328.4 859.9,334.1"/></clipPath>
<g clip-path="url(#h64)">
<polygon points="855.2,339.1 841.5,339.6 834.4,333.4 839.1,328.4 859.9,334.1" fill="#8f8e8a"/>
<polygon points="834.4,333.4 839.1,328.4 839.6,336.3 834.8,341.3" fill="#6a6864"/>
<polygon points="839.1,328.4 859.9,334.1 860.3,342.0 839.6,336.3" fill="#8f8e8a"/>
<polygon points="855.6,347.0 841.9,347.6 834.8,341.3 839.6,336.3 860.3,342.0" fill="#b4b4b0" stroke="#141414" stroke-width="0.80"/>
<line x1="855.2" y1="339.1" x2="855.6" y2="347.0" stroke="#141414" stroke-width="0.80"/>
<line x1="841.5" y1="339.6" x2="841.9" y2="347.6" stroke="#141414" stroke-width="0.80"/>
<line x1="834.4" y1="333.4" x2="834.8" y2="341.3" stroke="#141414" stroke-width="0.80"/>
<line x1="839.1" y1="328.4" x2="839.6" y2="336.3" stroke="#141414" stroke-width="0.80"/>
<line x1="859.9" y1="334.1" x2="860.3" y2="342.0" stroke="#141414" stroke-width="0.80"/>
</g>
<polygon points="855.2,339.1 841.5,339.6 834.4,333.4 839.1,328.4 859.9,334.1" fill="none" stroke="#141414" stroke-width="1.0" stroke-linejoin="round"/>
<clipPath id="h65"><polygon points="887.5,534.3 880.4,543.1 864.8,543.8 879.2,526.3"/></clipPath>
<g clip-path="url(#h65)">
<polygon points="887.5,534.3 880.4,543.1 864.8,543.8 879.2,526.3" fill="#8f8e8a"/>
<polygon points="864.8,543.8 879.2,526.3 879.6,534.6 865.2,552.2" fill="#6a6864"/>
<polygon points="879.2,526.3 887.5,534.3 887.9,542.7 879.6,534.6" fill="#7d7b77"/>
<polygon points="887.9,542.7 880.7,551.5 865.2,552.2 879.6,534.6" fill="#202020" stroke="#141414" stroke-width="0.80"/>
<line x1="887.5" y1="534.3" x2="887.9" y2="542.7" stroke="#141414" stroke-width="0.80"/>
<line x1="880.4" y1="543.1" x2="880.7" y2="551.5" stroke="#141414" stroke-width="0.80"/>
<line x1="864.8" y1="543.8" x2="865.2" y2="552.2" stroke="#141414" stroke-width="0.80"/>
<line x1="879.2" y1="526.3" x2="879.6" y2="534.6" stroke="#141414" stroke-width="0.80"/>
</g>
<polygon points="887.5,534.3 880.4,543.1 864.8,543.8 879.2,526.3" fill="none" stroke="#141414" stroke-width="1.0" stroke-linejoin="round"/>
<clipPath id="h66"><polygon points="913.8,553.5 898.2,554.2 889.7,546.0 896.9,537.2 912.4,536.5 920.9,544.6"/></clipPath>
<g clip-path="url(#h66)">
<polygon points="913.8,553.5 898.2,554.2 889.7,546.0 896.9,537.2 912.4,536.5 920.9,544.6" fill="#8f8e8a"/>
<polygon points="889.7,546.0 896.9,537.2 897.2,545.6 890.1,554.4" fill="#6a6864"/>
<polygon points="896.9,537.2 912.4,536.5 912.6,544.9 897.2,545.6" fill="#8f8e8a"/>
<polygon points="912.4,536.5 920.9,544.6 921.1,553.0 912.6,544.9" fill="#7d7b77"/>
<polygon points="914.1,561.9 898.5,562.6 890.1,554.4 897.2,545.6 912.6,544.9 921.1,553.0" fill="#202020" stroke="#141414" stroke-width="0.80"/>
<line x1="913.8" y1="553.5" x2="914.1" y2="561.9" stroke="#141414" stroke-width="0.80"/>
<line x1="898.2" y1="554.2" x2="898.5" y2="562.6" stroke="#141414" stroke-width="0.80"/>
<line x1="889.7" y1="546.0" x2="890.1" y2="554.4" stroke="#141414" stroke-width="0.80"/>
<line x1="896.9" y1="537.2" x2="897.2" y2="545.6" stroke="#141414" stroke-width="0.80"/>
<line x1="912.4" y1="536.5" x2="912.6" y2="544.9" stroke="#141414" stroke-width="0.80"/>
<line x1="920.9" y1="544.6" x2="921.1" y2="553.0" stroke="#141414" stroke-width="0.80"/>
</g>
<polygon points="913.8,553.5 898.2,554.2 889.7,546.0 896.9,537.2 912.4,536.5 920.9,544.6" fill="none" stroke="#141414" stroke-width="1.0" stroke-linejoin="round"/>
<clipPath id="h67"><polygon points="947.7,564.1 932.0,564.8 923.3,556.5 930.3,547.5 945.9,546.8 954.6,555.1"/></clipPath>
<g clip-path="url(#h67)">
<polygon points="947.7,564.1 932.0,564.8 923.3,556.5 930.3,547.5 945.9,546.8 954.6,555.1" fill="#8f8e8a"/>
<polygon points="923.3,556.5 930.3,547.5 930.5,555.9 923.6,564.9" fill="#6a6864"/>
<polygon points="930.3,547.5 945.9,546.8 946.0,555.2 930.5,555.9" fill="#8f8e8a"/>
<polygon points="945.9,546.8 954.6,555.1 954.7,563.5 946.0,555.2" fill="#7d7b77"/>
<polygon points="947.9,572.5 932.2,573.2 923.6,564.9 930.5,555.9 946.0,555.2 954.7,563.5" fill="#202020" stroke="#141414" stroke-width="0.80"/>
<line x1="947.7" y1="564.1" x2="947.9" y2="572.5" stroke="#141414" stroke-width="0.80"/>
<line x1="932.0" y1="564.8" x2="932.2" y2="573.2" stroke="#141414" stroke-width="0.80"/>
<line x1="923.3" y1="556.5" x2="923.6" y2="564.9" stroke="#141414" stroke-width="0.80"/>
<line x1="930.3" y1="547.5" x2="930.5" y2="555.9" stroke="#141414" stroke-width="0.80"/>
<line x1="945.9" y1="546.8" x2="946.0" y2="555.2" stroke="#141414" stroke-width="0.80"/>
<line x1="954.6" y1="555.1" x2="954.7" y2="563.5" stroke="#141414" stroke-width="0.80"/>
</g>
<polygon points="947.7,564.1 932.0,564.8 923.3,556.5 930.3,547.5 945.9,546.8 954.6,555.1" fill="none" stroke="#141414" stroke-width="1.0" stroke-linejoin="round"/>
<clipPath id="h68"><polygon points="982.0,574.8 966.2,575.5 957.3,567.1 964.2,558.0 979.8,557.3 988.8,565.6"/></clipPath>
<g clip-path="url(#h68)">
<polygon points="982.0,574.8 966.2,575.5 957.3,567.1 964.2,558.0 979.8,557.3 988.8,565.6" fill="#8f8e8a"/>
<polygon points="957.3,567.1 964.2,558.0 964.3,566.4 957.5,575.5" fill="#6a6864"/>
<polygon points="964.2,558.0 979.8,557.3 979.9,565.7 964.3,566.4" fill="#8f8e8a"/>
<polygon points="979.8,557.3 988.8,565.6 988.8,574.1 979.9,565.7" fill="#7d7b77"/>
<polygon points="982.1,583.2 966.3,583.9 957.5,575.5 964.3,566.4 979.9,565.7 988.8,574.1" fill="#202020" stroke="#141414" stroke-width="0.80"/>
<line x1="982.0" y1="574.8" x2="982.1" y2="583.2" stroke="#141414" stroke-width="0.80"/>
<line x1="966.2" y1="575.5" x2="966.3" y2="583.9" stroke="#141414" stroke-width="0.80"/>
<line x1="957.3" y1="567.1" x2="957.5" y2="575.5" stroke="#141414" stroke-width="0.80"/>
<line x1="964.2" y1="558.0" x2="964.3" y2="566.4" stroke="#141414" stroke-width="0.80"/>
<line x1="979.8" y1="557.3" x2="979.9" y2="565.7" stroke="#141414" stroke-width="0.80"/>
<line x1="988.8" y1="565.6" x2="988.8" y2="574.1" stroke="#141414" stroke-width="0.80"/>
</g>
<polygon points="982.0,574.8 966.2,575.5 957.3,567.1 964.2,558.0 979.8,557.3 988.8,565.6" fill="none" stroke="#141414" stroke-width="1.0" stroke-linejoin="round"/>
<clipPath id="h69"><polygon points="912.2,530.0 896.8,530.7 888.5,522.7 895.5,514.1 910.8,513.5 919.2,521.4"/></clipPath>
<g clip-path="url(#h69)">
<polygon points="912.2,530.0 896.8,530.7 888.5,522.7 895.5,514.1 910.8,513.5 919.2,521.4" fill="#8f8e8a"/>
<polygon points="888.5,522.7 895.5,514.1 895.8,522.5 888.8,531.1" fill="#6a6864"/>
<polygon points="895.5,514.1 910.8,513.5 911.1,521.8 895.8,522.5" fill="#8f8e8a"/>
<polygon points="910.8,513.5 919.2,521.4 919.4,529.7 911.1,521.8" fill="#7d7b77"/>
<polygon points="912.5,538.4 897.1,539.1 888.8,531.1 895.8,522.5 911.1,521.8 919.4,529.7" fill="#202020" stroke="#141414" stroke-width="0.80"/>
<line x1="912.2" y1="530.0" x2="912.5" y2="538.4" stroke="#141414" stroke-width="0.80"/>
<line x1="896.8" y1="530.7" x2="897.1" y2="539.1" stroke="#141414" stroke-width="0.80"/>
<line x1="888.5" y1="522.7" x2="888.8" y2="531.1" stroke="#141414" stroke-width="0.80"/>
<line x1="895.5" y1="514.1" x2="895.8" y2="522.5" stroke="#141414" stroke-width="0.80"/>
<line x1="910.8" y1="513.5" x2="911.1" y2="521.8" stroke="#141414" stroke-width="0.80"/>
<line x1="919.2" y1="521.4" x2="919.4" y2="529.7" stroke="#141414" stroke-width="0.80"/>
</g>
<polygon points="912.2,530.0 896.8,530.7 888.5,522.7 895.5,514.1 910.8,513.5 919.2,521.4" fill="none" stroke="#141414" stroke-width="1.0" stroke-linejoin="round"/>
<clipPath id="h70"><polygon points="945.6,540.3 930.1,541.0 921.6,532.9 928.5,524.2 943.8,523.5 952.4,531.5"/></clipPath>
<g clip-path="url(#h70)">
<polygon points="945.6,540.3 930.1,541.0 921.6,532.9 928.5,524.2 943.8,523.5 952.4,531.5" fill="#8f8e8a"/>
<polygon points="921.6,532.9 928.5,524.2 928.7,532.6 921.8,541.3" fill="#6a6864"/>
<polygon points="928.5,524.2 943.8,523.5 944.0,531.9 928.7,532.6" fill="#8f8e8a"/>
<polygon points="943.8,523.5 952.4,531.5 952.6,539.9 944.0,531.9" fill="#7d7b77"/>
<polygon points="945.8,548.7 930.3,549.4 921.8,541.3 928.7,532.6 944.0,531.9 952.6,539.9" fill="#202020" stroke="#141414" stroke-width="0.80"/>
<line x1="945.6" y1="540.3" x2="945.8" y2="548.7" stroke="#141414" stroke-width="0.80"/>
<line x1="930.1" y1="541.0" x2="930.3" y2="549.4" stroke="#141414" stroke-width="0.80"/>
<line x1="921.6" y1="532.9" x2="921.8" y2="541.3" stroke="#141414" stroke-width="0.80"/>
<line x1="928.5" y1="524.2" x2="928.7" y2="532.6" stroke="#141414" stroke-width="0.80"/>
<line x1="943.8" y1="523.5" x2="944.0" y2="531.9" stroke="#141414" stroke-width="0.80"/>
<line x1="952.4" y1="531.5" x2="952.6" y2="539.9" stroke="#141414" stroke-width="0.80"/>
</g>
<polygon points="945.6,540.3 930.1,541.0 921.6,532.9 928.5,524.2 943.8,523.5 952.4,531.5" fill="none" stroke="#141414" stroke-width="1.0" stroke-linejoin="round"/>
<clipPath id="h71"><polygon points="979.4,550.7 963.8,551.4 955.1,543.2 961.9,534.4 977.3,533.7 986.1,541.8"/></clipPath>
<g clip-path="url(#h71)">
<polygon points="979.4,550.7 963.8,551.4 955.1,543.2 961.9,534.4 977.3,533.7 986.1,541.8" fill="#8f8e8a"/>
<polygon points="955.1,543.2 961.9,534.4 962.0,542.8 955.2,551.6" fill="#6a6864"/>
<polygon points="961.9,534.4 977.3,533.7 977.4,542.1 962.0,542.8" fill="#8f8e8a"/>
<polygon points="977.3,533.7 986.1,541.8 986.1,550.2 977.4,542.1" fill="#7d7b77"/>
<polygon points="979.5,559.1 963.9,559.8 955.2,551.6 962.0,542.8 977.4,542.1 986.1,550.2" fill="#202020" stroke="#141414" stroke-width="0.80"/>
<line x1="979.4" y1="550.7" x2="979.5" y2="559.1" stroke="#141414" stroke-width="0.80"/>
<line x1="963.8" y1="551.4" x2="963.9" y2="559.8" stroke="#141414" stroke-width="0.80"/>
<line x1="955.1" y1="543.2" x2="955.2" y2="551.6" stroke="#141414" stroke-width="0.80"/>
<line x1="961.9" y1="534.4" x2="962.0" y2="542.8" stroke="#141414" stroke-width="0.80"/>
<line x1="977.3" y1="533.7" x2="977.4" y2="542.1" stroke="#141414" stroke-width="0.80"/>
<line x1="986.1" y1="541.8" x2="986.1" y2="550.2" stroke="#141414" stroke-width="0.80"/>
</g>
<polygon points="979.4,550.7 963.8,551.4 955.1,543.2 961.9,534.4 977.3,533.7 986.1,541.8" fill="none" stroke="#141414" stroke-width="1.0" stroke-linejoin="round"/>
<clipPath id="h72"><polygon points="916.7,498.5 909.8,506.9 894.6,507.6 908.4,490.8"/></clipPath>
<g clip-path="url(#h72)">
<polygon points="916.7,498.5 909.8,506.9 894.6,507.6 908.4,490.8" fill="#8f8e8a"/>
<polygon points="894.6,507.6 908.4,490.8 908.7,499.1 894.9,515.9" fill="#6a6864"/>
<polygon points="908.4,490.8 916.7,498.5 916.9,506.8 908.7,499.1" fill="#7d7b77"/>
<polygon points="916.9,506.8 910.1,515.3 894.9,515.9 908.7,499.1" fill="#202020" stroke="#141414" stroke-width="0.80"/>
<line x1="916.7" y1="498.5" x2="916.9" y2="506.8" stroke="#141414" stroke-width="0.80"/>
<line x1="909.8" y1="506.9" x2="910.1" y2="515.3" stroke="#141414" stroke-width="0.80"/>
<line x1="894.6" y1="507.6" x2="894.9" y2="515.9" stroke="#141414" stroke-width="0.80"/>
<line x1="908.4" y1="490.8" x2="908.7" y2="499.1" stroke="#141414" stroke-width="0.80"/>
</g>
<polygon points="916.7,498.5 909.8,506.9 894.6,507.6 908.4,490.8" fill="none" stroke="#141414" stroke-width="1.0" stroke-linejoin="round"/>
<clipPath id="h73"><polygon points="942.7,516.9 927.4,517.6 919.0,509.7 925.9,501.3 941.0,500.6 949.5,508.4"/></clipPath>
<g clip-path="url(#h73)">
<polygon points="942.7,516.9 927.4,517.6 919.0,509.7 925.9,501.3 941.0,500.6 949.5,508.4" fill="#8f8e8a"/>
<polygon points="919.0,509.7 925.9,501.3 926.1,509.6 919.3,518.1" fill="#6a6864"/>
<polygon points="925.9,501.3 941.0,500.6 941.2,508.9 926.1,509.6" fill="#8f8e8a"/>
<polygon points="941.0,500.6 949.5,508.4 949.6,516.7 941.2,508.9" fill="#7d7b77"/>
<polygon points="942.9,525.3 927.7,525.9 919.3,518.1 926.1,509.6 941.2,508.9 949.6,516.7" fill="#202020" stroke="#141414" stroke-width="0.80"/>
<line x1="942.7" y1="516.9" x2="942.9" y2="525.3" stroke="#141414" stroke-width="0.80"/>
<line x1="927.4" y1="517.6" x2="927.7" y2="525.9" stroke="#141414" stroke-width="0.80"/>
<line x1="919.0" y1="509.7" x2="919.3" y2="518.1" stroke="#141414" stroke-width="0.80"/>
<line x1="925.9" y1="501.3" x2="926.1" y2="509.6" stroke="#141414" stroke-width="0.80"/>
<line x1="941.0" y1="500.6" x2="941.2" y2="508.9" stroke="#141414" stroke-width="0.80"/>
<line x1="949.5" y1="508.4" x2="949.6" y2="516.7" stroke="#141414" stroke-width="0.80"/>
</g>
<polygon points="942.7,516.9 927.4,517.6 919.0,509.7 925.9,501.3 941.0,500.6 949.5,508.4" fill="none" stroke="#141414" stroke-width="1.0" stroke-linejoin="round"/>
<clipPath id="h74"><polygon points="976.0,527.0 960.7,527.7 952.1,519.7 958.8,511.2 974.0,510.5 982.6,518.4"/></clipPath>
<g clip-path="url(#h74)">
<polygon points="976.0,527.0 960.7,527.7 952.1,519.7 958.8,511.2 974.0,510.5 982.6,518.4" fill="#8f8e8a"/>
<polygon points="952.1,519.7 958.8,511.2 958.9,519.5 952.2,528.1" fill="#6a6864"/>
<polygon points="958.8,511.2 974.0,510.5 974.0,518.9 958.9,519.5" fill="#8f8e8a"/>
<polygon points="974.0,510.5 982.6,518.4 982.7,526.7 974.0,518.9" fill="#7d7b77"/>
<polygon points="976.1,535.4 960.8,536.1 952.2,528.1 958.9,519.5 974.0,518.9 982.7,526.7" fill="#202020" stroke="#141414" stroke-width="0.80"/>
<line x1="976.0" y1="527.0" x2="976.1" y2="535.4" stroke="#141414" stroke-width="0.80"/>
<line x1="960.7" y1="527.7" x2="960.8" y2="536.1" stroke="#141414" stroke-width="0.80"/>
<line x1="952.1" y1="519.7" x2="952.2" y2="528.1" stroke="#141414" stroke-width="0.80"/>
<line x1="958.8" y1="511.2" x2="958.9" y2="519.5" stroke="#141414" stroke-width="0.80"/>
<line x1="974.0" y1="510.5" x2="974.0" y2="518.9" stroke="#141414" stroke-width="0.80"/>
<line x1="982.6" y1="518.4" x2="982.7" y2="526.7" stroke="#141414" stroke-width="0.80"/>
</g>
<polygon points="976.0,527.0 960.7,527.7 952.1,519.7 958.8,511.2 974.0,510.5 982.6,518.4" fill="none" stroke="#141414" stroke-width="1.0" stroke-linejoin="round"/>
<clipPath id="h75"><polygon points="1009.8,537.3 994.3,538.0 985.5,529.9 992.1,521.2 1007.4,520.6 1016.2,528.5"/></clipPath>
<g clip-path="url(#h75)">
<polygon points="1009.8,537.3 994.3,538.0 985.5,529.9 992.1,521.2 1007.4,520.6 1016.2,528.5" fill="#8f8e8a"/>
<polygon points="985.5,529.9 992.1,521.2 992.1,529.6 985.5,538.3" fill="#6a6864"/>
<polygon points="992.1,521.2 1007.4,520.6 1007.3,528.9 992.1,529.6" fill="#8f8e8a"/>
<polygon points="1007.4,520.6 1016.2,528.5 1016.2,536.9 1007.3,528.9" fill="#7d7b77"/>
<polygon points="1009.7,545.6 994.3,546.3 985.5,538.3 992.1,529.6 1007.3,528.9 1016.2,536.9" fill="#202020" stroke="#141414" stroke-width="0.80"/>
<line x1="1009.8" y1="537.3" x2="1009.7" y2="545.6" stroke="#141414" stroke-width="0.80"/>
<line x1="994.3" y1="538.0" x2="994.3" y2="546.3" stroke="#141414" stroke-width="0.80"/>
<line x1="985.5" y1="529.9" x2="985.5" y2="538.3" stroke="#141414" stroke-width="0.80"/>
<line x1="992.1" y1="521.2" x2="992.1" y2="529.6" stroke="#141414" stroke-width="0.80"/>
<line x1="1007.4" y1="520.6" x2="1007.3" y2="528.9" stroke="#141414" stroke-width="0.80"/>
<line x1="1016.2" y1="528.5" x2="1016.2" y2="536.9" stroke="#141414" stroke-width="0.80"/>
</g>
<polygon points="1009.8,537.3 994.3,538.0 985.5,529.9 992.1,521.2 1007.4,520.6 1016.2,528.5" fill="none" stroke="#141414" stroke-width="1.0" stroke-linejoin="round"/>
<clipPath id="h76"><polygon points="940.8,494.4 925.7,495.1 917.4,487.4 923.6,479.9 946.9,486.8"/></clipPath>
<g clip-path="url(#h76)">
<polygon points="940.8,494.4 925.7,495.1 917.4,487.4 923.6,479.9 946.9,486.8" fill="#8f8e8a"/>
<polygon points="917.4,487.4 923.6,479.9 923.8,488.1 917.7,495.7" fill="#6a6864"/>
<polygon points="923.6,479.9 946.9,486.8 947.0,495.1 923.8,488.1" fill="#8f8e8a"/>
<polygon points="940.9,502.7 925.9,503.4 917.7,495.7 923.8,488.1 947.0,495.1" fill="#202020" stroke="#141414" stroke-width="0.80"/>
<line x1="940.8" y1="494.4" x2="940.9" y2="502.7" stroke="#141414" stroke-width="0.80"/>
<line x1="925.7" y1="495.1" x2="925.9" y2="503.4" stroke="#141414" stroke-width="0.80"/>
<line x1="917.4" y1="487.4" x2="917.7" y2="495.7" stroke="#141414" stroke-width="0.80"/>
<line x1="923.6" y1="479.9" x2="923.8" y2="488.1" stroke="#141414" stroke-width="0.80"/>
<line x1="946.9" y1="486.8" x2="947.0" y2="495.1" stroke="#141414" stroke-width="0.80"/>
</g>
<polygon points="940.8,494.4 925.7,495.1 917.4,487.4 923.6,479.9 946.9,486.8" fill="none" stroke="#141414" stroke-width="1.0" stroke-linejoin="round"/>
<clipPath id="h77"><polygon points="973.6,504.3 958.5,504.9 950.0,497.2 956.1,489.5 979.6,496.5"/></clipPath>
<g clip-path="url(#h77)">
<polygon points="973.6,504.3 958.5,504.9 950.0,497.2 956.1,489.5 979.6,496.5" fill="#8f8e8a"/>
<polygon points="950.0,497.2 956.1,489.5 956.2,497.8 950.1,505.5" fill="#6a6864"/>
<polygon points="956.1,489.5 979.6,496.5 979.7,504.8 956.2,497.8" fill="#8f8e8a"/>
<polygon points="973.7,512.6 958.6,513.3 950.1,505.5 956.2,497.8 979.7,504.8" fill="#202020" stroke="#141414" stroke-width="0.80"/>
<line x1="973.6" y1="504.3" x2="973.7" y2="512.6" stroke="#141414" stroke-width="0.80"/>
<line x1="958.5" y1="504.9" x2="958.6" y2="513.3" stroke="#141414" stroke-width="0.80"/>
<line x1="950.0" y1="497.2" x2="950.1" y2="505.5" stroke="#141414" stroke-width="0.80"/>
<line x1="956.1" y1="489.5" x2="956.2" y2="497.8" stroke="#141414" stroke-width="0.80"/>
<line x1="979.6" y1="496.5" x2="979.7" y2="504.8" stroke="#141414" stroke-width="0.80"/>
</g>
<polygon points="973.6,504.3 958.5,504.9 950.0,497.2 956.1,489.5 979.6,496.5" fill="none" stroke="#141414" stroke-width="1.0" stroke-linejoin="round"/>
<clipPath id="h78"><polygon points="1006.9,514.2 991.6,514.9 982.9,507.1 988.9,499.3 1012.7,506.4"/></clipPath>
<g clip-path="url(#h78)">
<polygon points="1006.9,514.2 991.6,514.9 982.9,507.1 988.9,499.3 1012.7,506.4" fill="#8f8e8a"/>
<polygon points="982.9,507.1 988.9,499.3 988.9,507.6 983.0,515.4" fill="#6a6864"/>
<polygon points="988.9,499.3 1012.7,506.4 1012.7,514.7 988.9,507.6" fill="#8f8e8a"/>
<polygon points="1006.8,522.6 991.6,523.2 983.0,515.4 988.9,507.6 1012.7,514.7" fill="#202020" stroke="#141414" stroke-width="0.80"/>
<line x1="1006.9" y1="514.2" x2="1006.8" y2="522.6" stroke="#141414" stroke-width="0.80"/>
<line x1="991.6" y1="514.9" x2="991.6" y2="523.2" stroke="#141414" stroke-width="0.80"/>
<line x1="982.9" y1="507.1" x2="983.0" y2="515.4" stroke="#141414" stroke-width="0.80"/>
<line x1="988.9" y1="499.3" x2="988.9" y2="507.6" stroke="#141414" stroke-width="0.80"/>
<line x1="1012.7" y1="506.4" x2="1012.7" y2="514.7" stroke="#141414" stroke-width="0.80"/>
</g>
<polygon points="1006.9,514.2 991.6,514.9 982.9,507.1 988.9,499.3 1012.7,506.4" fill="none" stroke="#141414" stroke-width="1.0" stroke-linejoin="round"/>
</g>
</svg>
<div id="title" class="abs">
 <svg class="abs" style="left:3px;top:3px" width="15" height="17" viewBox="0 0 15 17"><rect x="0.5" y="0.5" width="14" height="16" rx="2" fill="#f26b1d"/><rect x="0.5" y="12" width="14" height="4.5" fill="#c24a0c"/><text x="4" y="10.5" font-size="9" font-weight="bold" fill="#fff" font-family="Liberation Sans">F</text></svg>
 <div class="abs t">847 Plus Case v9* - Autodesk Fusion (Education License)</div>
</div>
<div id="qat" class="abs"></div>
<div id="tab" class="abs"></div>
<div id="ribbon" class="abs"></div>
<svg class="abs" style="left:8px;top:32px" width="14" height="14" viewBox="0 0 14 14"><rect x="1.0" y="1.0" width="3.2" height="3.2" fill="#7d7d7d"/><rect x="1.0" y="5.3" width="3.2" height="3.2" fill="#7d7d7d"/><rect x="1.0" y="9.6" width="3.2" height="3.2" fill="#7d7d7d"/><rect x="5.3" y="1.0" width="3.2" height="3.2" fill="#7d7d7d"/><rect x="5.3" y="5.3" width="3.2" height="3.2" fill="#7d7d7d"/><rect x="5.3" y="9.6" width="3.2" height="3.2" fill="#7d7d7d"/><rect x="9.6" y="1.0" width="3.2" height="3.2" fill="#7d7d7d"/><rect x="9.6" y="5.3" width="3.2" height="3.2" fill="#7d7d7d"/><rect x="9.6" y="9.6" width="3.2" height="3.2" fill="#7d7d7d"/></svg>
<svg class="abs" style="left:41px;top:32px" width="13" height="15" viewBox="0 0 13 15"><path d="M1 0.5 H8.5 L12.5 4.5 V14.5 H1 Z" fill="#7d7d7d"/><path d="M8.5 0.5 V4.5 H12.5" fill="#bdbdbd"/></svg>
<div class="arr" style="left:59px;top:37px;border-left-width:3.5px;border-right-width:3.5px;border-top:5px solid #7d7d7d"></div>
<svg class="abs" style="left:82px;top:32px" width="14" height="14" viewBox="0 0 14 14"><path d="M1 1 H11 L13 3 V13 H1 Z" fill="#7d7d7d"/><rect x="3.5" y="1.5" width="6" height="4" fill="#d7d7d7"/><rect x="3.5" y="8.5" width="7" height="4.5" fill="#d7d7d7"/><rect x="4.5" y="9.5" width="5" height="3.5" fill="#7d7d7d"/></svg>
<svg class="abs" style="left:115px;top:33px" width="13" height="11" viewBox="0 0 13 11"><path d="M4 1 L0.5 4.5 L4 8" fill="none" stroke="#7d7d7d" stroke-width="2"/><path d="M1.5 4.5 H7 A4.5 4.5 0 0 1 11.5 9 V10" fill="none" stroke="#7d7d7d" stroke-width="2"/></svg>
<div class="arr" style="left:134px;top:37px;border-left-width:3.5px;border-right-width:3.5px;border-top:5px solid #7d7d7d"></div>
<svg class="abs" style="left:152px;top:33px" width="13" height="11" viewBox="0 0 13 11"><g transform="translate(13,0) scale(-1,1)"><path d="M4 1 L0.5 4.5 L4 8" fill="none" stroke="#b4b4b4" stroke-width="2"/><path d="M1.5 4.5 H7 A4.5 4.5 0 0 1 11.5 9 V10" fill="none" stroke="#b4b4b4" stroke-width="2"/></g></svg>
<div class="arr" style="left:171px;top:37px;border-left-width:3.5px;border-right-width:3.5px;border-top:5px solid #b4b4b4"></div>
<svg class="abs" style="left:196px;top:35px" width="16" height="15" viewBox="0 0 16 15"><path d="M8 1 L15 8 H13 V14 H3 V8 H1 Z" fill="#7d7d7d"/><rect x="11" y="2" width="2" height="4" fill="#7d7d7d"/><rect x="6.5" y="9.5" width="3" height="4.5" fill="#a8a8a8"/></svg>
<svg class="abs" style="left:890px;top:33px" width="16" height="17" viewBox="0 0 16 17"><path d="M8 1 L15 4.5 V12.5 L8 16 L1 12.5 V4.5 Z" fill="#f08a24"/><path d="M8 1 L15 4.5 L8 8 L1 4.5 Z" fill="#ffb057"/><path d="M8 8 L15 4.5 V12.5 L8 16 Z" fill="#d9660c"/></svg>
<div class="abs" style="left:910px;top:35px;font-size:12.5px;color:#333;white-space:nowrap">847 Plus Case v9*</div>
<div class="abs" style="left:12px;top:65px;width:109px;height:61px;box-sizing:border-box;border:1px solid #c9c9c9;border-radius:4px;background:#f4f4f4"></div>
<div class="abs" style="left:43px;top:88.5px;font-size:12px;font-weight:bold;color:#2f3640;transform:scaleX(0.86);transform-origin:0 0">DESIGN</div>
<div class="arr" style="left:89px;top:94px;border-top-color:#777"></div>
<div class="lbl" style="left:150.5px;top:60px">SOLID</div>
<div class="lbl" style="left:228.4px;top:60px">SURFACE</div>
<div class="lbl" style="left:326.4px;top:60px">MESH</div>
<div class="lbl" style="left:404px;top:60px">SHEET METAL</div>
<div class="lbl" style="left:527px;top:60px">PLASTIC</div>
<div class="lbl" style="left:620px;top:60px">MANAGE</div>
<div class="lbl" style="left:713.5px;top:60px">UTILITIES</div>
<div class="abs" style="left:138px;top:75px;width:58px;height:3px;background:#333"></div>
<div class="lbl" style="left:234px;top:121px">CREATE</div>
<div class="arr" style="left:278px;top:125px"></div>
<div class="lbl" style="left:504px;top:121px">MODIFY</div>
<div class="arr" style="left:548px;top:125px"></div>
<div class="lbl" style="left:722.6px;top:121px">ASSEMBLE</div>
<div class="arr" style="left:782px;top:125px"></div>
<div class="lbl" style="left:864.4px;top:121px">CONFIGURE</div>
<div class="arr" style="left:928px;top:125px"></div>
<div class="lbl" style="left:965.3px;top:121px">CONSTRUCT</div>
<div class="arr" style="left:1032px;top:125px"></div>
<div class="lbl" style="left:1071.3px;top:121px">INSPECT</div>
<div class="arr" style="left:1118px;top:125px"></div>
<div class="lbl" style="left:1162px;top:121px">INSERT</div>
<div class="arr" style="left:1203px;top:125px"></div>
<div class="lbl" style="left:1249px;top:121px">SELECT</div>
<div class="arr" style="left:1291px;top:125px"></div>
<div class="sep" style="left:394px"></div>
<div class="sep" style="left:662.5px"></div>
<div class="sep" style="left:846px"></div>
<div class="sep" style="left:949px"></div>
<div class="sep" style="left:1052.5px"></div>
<div class="sep" style="left:1137px"></div>
<div class="sep" style="left:1234px"></div>
<svg class="abs" style="left:137px;top:82px" width="33" height="34" viewBox="0 0 33 34"><g fill="#4a4a4a"><rect x="0" y="0" width="3" height="3"/><rect x="28" y="0" width="3" height="3"/><rect x="0" y="28" width="3" height="3"/><rect x="7" y="7" width="3" height="3"/><rect x="20" y="7" width="3" height="3"/><rect x="7" y="20" width="3" height="3"/></g>
<g stroke="#4a4a4a" stroke-width="1.2" fill="none"><path d="M4 1.5 H27 M1.5 4 V27 M29.5 4 V19 M4 29.5 H18 M11 8.5 H19 M8.5 11 V19 M21.5 11 Q21 19 12 21.5"/></g>
<path d="M22.9 18 H26.9 V22.9 H31.8 V26.9 H26.9 V31.8 H22.9 V26.9 H18 V22.9 H22.9 Z" fill="#22a84a"/></svg>
<svg class="abs" style="left:180px;top:82px" width="33" height="34" viewBox="0 0 33 34"><path d="M0.3 13.9 Q15.4 4.2 30.5 13.9 L26.4 19.4 Q15.4 11.6 5.3 19.8 Z" fill="#8ccaf5"/><path d="M5.3 19.8 Q15.4 11.6 26.4 19.4 L25.5 28.1 Q15.4 20.7 6.2 28.5 Z" fill="#5aa7e6"/><path d="M0.3 13.9 L5.3 19.8 L6.2 28.5 L0.7 22.6 Z" fill="#3b86c8"/><path d="M26.4 19.4 L31.4 13.9 V23.5 L26.4 28.5 Z" fill="#fff" stroke="#333" stroke-width="0.9"/><path d="M29.1 7.5 Q15.4 -2 3 6" fill="none" stroke="#333" stroke-width="1"/><path d="M0.8 6.8 L5.5 3.6 L5 8.2 Z" fill="#333"/></svg>
<svg class="abs" style="left:223px;top:82px" width="33" height="34" viewBox="0 0 33 34"><path d="M0.5 8 L8 0.5 H31.5 V24 L24 31.5 H0.5 Z" fill="#dadada" stroke="#555" stroke-width="1"/><path d="M24 8 L31.5 0.5 V24 L24 31.5 Z" fill="#c4c4c4"/><path d="M0.5 8 L8 0.5 H31.5 L24 8 Z" fill="#ececec"/><circle cx="12" cy="20" r="8.2" fill="#f8f8f8" stroke="#555" stroke-width="0.9"/><clipPath id="hc1"><circle cx="12" cy="20" r="7"/></clipPath><g clip-path="url(#hc1)"><circle cx="12" cy="20" r="7" fill="#5aa7e6"/><circle cx="18" cy="13.5" r="7" fill="#fafafa"/></g></svg>
<svg class="abs" style="left:265px;top:82px" width="33" height="34" viewBox="0 0 33 34"><rect x="1.5" y="2" width="6" height="6" fill="#fff" stroke="#555"/><rect x="23" y="2" width="6.5" height="6.5" fill="#5aa7e6"/><rect x="1" y="23" width="6.5" height="6.5" fill="#5aa7e6"/><rect x="23" y="23" width="6.5" height="6.5" fill="#5aa7e6"/><path d="M8 5 H23 M4.5 8 V23 M8 26 H23" stroke="#555" stroke-width="1.2"/></svg>
<svg class="abs" style="left:309px;top:82px" width="33" height="34" viewBox="0 0 33 34"><path d="M1 10 Q1 2 9 1 H25 Q31 2 31 10 V25 Q31 31 24 31 H8 Q1 31 1 24 Z" fill="#a77ee0"/><path d="M4 12 Q4 6 10 6 H21 Q25 6 25 11 V27 H9 Q4 27 4 22 Z" fill="#b98ef0"/><path d="M14 6 V27 M4 17 H25" stroke="#8a5cc8" stroke-width="1"/><path d="M25 5 Q31 5 31 12 V25 L25 28 Z" fill="#8a5cc8"/><path d="M20 19 H25 V24 H30 V29 H25 V34 H20 V29 H15 V24 H20 Z" fill="#22a84a" stroke="#fff" stroke-width="0.8"/></svg>
<svg class="abs" style="left:352px;top:82px" width="33" height="34" viewBox="0 0 33 34"><path d="M5 6 Q14 10 16 20 Q18 10 27 8" fill="none" stroke="#5aa7e6" stroke-width="4"/><path d="M13 13 L16 25 L19 13 Z" fill="#5aa7e6"/><circle cx="16" cy="27" r="4.5" fill="#5aa7e6"/><circle cx="16" cy="27" r="2.5" fill="#fff" stroke="#555" stroke-width="0.7"/><rect x="0.5" y="0.5" width="6" height="6" fill="#fff" stroke="#555"/><path d="M25 6 L29 4 L32 9 L29 13 L25 11 Z" fill="#fff" stroke="#555" stroke-width="0.9"/></svg>
<svg class="abs" style="left:406px;top:82px" width="33" height="34" viewBox="0 0 33 34"><path d="M1.3 32 V6 L6 0.5 H9" fill="#dadada" stroke="#555" stroke-width="1"/><rect x="1.3" y="6" width="7" height="26" fill="#dadada"/><path d="M8 6 L14 0.5 H23 L17 6 Z" fill="#86c5f5"/><rect x="8" y="6" width="9" height="26" fill="#5aa7e6"/><path d="M17 6 L23 0.5 V26 L17 32 Z" fill="#3b86c8"/><path d="M20 15.5 H27" stroke="#fff" stroke-width="3"/><path d="M19.5 15.5 H26" stroke="#222" stroke-width="1.2"/><path d="M25 12.5 L30 15.5 L25 18.5 Z" fill="#222"/></svg>
<svg class="abs" style="left:449px;top:82px" width="33" height="34" viewBox="0 0 33 34"><path d="M0.5 7.5 L7.5 0.5 H24 L31.5 8 V24 L24 31.5 H0.5 Z" fill="#dadada" stroke="#555" stroke-width="1"/><path d="M24 31.5 V16 L31.5 10 V24 Z" fill="#c2c2c2"/><path d="M0.5 7.5 L7.5 0.5 H20 L15 7.5 Z" fill="#eeeeee"/><path d="M19 3 Q30 5 31 15 L24 21 Q22 11 14 8 Z" fill="#5aa7e6" stroke="#fff" stroke-width="0.8"/></svg>
<svg class="abs" style="left:491px;top:82px" width="33" height="34" viewBox="0 0 33 34"><path d="M1 8 L8 0.5 H32.5 V24 L25 31.5 H1 Z" fill="#e2e2e2" stroke="#555" stroke-width="1"/><path d="M25 8 L32.5 0.5 V24 L25 31.5 Z" fill="#c6c6c6"/><rect x="3.5" y="9.5" width="19" height="19.5" fill="#f6f6f6"/><rect x="5" y="12" width="8" height="15.5" fill="#3b86c8"/><path d="M5 27.5 L13 20 H21 V27.5 Z" fill="#86c5f5"/></svg>
<svg class="abs" style="left:535px;top:82px" width="33" height="34" viewBox="0 0 33 34"><path d="M0 14 L3 11 H11 V4 L15 0.5 H29 V17 L25 21 H18 V28 L14 31.5 H0 Z" fill="#5aa7e6"/><path d="M11 4 L15 0.5 H29 L25 4 Z" fill="#86c5f5"/><path d="M25 4 L29 0.5 V17 L25 21 Z" fill="#3b86c8"/><path d="M0 14 L3 11 H11 V14 Z" fill="#86c5f5"/><path d="M18 21 H25 L18 28 Z" fill="#3b86c8"/></svg>
<svg class="abs" style="left:577px;top:82px" width="33" height="34" viewBox="0 0 33 34"><path d="M3 6 L9 0.5 H31 L25 6 Z" fill="#86c5f5"/><rect x="3" y="6" width="22" height="10" fill="#5aa7e6"/><path d="M25 6 L31 0.5 V10 L25 16 Z" fill="#3b86c8"/><path d="M1 19 L31 12" stroke="#fff" stroke-width="3"/><path d="M1 19.5 H26 L32 14" fill="none" stroke="#5ab8f0" stroke-width="1.2"/><rect x="3" y="20.5" width="22" height="10.5" fill="#dcdcdc" stroke="#555" stroke-width="1"/><path d="M25 20.5 L31 15.5 V26 L25 31 Z" fill="#c4c4c4"/></svg>
<svg class="abs" style="left:621px;top:82px" width="33" height="34" viewBox="0 0 33 34"><path d="M15.7 3 V29 M3 15.7 H29" stroke="#2b2b2b" stroke-width="2"/><path d="M15.7 0.5 L20.5 7 H11 Z M15.7 31 L20.5 24.5 H11 Z M0.5 15.7 L7 11 V20.5 Z M31 15.7 L24.5 11 V20.5 Z" fill="#2b2b2b"/></svg>
<svg class="abs" style="left:674px;top:82px" width="33" height="34" viewBox="0 0 33 34"><path d="M5 30 V10 L11 4 H23 V24 L17 30 Z" fill="#dadada" stroke="#555" stroke-width="1"/><path d="M17 10 L23 4 V24 L17 30 Z" fill="#c8c8c8"/><path d="M5 10 L11 4 H23 L17 10 Z" fill="#eee"/><rect x="1" y="4" width="9" height="4.5" fill="#1e88e5"/><path d="M9.5 0.5 L18 6.2 L9.5 12 Z" fill="#1e88e5"/><g fill="none" stroke="#2f2f2f" stroke-width="2"><rect x="17" y="23" width="9" height="5" rx="2.5" transform="rotate(-40 21.5 25.5)"/><rect x="23" y="18" width="9" height="5" rx="2.5" transform="rotate(-40 27.5 20.5)"/></g></svg>
<svg class="abs" style="left:717px;top:82px" width="33" height="34" viewBox="0 0 33 34"><rect x="1" y="19.5" width="12.5" height="12" fill="#dcdcdc" stroke="#555" stroke-width="0.9"/><path d="M13.5 19.5 L17 16 H28 V28 L25 31.5 H13.5 Z" fill="#dcdcdc" stroke="#555" stroke-width="0.9"/><path d="M25 20 L28 16 V28 L25 31.5 Z" fill="#c4c4c4"/><rect x="1" y="7" width="12.5" height="12.5" fill="#5aa7e6"/><path d="M1 7 L4 4 H16 L13.5 7 Z" fill="#86c5f5"/><path d="M13.5 7 L16 4 V16 L13.5 19.5 Z" fill="#3b86c8"/><path d="M23 0 H27 V5.5 H32.5 V9.5 H27 V15 H23 V9.5 H17.5 V5.5 H23 Z" fill="#22a84a"/></svg>
<svg class="abs" style="left:760px;top:82px" width="33" height="34" viewBox="0 0 33 34"><rect x="18.4" y="2.2" width="13.4" height="11.5" fill="#5aa7e6"/><path d="M16 2.2 V29.5" stroke="#b03030" stroke-width="1.2"/><rect x="1.8" y="18.6" width="13.4" height="11" fill="none" stroke="#555" stroke-width="1.1"/></svg>
<svg class="abs" style="left:804px;top:82px" width="33" height="34" viewBox="0 0 33 34"><rect x="0.5" y="0.5" width="6" height="6" fill="#5aa7e6"/><rect x="0.5" y="6.5" width="6" height="6" fill="#fff" stroke="#555" stroke-width="0.9"/><rect x="6.5" y="6.5" width="6" height="6" fill="#fff" stroke="#555" stroke-width="0.9"/><path d="M5.3 14 V29.5 M5.3 17.5 H12.5 M5.3 22.5 H12.5 M5.3 27.5 H12.5" stroke="#999" stroke-width="1"/><rect x="15.5" y="8" width="16" height="23" fill="#fff" stroke="#555" stroke-width="1.1"/><rect x="15.5" y="8" width="16" height="3.5" fill="#555"/><path d="M15.5 15 H31.5 M15.5 19 H31.5 M15.5 23 H31.5 M15.5 27 H31.5 M20 11.5 V31" stroke="#555" stroke-width="0.9"/></svg>
<svg class="abs" style="left:861px;top:82px" width="33" height="34" viewBox="0 0 33 34"><path d="M0.5 7 L6.5 0.5 H22 V20 L16 26 H0.5 Z" fill="#dadada" stroke="#555" stroke-width="1"/><path d="M16 7 L22 0.5 V20 L16 26 Z" fill="#c4c4c4"/><path d="M0.5 7 L6.5 0.5 H22 L16 7 Z" fill="#ececec"/><rect x="14" y="19" width="18" height="14" fill="#f4f4f4"/><path d="M17 23 H32 M17 28.7 H32" stroke="#555" stroke-width="1.6"/><rect x="21" y="20" width="2.2" height="5.5" fill="#1e88e5"/><rect x="26" y="26" width="2.2" height="5.5" fill="#444"/></svg>
<svg class="abs" style="left:904px;top:82px" width="33" height="34" viewBox="0 0 33 34"><rect x="0.5" y="0.5" width="29.5" height="28" fill="#fff" stroke="#555" stroke-width="1.1"/><rect x="0.5" y="0.5" width="29.5" height="5" fill="#555"/><rect x="2.5" y="1.8" width="3" height="1.8" fill="#fff"/><path d="M4 9.5 H27 V24 H4 Z M4 14.5 H27 M4 19.3 H27 M9.5 9.5 V24 M14.5 9.5 V24" fill="none" stroke="#555" stroke-width="0.9"/><rect x="16" y="19" width="16" height="14" fill="#f4f4f4"/><path d="M18 23 H32 M18 28.7 H32" stroke="#555" stroke-width="1.6"/><rect x="21.5" y="20" width="2.2" height="5.5" fill="#1e88e5"/><rect x="26.5" y="26" width="2.2" height="5.5" fill="#444"/></svg>
<svg class="abs" style="left:985px;top:82px" width="33" height="34" viewBox="0 0 33 34"><path d="M2.3 30.2 V8.7 L8.5 2.5 H11" fill="none" stroke="#555" stroke-width="1"/><rect x="2.3" y="8.7" width="8" height="21.5" fill="#dadada"/><path d="M10.5 30.5 V9 L19.5 1.5 V22.5 Z" fill="#5cc47a" stroke="#2f7f47" stroke-width="0.7"/><path d="M23 30.5 V9 L31.5 1.5 V22.5 Z" fill="#e8955a" stroke="#b86a30" stroke-width="0.7"/></svg>
<svg class="abs" style="left:1151px;top:82px" width="33" height="34" viewBox="0 0 33 34"><path d="M0 2 Q0 1 1.5 1 H22.5 Q24 1 24 2 V8.5 H0 Z" fill="#6fb2ea" stroke="#3b86c8" stroke-width="0.8"/><path d="M5 8.5 H20 V29 Q20 31 18 31 H7 Q5 31 5 29 Z" fill="#5aa7e6"/><path d="M5 12 H20 M5 15 H20 M5 18 H20 M5 21 H20 M5 24 H20 M5 27 H20" stroke="#3b86c8" stroke-width="0.8"/><path d="M20 18 H25 V23 H30 V28 H25 V33 H20 V28 H15 V23 H20 Z" fill="#22a84a" stroke="#fff" stroke-width="0.8"/></svg>
<svg class="abs" style="left:1193px;top:82px" width="33" height="34" viewBox="0 0 33 34"><rect x="0" y="1" width="29" height="29" fill="#4a9be0" stroke="#3b86c8" stroke-width="0.8"/><rect x="1" y="2" width="27" height="27" fill="#7cc0f2"/><path d="M1 29 V18 Q6 11 11 16 Q16 22 20 18 Q24 15 28 20 V29 Z" fill="#3b86c8"/><circle cx="21" cy="9" r="3" fill="#fff4b0"/></svg>
<svg class="abs" style="left:1080px;top:88px" width="32" height="20" viewBox="0 0 32 20"><rect x="1" y="10.5" width="29" height="7.5" fill="#f5a623"/><path d="M4 10.5 V13 M7 10.5 V12 M10 10.5 V12 M13 10.5 V13 M16 10.5 V12 M19 10.5 V12 M22 10.5 V13 M25 10.5 V12 M28 10.5 V12" stroke="#a86a00" stroke-width="0.6"/><path d="M2 2 V9 M29 2 V9 M2.5 5.5 H28.5" stroke="#333" stroke-width="1"/><path d="M2.5 5.5 L6 3.5 V7.5 Z M28.5 5.5 L25 3.5 V7.5 Z" fill="#333"/></svg>
<div class="abs" style="left:1252px;top:78px;width:39px;height:39px;box-sizing:border-box;background:#dbe8f4;border:1px solid #a8cbe9;border-radius:2px"></div>
<svg class="abs" style="left:1252px;top:78px" width="40" height="40" viewBox="0 0 40 40"><rect x="4.5" y="4.5" width="27" height="21" fill="none" stroke="#3aa860" stroke-width="1" stroke-dasharray="3 2"/><path d="M24.5 18 L24.5 33 L28 29.5 L31 35 L33 34 L30.2 28.5 L35 28.5 Z" fill="#fff" stroke="#333" stroke-width="0.9"/></svg>
<div class="hdr" style="left:4px;top:144px;width:300px;height:25px"></div>
<svg class="abs" style="left:10px;top:155px" width="10" height="6" viewBox="0 0 10 6"><path d="M4.5 0.5 L1 3 L4.5 5.5 Z M9 0.5 L5.5 3 L9 5.5 Z" fill="#888"/></svg>
<div class="abs" style="left:32.5px;top:151px;font-size:12.4px;color:#3a3a3a;transform:scaleX(0.86);transform-origin:0 0">BROWSER</div>
<div class="abs" style="left:283px;top:155px;width:8px;height:1.5px;background:#555"></div>
<div class="abs" style="left:8.5px;top:174px;width:5px;height:486px;background:#e4e4e4;border-radius:2.5px"></div>
<div class="row" style="left:40px;top:174.5px;width:163px"></div>
<svg class="abs" style="left:21.5px;top:181px" width="10" height="6" viewBox="0 0 10 6"><path d="M1 0.8 L5 4.8 L9 0.8" fill="none" stroke="#333" stroke-width="1.3"/></svg>
<svg class="abs" style="left:43px;top:178.5px" width="16" height="11" viewBox="0 0 16 11"><path d="M0 5.5 Q8 -3.8 16 5.5 Q8 14.8 0 5.5 Z" fill="#6b6b6b"/><circle cx="8" cy="5.5" r="3" fill="#f2f2f2"/><circle cx="8" cy="5.5" r="1.7" fill="#6b6b6b"/></svg>
<svg class="abs" style="left:68px;top:176px" width="17" height="17" viewBox="0 0 17 17"><rect x="0.5" y="0.5" width="7" height="7" fill="#4d9be3"/><rect x="0.5" y="7.5" width="7" height="7" fill="#ddd" stroke="#666" stroke-width="0.8"/><rect x="7.5" y="7.5" width="7" height="7" fill="#ddd" stroke="#666" stroke-width="0.8"/></svg>
<div class="txt" style="left:97.7px;top:177.5px;">847 Plus Case v9</div>
<div class="row" style="left:58px;top:198.5px;width:149.5px"></div>
<svg class="abs" style="left:41px;top:203px" width="6" height="10" viewBox="0 0 6 10"><path d="M0.8 1 L4.8 5 L0.8 9" fill="none" stroke="#555" stroke-width="1.2"/></svg>
<svg class="abs" style="left:60.5px;top:200px" width="17" height="17" viewBox="0 0 17 17"><g transform="translate(8,8)" fill="#6a6a6a"><rect x="-1.8" y="-8" width="3.6" height="4" transform="rotate(0)"/><rect x="-1.8" y="-8" width="3.6" height="4" transform="rotate(45)"/><rect x="-1.8" y="-8" width="3.6" height="4" transform="rotate(90)"/><rect x="-1.8" y="-8" width="3.6" height="4" transform="rotate(135)"/><rect x="-1.8" y="-8" width="3.6" height="4" transform="rotate(180)"/><rect x="-1.8" y="-8" width="3.6" height="4" transform="rotate(225)"/><rect x="-1.8" y="-8" width="3.6" height="4" transform="rotate(270)"/><rect x="-1.8" y="-8" width="3.6" height="4" transform="rotate(315)"/><circle r="5.5"/><circle r="2.3" fill="#f0f0f0"/></g></svg>
<div class="txt" style="left:91.5px;top:201.5px;">Document Settings</div>
<div class="row" style="left:58px;top:222.5px;width:118px"></div>
<svg class="abs" style="left:41px;top:227px" width="6" height="10" viewBox="0 0 6 10"><path d="M0.8 1 L4.8 5 L0.8 9" fill="none" stroke="#555" stroke-width="1.2"/></svg>
<svg class="abs" style="left:60.5px;top:224px" width="17" height="17" viewBox="0 0 17 17"><path d="M0.5 2.5 V13.5 H15 V3.5 H7 L5.5 1 H0.5 Z" fill="#f4f4f4" stroke="#555" stroke-width="1"/><path d="M1 2 H5 L6 3.5 H1 Z" fill="#bbb"/></svg>
<div class="txt" style="left:91.5px;top:225.5px;">Named Views</div>
<div class="row" style="left:58px;top:246.5px;width:103px"></div>
<svg class="abs" style="left:41px;top:251px" width="6" height="10" viewBox="0 0 6 10"><path d="M0.8 1 L4.8 5 L0.8 9" fill="none" stroke="#555" stroke-width="1.2"/></svg>
<svg class="abs" style="left:61px;top:250.5px" width="16" height="11" viewBox="0 0 16 11"><path d="M0.8 5.5 Q8 -2.5 15.2 5.5 Q8 13.5 0.8 5.5 Z" fill="none" stroke="#7a7a7a" stroke-width="1"/><circle cx="8" cy="5.5" r="2.6" fill="none" stroke="#7a7a7a" stroke-width="1"/><path d="M3 -0.5 L13 11.5" stroke="#7a7a7a" stroke-width="1"/></svg>
<svg class="abs" style="left:86px;top:248px" width="17" height="17" viewBox="0 0 17 17"><path d="M0.5 2.5 V13.5 H15 V3.5 H7 L5.5 1 H0.5 Z" fill="#f4f4f4" stroke="#555" stroke-width="1"/><path d="M1 2 H5 L6 3.5 H1 Z" fill="#bbb"/></svg>
<div class="txt" style="left:116px;top:249.5px;">Origin</div>
<div class="row" style="left:58px;top:270.5px;width:95px"></div>
<svg class="abs" style="left:41px;top:275px" width="6" height="10" viewBox="0 0 6 10"><path d="M0.8 1 L4.8 5 L0.8 9" fill="none" stroke="#555" stroke-width="1.2"/></svg>
<svg class="abs" style="left:61px;top:274.5px" width="16" height="11" viewBox="0 0 16 11"><path d="M0 5.5 Q8 -3.8 16 5.5 Q8 14.8 0 5.5 Z" fill="#6b6b6b"/><circle cx="8" cy="5.5" r="3" fill="#f2f2f2"/><circle cx="8" cy="5.5" r="1.7" fill="#6b6b6b"/></svg>
<svg class="abs" style="left:85px;top:272px" width="17" height="17" viewBox="0 0 17 17"><path d="M2 6 L5 3 H15 V13 L12 16 H2 Z" fill="#e4e4e4" stroke="#666" stroke-width="0.8"/><path d="M12 6 L15 3 V13 L12 16 Z" fill="#c9c9c9"/><path d="M4 0 V8 M1.5 2.5 H6.5 M1 6.5 Q4 10 7 6.5" fill="none" stroke="#333" stroke-width="1"/></svg>
<div class="txt" style="left:116px;top:273.5px;">pcb:1</div>
<div class="row" style="left:58px;top:294.5px;width:128px"></div>
<div class="abs" style="left:83px;top:294.5px;width:78px;height:19px;background:#d4d4d4"></div>
<svg class="abs" style="left:39px;top:301px" width="10" height="6" viewBox="0 0 10 6"><path d="M1 0.8 L5 4.8 L9 0.8" fill="none" stroke="#333" stroke-width="1.3"/></svg>
<svg class="abs" style="left:61px;top:298.5px" width="16" height="11" viewBox="0 0 16 11"><path d="M0 5.5 Q8 -3.8 16 5.5 Q8 14.8 0 5.5 Z" fill="#6b6b6b"/><circle cx="8" cy="5.5" r="3" fill="#f2f2f2"/><circle cx="8" cy="5.5" r="1.7" fill="#6b6b6b"/></svg>
<svg class="abs" style="left:86.5px;top:296.5px" width="17" height="17" viewBox="0 0 17 17"><path d="M0.5 4 L4 0.5 H14.5 V11 L11 14.5 H0.5 Z" fill="#4d9be3"/><path d="M0.5 4 L4 0.5 H14.5 L11 4 Z" fill="#86c3f4"/><path d="M11 4 L14.5 0.5 V11 L11 14.5 Z" fill="#3a82c6"/></svg>
<div class="txt" style="left:116px;top:297.5px;font-weight:bold">case:1</div>
<svg class="abs" style="left:165px;top:297.5px" width="13" height="13" viewBox="0 0 13 13"><circle cx="6.5" cy="6.5" r="5.8" fill="#fff" stroke="#333" stroke-width="1.1"/><circle cx="6.5" cy="6.5" r="2.6" fill="#333"/></svg>
<div class="row" style="left:76px;top:318.5px;width:103px"></div>
<svg class="abs" style="left:59.5px;top:323px" width="6" height="10" viewBox="0 0 6 10"><path d="M0.8 1 L4.8 5 L0.8 9" fill="none" stroke="#555" stroke-width="1.2"/></svg>
<svg class="abs" style="left:79px;top:322.5px" width="16" height="11" viewBox="0 0 16 11"><path d="M0.8 5.5 Q8 -2.5 15.2 5.5 Q8 13.5 0.8 5.5 Z" fill="none" stroke="#7a7a7a" stroke-width="1"/><circle cx="8" cy="5.5" r="2.6" fill="none" stroke="#7a7a7a" stroke-width="1"/><path d="M3 -0.5 L13 11.5" stroke="#7a7a7a" stroke-width="1"/></svg>
<svg class="abs" style="left:104px;top:320px" width="17" height="17" viewBox="0 0 17 17"><path d="M0.5 2.5 V13.5 H15 V3.5 H7 L5.5 1 H0.5 Z" fill="#f4f4f4" stroke="#555" stroke-width="1"/><path d="M1 2 H5 L6 3.5 H1 Z" fill="#bbb"/></svg>
<div class="txt" style="left:134.3px;top:321.5px;">Origin</div>
<div class="row" style="left:76px;top:342.5px;width:106.5px"></div>
<svg class="abs" style="left:57px;top:349px" width="10" height="6" viewBox="0 0 10 6"><path d="M1 0.8 L5 4.8 L9 0.8" fill="none" stroke="#333" stroke-width="1.3"/></svg>
<svg class="abs" style="left:79px;top:346.5px" width="16" height="11" viewBox="0 0 16 11"><path d="M0 5.5 Q8 -3.8 16 5.5 Q8 14.8 0 5.5 Z" fill="#6b6b6b"/><circle cx="8" cy="5.5" r="3" fill="#f2f2f2"/><circle cx="8" cy="5.5" r="1.7" fill="#6b6b6b"/></svg>
<svg class="abs" style="left:104px;top:344px" width="17" height="17" viewBox="0 0 17 17"><path d="M0.5 2.5 V13.5 H15 V3.5 H7 L5.5 1 H0.5 Z" fill="#f4f4f4" stroke="#555" stroke-width="1"/><path d="M1 2 H5 L6 3.5 H1 Z" fill="#bbb"/></svg>
<div class="txt" style="left:134.3px;top:345.5px;">Bodies</div>
<div class="row" style="left:94.2px;top:366.5px;width:85.8px"></div>
<svg class="abs" style="left:97px;top:370.5px" width="16" height="11" viewBox="0 0 16 11"><path d="M0 5.5 Q8 -3.8 16 5.5 Q8 14.8 0 5.5 Z" fill="#6b6b6b"/><circle cx="8" cy="5.5" r="3" fill="#f2f2f2"/><circle cx="8" cy="5.5" r="1.7" fill="#6b6b6b"/></svg>
<svg class="abs" style="left:123px;top:368px" width="17" height="17" viewBox="0 0 17 17"><path d="M0.5 3 V12.5 Q7 16 13.5 12.5 V3 Z" fill="#5eaaea" stroke="#4a90cc" stroke-width="0.6"/><ellipse cx="7" cy="3" rx="6.5" ry="2.5" fill="#8ecaf5" stroke="#4a90cc" stroke-width="0.6"/></svg>
<div class="txt" style="left:152px;top:369.5px;">Top</div>
<div class="row" style="left:94.2px;top:390.5px;width:102.39999999999999px"></div>
<svg class="abs" style="left:97px;top:394.5px" width="16" height="11" viewBox="0 0 16 11"><path d="M0 5.5 Q8 -3.8 16 5.5 Q8 14.8 0 5.5 Z" fill="#6b6b6b"/><circle cx="8" cy="5.5" r="3" fill="#f2f2f2"/><circle cx="8" cy="5.5" r="1.7" fill="#6b6b6b"/></svg>
<svg class="abs" style="left:123px;top:392px" width="17" height="17" viewBox="0 0 17 17"><path d="M0.5 3 V12.5 Q7 16 13.5 12.5 V3 Z" fill="#5eaaea" stroke="#4a90cc" stroke-width="0.6"/><ellipse cx="7" cy="3" rx="6.5" ry="2.5" fill="#8ecaf5" stroke="#4a90cc" stroke-width="0.6"/></svg>
<div class="txt" style="left:152px;top:393.5px;">Pillar1</div>
<div class="row" style="left:94.2px;top:414.5px;width:106.60000000000001px"></div>
<svg class="abs" style="left:97px;top:418.5px" width="16" height="11" viewBox="0 0 16 11"><path d="M0 5.5 Q8 -3.8 16 5.5 Q8 14.8 0 5.5 Z" fill="#6b6b6b"/><circle cx="8" cy="5.5" r="3" fill="#f2f2f2"/><circle cx="8" cy="5.5" r="1.7" fill="#6b6b6b"/></svg>
<svg class="abs" style="left:123px;top:416px" width="17" height="17" viewBox="0 0 17 17"><path d="M0.5 3 V12.5 Q7 16 13.5 12.5 V3 Z" fill="#5eaaea" stroke="#4a90cc" stroke-width="0.6"/><ellipse cx="7" cy="3" rx="6.5" ry="2.5" fill="#8ecaf5" stroke="#4a90cc" stroke-width="0.6"/></svg>
<div class="txt" style="left:152px;top:417.5px;">Pillar2</div>
<div class="row" style="left:94.2px;top:438.5px;width:106.60000000000001px"></div>
<svg class="abs" style="left:97px;top:442.5px" width="16" height="11" viewBox="0 0 16 11"><path d="M0 5.5 Q8 -3.8 16 5.5 Q8 14.8 0 5.5 Z" fill="#6b6b6b"/><circle cx="8" cy="5.5" r="3" fill="#f2f2f2"/><circle cx="8" cy="5.5" r="1.7" fill="#6b6b6b"/></svg>
<svg class="abs" style="left:123px;top:440px" width="17" height="17" viewBox="0 0 17 17"><path d="M0.5 3 V12.5 Q7 16 13.5 12.5 V3 Z" fill="#5eaaea" stroke="#4a90cc" stroke-width="0.6"/><ellipse cx="7" cy="3" rx="6.5" ry="2.5" fill="#8ecaf5" stroke="#4a90cc" stroke-width="0.6"/></svg>
<div class="txt" style="left:152px;top:441.5px;">Pillar3</div>
<div class="row" style="left:94.2px;top:462.5px;width:106.60000000000001px"></div>
<svg class="abs" style="left:97px;top:466.5px" width="16" height="11" viewBox="0 0 16 11"><path d="M0 5.5 Q8 -3.8 16 5.5 Q8 14.8 0 5.5 Z" fill="#6b6b6b"/><circle cx="8" cy="5.5" r="3" fill="#f2f2f2"/><circle cx="8" cy="5.5" r="1.7" fill="#6b6b6b"/></svg>
<svg class="abs" style="left:123px;top:464px" width="17" height="17" viewBox="0 0 17 17"><path d="M0.5 3 V12.5 Q7 16 13.5 12.5 V3 Z" fill="#5eaaea" stroke="#4a90cc" stroke-width="0.6"/><ellipse cx="7" cy="3" rx="6.5" ry="2.5" fill="#8ecaf5" stroke="#4a90cc" stroke-width="0.6"/></svg>
<div class="txt" style="left:152px;top:465.5px;">Pillar4</div>
<div class="row" style="left:94.2px;top:486.5px;width:106.60000000000001px"></div>
<svg class="abs" style="left:97px;top:490.5px" width="16" height="11" viewBox="0 0 16 11"><path d="M0 5.5 Q8 -3.8 16 5.5 Q8 14.8 0 5.5 Z" fill="#6b6b6b"/><circle cx="8" cy="5.5" r="3" fill="#f2f2f2"/><circle cx="8" cy="5.5" r="1.7" fill="#6b6b6b"/></svg>
<svg class="abs" style="left:123px;top:488px" width="17" height="17" viewBox="0 0 17 17"><path d="M0.5 3 V12.5 Q7 16 13.5 12.5 V3 Z" fill="#5eaaea" stroke="#4a90cc" stroke-width="0.6"/><ellipse cx="7" cy="3" rx="6.5" ry="2.5" fill="#8ecaf5" stroke="#4a90cc" stroke-width="0.6"/></svg>
<div class="txt" style="left:152px;top:489.5px;">Pillar5</div>
<div class="row" style="left:94.2px;top:510.5px;width:106.60000000000001px"></div>
<svg class="abs" style="left:97px;top:514.5px" width="16" height="11" viewBox="0 0 16 11"><path d="M0 5.5 Q8 -3.8 16 5.5 Q8 14.8 0 5.5 Z" fill="#6b6b6b"/><circle cx="8" cy="5.5" r="3" fill="#f2f2f2"/><circle cx="8" cy="5.5" r="1.7" fill="#6b6b6b"/></svg>
<svg class="abs" style="left:123px;top:512px" width="17" height="17" viewBox="0 0 17 17"><path d="M0.5 3 V12.5 Q7 16 13.5 12.5 V3 Z" fill="#5eaaea" stroke="#4a90cc" stroke-width="0.6"/><ellipse cx="7" cy="3" rx="6.5" ry="2.5" fill="#8ecaf5" stroke="#4a90cc" stroke-width="0.6"/></svg>
<div class="txt" style="left:152px;top:513.5px;">Pillar6</div>
<div class="row" style="left:94.2px;top:534.5px;width:98.8px"></div>
<svg class="abs" style="left:97px;top:538.5px" width="16" height="11" viewBox="0 0 16 11"><path d="M0 5.5 Q8 -3.8 16 5.5 Q8 14.8 0 5.5 Z" fill="#6b6b6b"/><circle cx="8" cy="5.5" r="3" fill="#f2f2f2"/><circle cx="8" cy="5.5" r="1.7" fill="#6b6b6b"/></svg>
<svg class="abs" style="left:123px;top:536px" width="17" height="17" viewBox="0 0 17 17"><path d="M0.5 3 V12.5 Q7 16 13.5 12.5 V3 Z" fill="#5eaaea" stroke="#4a90cc" stroke-width="0.6"/><ellipse cx="7" cy="3" rx="6.5" ry="2.5" fill="#8ecaf5" stroke="#4a90cc" stroke-width="0.6"/></svg>
<div class="txt" style="left:152px;top:537.5px;">Side2</div>
<div class="row" style="left:94.2px;top:558.5px;width:98.8px"></div>
<svg class="abs" style="left:97px;top:562.5px" width="16" height="11" viewBox="0 0 16 11"><path d="M0 5.5 Q8 -3.8 16 5.5 Q8 14.8 0 5.5 Z" fill="#6b6b6b"/><circle cx="8" cy="5.5" r="3" fill="#f2f2f2"/><circle cx="8" cy="5.5" r="1.7" fill="#6b6b6b"/></svg>
<svg class="abs" style="left:123px;top:560px" width="17" height="17" viewBox="0 0 17 17"><path d="M0.5 3 V12.5 Q7 16 13.5 12.5 V3 Z" fill="#5eaaea" stroke="#4a90cc" stroke-width="0.6"/><ellipse cx="7" cy="3" rx="6.5" ry="2.5" fill="#8ecaf5" stroke="#4a90cc" stroke-width="0.6"/></svg>
<div class="txt" style="left:152px;top:561.5px;">Side1</div>
<div class="row" style="left:94.2px;top:582.5px;width:110.10000000000001px"></div>
<svg class="abs" style="left:97px;top:586.5px" width="16" height="11" viewBox="0 0 16 11"><path d="M0 5.5 Q8 -3.8 16 5.5 Q8 14.8 0 5.5 Z" fill="#6b6b6b"/><circle cx="8" cy="5.5" r="3" fill="#f2f2f2"/><circle cx="8" cy="5.5" r="1.7" fill="#6b6b6b"/></svg>
<svg class="abs" style="left:123px;top:584px" width="17" height="17" viewBox="0 0 17 17"><path d="M0.5 3 V12.5 Q7 16 13.5 12.5 V3 Z" fill="#5eaaea" stroke="#4a90cc" stroke-width="0.6"/><ellipse cx="7" cy="3" rx="6.5" ry="2.5" fill="#8ecaf5" stroke="#4a90cc" stroke-width="0.6"/></svg>
<div class="txt" style="left:152px;top:585.5px;">Bottom</div>
<div class="row" style="left:94.2px;top:606.5px;width:98.8px"></div>
<svg class="abs" style="left:97px;top:610.5px" width="16" height="11" viewBox="0 0 16 11"><path d="M0 5.5 Q8 -3.8 16 5.5 Q8 14.8 0 5.5 Z" fill="#6b6b6b"/><circle cx="8" cy="5.5" r="3" fill="#f2f2f2"/><circle cx="8" cy="5.5" r="1.7" fill="#6b6b6b"/></svg>
<svg class="abs" style="left:123px;top:608px" width="17" height="17" viewBox="0 0 17 17"><path d="M0.5 3 V12.5 Q7 16 13.5 12.5 V3 Z" fill="#5eaaea" stroke="#4a90cc" stroke-width="0.6"/><ellipse cx="7" cy="3" rx="6.5" ry="2.5" fill="#8ecaf5" stroke="#4a90cc" stroke-width="0.6"/></svg>
<div class="txt" style="left:152px;top:609.5px;">Side3</div>
<div class="row" style="left:94.2px;top:630.5px;width:98.8px"></div>
<svg class="abs" style="left:97px;top:634.5px" width="16" height="11" viewBox="0 0 16 11"><path d="M0 5.5 Q8 -3.8 16 5.5 Q8 14.8 0 5.5 Z" fill="#6b6b6b"/><circle cx="8" cy="5.5" r="3" fill="#f2f2f2"/><circle cx="8" cy="5.5" r="1.7" fill="#6b6b6b"/></svg>
<svg class="abs" style="left:123px;top:632px" width="17" height="17" viewBox="0 0 17 17"><path d="M0.5 3 V12.5 Q7 16 13.5 12.5 V3 Z" fill="#5eaaea" stroke="#4a90cc" stroke-width="0.6"/><ellipse cx="7" cy="3" rx="6.5" ry="2.5" fill="#8ecaf5" stroke="#4a90cc" stroke-width="0.6"/></svg>
<div class="txt" style="left:152px;top:633.5px;">Side4</div>
<div class="row" style="left:76px;top:654.5px;width:118px"></div>
<svg class="abs" style="left:57px;top:661px" width="10" height="6" viewBox="0 0 10 6"><path d="M1 0.8 L5 4.8 L9 0.8" fill="none" stroke="#333" stroke-width="1.3"/></svg>
<svg class="abs" style="left:79px;top:658.5px" width="16" height="11" viewBox="0 0 16 11"><path d="M0.8 5.5 Q8 -2.5 15.2 5.5 Q8 13.5 0.8 5.5 Z" fill="none" stroke="#7a7a7a" stroke-width="1"/><circle cx="8" cy="5.5" r="2.6" fill="none" stroke="#7a7a7a" stroke-width="1"/><path d="M3 -0.5 L13 11.5" stroke="#7a7a7a" stroke-width="1"/></svg>
<svg class="abs" style="left:104px;top:656px" width="17" height="17" viewBox="0 0 17 17"><path d="M0.5 2.5 V13.5 H15 V3.5 H7 L5.5 1 H0.5 Z" fill="#f4f4f4" stroke="#555" stroke-width="1"/><path d="M1 2 H5 L6 3.5 H1 Z" fill="#bbb"/></svg>
<div class="txt" style="left:134px;top:657.5px;">Sketches</div>
<div class="row" style="left:94.5px;top:678.5px;width:86.30000000000001px"></div>
<svg class="abs" style="left:97px;top:682.5px" width="16" height="11" viewBox="0 0 16 11"><path d="M0.8 5.5 Q8 -2.5 15.2 5.5 Q8 13.5 0.8 5.5 Z" fill="none" stroke="#7a7a7a" stroke-width="1"/><circle cx="8" cy="5.5" r="2.6" fill="none" stroke="#7a7a7a" stroke-width="1"/><path d="M3 -0.5 L13 11.5" stroke="#7a7a7a" stroke-width="1"/></svg>
<svg class="abs" style="left:122px;top:680px" width="17" height="17" viewBox="0 0 17 17"><g fill="#2a7fd4"><rect x="0" y="0" width="2" height="2"/><rect x="14" y="0" width="2" height="2"/><rect x="0" y="14" width="2" height="2"/></g><path d="M1 3 V13 M3 1 H13 M15 3 V7" stroke="#444" stroke-width="1" stroke-dasharray="2 1.2"/><path d="M3 15 H8" stroke="#444" stroke-width="1"/><path d="M9 16 L10 13 L15 8 L17 10 L12 15 Z" fill="#f0a030" stroke="#b06010" stroke-width="0.6"/><path d="M9 16 L10 13 L12 15 Z" fill="#e05050"/></svg>
<div class="txt" style="left:152.2px;top:681.5px;">Top</div>
<div class="row" style="left:94.5px;top:702.5px;width:110.1px"></div>
<svg class="abs" style="left:97px;top:706.5px" width="16" height="11" viewBox="0 0 16 11"><path d="M0.8 5.5 Q8 -2.5 15.2 5.5 Q8 13.5 0.8 5.5 Z" fill="none" stroke="#7a7a7a" stroke-width="1"/><circle cx="8" cy="5.5" r="2.6" fill="none" stroke="#7a7a7a" stroke-width="1"/><path d="M3 -0.5 L13 11.5" stroke="#7a7a7a" stroke-width="1"/></svg>
<svg class="abs" style="left:122px;top:704px" width="17" height="17" viewBox="0 0 17 17"><g fill="#333"><rect x="0" y="0" width="2" height="2"/><rect x="14" y="0" width="2" height="2"/><rect x="0" y="14" width="2" height="2"/></g><path d="M1 3 V13 M3 1 H13 M15 3 V7" stroke="#444" stroke-width="1" stroke-dasharray="2 1.2"/><path d="M3 15 H8" stroke="#444" stroke-width="1"/><rect x="9" y="10" width="8" height="7" rx="0.8" fill="#c0392b"/><path d="M10.5 10 V8.5 A2.5 2.5 0 0 1 15.5 8.5 V10" fill="none" stroke="#c0392b" stroke-width="1.3"/><rect x="12.3" y="12" width="1.4" height="3" fill="#fff"/></svg>
<div class="txt" style="left:152.2px;top:705.5px;">Bottom</div>
<div class="row" style="left:94.5px;top:726.5px;width:98.30000000000001px"></div>
<svg class="abs" style="left:97px;top:730.5px" width="16" height="11" viewBox="0 0 16 11"><path d="M0.8 5.5 Q8 -2.5 15.2 5.5 Q8 13.5 0.8 5.5 Z" fill="none" stroke="#7a7a7a" stroke-width="1"/><circle cx="8" cy="5.5" r="2.6" fill="none" stroke="#7a7a7a" stroke-width="1"/><path d="M3 -0.5 L13 11.5" stroke="#7a7a7a" stroke-width="1"/></svg>
<svg class="abs" style="left:122px;top:728px" width="17" height="17" viewBox="0 0 17 17"><g fill="#2a7fd4"><rect x="0" y="0" width="2" height="2"/><rect x="14" y="0" width="2" height="2"/><rect x="0" y="14" width="2" height="2"/></g><path d="M1 3 V13 M3 1 H13 M15 3 V7" stroke="#444" stroke-width="1" stroke-dasharray="2 1.2"/><path d="M3 15 H8" stroke="#444" stroke-width="1"/><path d="M9 16 L10 13 L15 8 L17 10 L12 15 Z" fill="#f0a030" stroke="#b06010" stroke-width="0.6"/><path d="M9 16 L10 13 L12 15 Z" fill="#e05050"/></svg>
<div class="txt" style="left:152.2px;top:729.5px;">Side1</div>
<div class="row" style="left:94.5px;top:750.5px;width:98.30000000000001px"></div>
<svg class="abs" style="left:97px;top:754.5px" width="16" height="11" viewBox="0 0 16 11"><path d="M0.8 5.5 Q8 -2.5 15.2 5.5 Q8 13.5 0.8 5.5 Z" fill="none" stroke="#7a7a7a" stroke-width="1"/><circle cx="8" cy="5.5" r="2.6" fill="none" stroke="#7a7a7a" stroke-width="1"/><path d="M3 -0.5 L13 11.5" stroke="#7a7a7a" stroke-width="1"/></svg>
<svg class="abs" style="left:122px;top:752px" width="17" height="17" viewBox="0 0 17 17"><g fill="#2a7fd4"><rect x="0" y="0" width="2" height="2"/><rect x="14" y="0" width="2" height="2"/><rect x="0" y="14" width="2" height="2"/></g><path d="M1 3 V13 M3 1 H13 M15 3 V7" stroke="#444" stroke-width="1" stroke-dasharray="2 1.2"/><path d="M3 15 H8" stroke="#444" stroke-width="1"/><path d="M9 16 L10 13 L15 8 L17 10 L12 15 Z" fill="#f0a030" stroke="#b06010" stroke-width="0.6"/><path d="M9 16 L10 13 L12 15 Z" fill="#e05050"/></svg>
<div class="txt" style="left:152.2px;top:753.5px;">Side2</div>
<div class="row" style="left:94.5px;top:774.5px;width:98.30000000000001px"></div>
<svg class="abs" style="left:97px;top:778.5px" width="16" height="11" viewBox="0 0 16 11"><path d="M0.8 5.5 Q8 -2.5 15.2 5.5 Q8 13.5 0.8 5.5 Z" fill="none" stroke="#7a7a7a" stroke-width="1"/><circle cx="8" cy="5.5" r="2.6" fill="none" stroke="#7a7a7a" stroke-width="1"/><path d="M3 -0.5 L13 11.5" stroke="#7a7a7a" stroke-width="1"/></svg>
<svg class="abs" style="left:122px;top:776px" width="17" height="17" viewBox="0 0 17 17"><g fill="#2a7fd4"><rect x="0" y="0" width="2" height="2"/><rect x="14" y="0" width="2" height="2"/><rect x="0" y="14" width="2" height="2"/></g><path d="M1 3 V13 M3 1 H13 M15 3 V7" stroke="#444" stroke-width="1" stroke-dasharray="2 1.2"/><path d="M3 15 H8" stroke="#444" stroke-width="1"/><path d="M9 16 L10 13 L15 8 L17 10 L12 15 Z" fill="#f0a030" stroke="#b06010" stroke-width="0.6"/><path d="M9 16 L10 13 L12 15 Z" fill="#e05050"/></svg>
<div class="txt" style="left:152.2px;top:777.5px;">Side3</div>
<div class="row" style="left:94.5px;top:798.5px;width:102.1px"></div>
<svg class="abs" style="left:97px;top:802.5px" width="16" height="11" viewBox="0 0 16 11"><path d="M0.8 5.5 Q8 -2.5 15.2 5.5 Q8 13.5 0.8 5.5 Z" fill="none" stroke="#7a7a7a" stroke-width="1"/><circle cx="8" cy="5.5" r="2.6" fill="none" stroke="#7a7a7a" stroke-width="1"/><path d="M3 -0.5 L13 11.5" stroke="#7a7a7a" stroke-width="1"/></svg>
<svg class="abs" style="left:122px;top:800px" width="17" height="17" viewBox="0 0 17 17"><g fill="#333"><rect x="0" y="0" width="2" height="2"/><rect x="14" y="0" width="2" height="2"/><rect x="0" y="14" width="2" height="2"/></g><path d="M1 3 V13 M3 1 H13 M15 3 V7" stroke="#444" stroke-width="1" stroke-dasharray="2 1.2"/><path d="M3 15 H8" stroke="#444" stroke-width="1"/><rect x="9" y="10" width="8" height="7" rx="0.8" fill="#c0392b"/><path d="M10.5 10 V8.5 A2.5 2.5 0 0 1 15.5 8.5 V10" fill="none" stroke="#c0392b" stroke-width="1.3"/><rect x="12.3" y="12" width="1.4" height="3" fill="#fff"/></svg>
<div class="txt" style="left:152.2px;top:801.5px;">Side 4</div>
<div class="row" style="left:94.5px;top:822.5px;width:118.0px"></div>
<svg class="abs" style="left:97px;top:826.5px" width="16" height="11" viewBox="0 0 16 11"><path d="M0 5.5 Q8 -3.8 16 5.5 Q8 14.8 0 5.5 Z" fill="#d8d8d8"/><circle cx="8" cy="5.5" r="3" fill="#fafafa"/><circle cx="8" cy="5.5" r="1.7" fill="#d8d8d8"/></svg>
<svg class="abs" style="left:122px;top:824px" width="17" height="17" viewBox="0 0 17 17"><g fill="#333"><rect x="0" y="0" width="2" height="2"/><rect x="14" y="0" width="2" height="2"/><rect x="0" y="14" width="2" height="2"/></g><path d="M1 3 V13 M3 1 H13 M15 3 V7" stroke="#444" stroke-width="1" stroke-dasharray="2 1.2"/><path d="M3 15 H8" stroke="#444" stroke-width="1"/><rect x="9" y="10" width="8" height="7" rx="0.8" fill="#c0392b"/><path d="M10.5 10 V8.5 A2.5 2.5 0 0 1 15.5 8.5 V10" fill="none" stroke="#c0392b" stroke-width="1.3"/><rect x="12.3" y="12" width="1.4" height="3" fill="#fff"/></svg>
<div class="txt" style="left:152.2px;top:825.5px;">TopLaser</div>
<div class="row" style="left:94.5px;top:846.5px;width:141.8px"></div>
<svg class="abs" style="left:97px;top:850.5px" width="16" height="11" viewBox="0 0 16 11"><path d="M0 5.5 Q8 -3.8 16 5.5 Q8 14.8 0 5.5 Z" fill="#d8d8d8"/><circle cx="8" cy="5.5" r="3" fill="#fafafa"/><circle cx="8" cy="5.5" r="1.7" fill="#d8d8d8"/></svg>
<svg class="abs" style="left:122px;top:848px" width="17" height="17" viewBox="0 0 17 17"><g fill="#333"><rect x="0" y="0" width="2" height="2"/><rect x="14" y="0" width="2" height="2"/><rect x="0" y="14" width="2" height="2"/></g><path d="M1 3 V13 M3 1 H13 M15 3 V7" stroke="#444" stroke-width="1" stroke-dasharray="2 1.2"/><path d="M3 15 H8" stroke="#444" stroke-width="1"/><rect x="9" y="10" width="8" height="7" rx="0.8" fill="#c0392b"/><path d="M10.5 10 V8.5 A2.5 2.5 0 0 1 15.5 8.5 V10" fill="none" stroke="#c0392b" stroke-width="1.3"/><rect x="12.3" y="12" width="1.4" height="3" fill="#fff"/></svg>
<div class="txt" style="left:152.2px;top:849.5px;">BottomLaser</div>
<div class="row" style="left:94.5px;top:870.5px;width:130.0px"></div>
<svg class="abs" style="left:97px;top:874.5px" width="16" height="11" viewBox="0 0 16 11"><path d="M0 5.5 Q8 -3.8 16 5.5 Q8 14.8 0 5.5 Z" fill="#d8d8d8"/><circle cx="8" cy="5.5" r="3" fill="#fafafa"/><circle cx="8" cy="5.5" r="1.7" fill="#d8d8d8"/></svg>
<svg class="abs" style="left:122px;top:872px" width="17" height="17" viewBox="0 0 17 17"><g fill="#333"><rect x="0" y="0" width="2" height="2"/><rect x="14" y="0" width="2" height="2"/><rect x="0" y="14" width="2" height="2"/></g><path d="M1 3 V13 M3 1 H13 M15 3 V7" stroke="#444" stroke-width="1" stroke-dasharray="2 1.2"/><path d="M3 15 H8" stroke="#444" stroke-width="1"/><rect x="9" y="10" width="8" height="7" rx="0.8" fill="#c0392b"/><path d="M10.5 10 V8.5 A2.5 2.5 0 0 1 15.5 8.5 V10" fill="none" stroke="#c0392b" stroke-width="1.3"/><rect x="12.3" y="12" width="1.4" height="3" fill="#fff"/></svg>
<div class="txt" style="left:152.2px;top:873.5px;">LaserSide1</div>
<div class="row" style="left:94.5px;top:894.5px;width:130.0px"></div>
<svg class="abs" style="left:97px;top:898.5px" width="16" height="11" viewBox="0 0 16 11"><path d="M0 5.5 Q8 -3.8 16 5.5 Q8 14.8 0 5.5 Z" fill="#d8d8d8"/><circle cx="8" cy="5.5" r="3" fill="#fafafa"/><circle cx="8" cy="5.5" r="1.7" fill="#d8d8d8"/></svg>
<svg class="abs" style="left:122px;top:896px" width="17" height="17" viewBox="0 0 17 17"><g fill="#333"><rect x="0" y="0" width="2" height="2"/><rect x="14" y="0" width="2" height="2"/><rect x="0" y="14" width="2" height="2"/></g><path d="M1 3 V13 M3 1 H13 M15 3 V7" stroke="#444" stroke-width="1" stroke-dasharray="2 1.2"/><path d="M3 15 H8" stroke="#444" stroke-width="1"/><rect x="9" y="10" width="8" height="7" rx="0.8" fill="#c0392b"/><path d="M10.5 10 V8.5 A2.5 2.5 0 0 1 15.5 8.5 V10" fill="none" stroke="#c0392b" stroke-width="1.3"/><rect x="12.3" y="12" width="1.4" height="3" fill="#fff"/></svg>
<div class="txt" style="left:152.2px;top:897.5px;">LaserSide2</div>
<div class="hdr" style="left:4px;top:927px;width:299px;height:26px;border-bottom:none"></div>
<div class="abs" style="left:32.3px;top:934px;font-size:12.4px;color:#3a3a3a;transform:scaleX(0.86);transform-origin:0 0">COMMENTS</div>
<svg class="abs" style="left:282px;top:935px" width="10" height="10" viewBox="0 0 10 10"><path d="M5 1 V9 M1 5 H9" stroke="#555" stroke-width="1.6"/></svg>
<div class="abs" style="left:841px;top:927px;width:239px;height:24px;background:rgba(240,240,240,0.92)"></div>
<svg class="abs" style="left:843px;top:929px" width="18" height="18" viewBox="0 0 18 18"><ellipse cx="9" cy="10" rx="7.5" ry="3.5" fill="none" stroke="#333" stroke-width="1.1"/><path d="M9 1 V17" stroke="#5aa7e6" stroke-width="1.8" stroke-dasharray="3 1.5"/><path d="M12 12.5 L15 13.5 L13 15.5" fill="none" stroke="#333" stroke-width="1"/></svg>
<div class="arr" style="left:866px;top:937px;border-top:4px solid #555;border-left-width:3.5px;border-right-width:3.5px"></div>
<svg class="abs" style="left:878px;top:929px" width="17" height="17" viewBox="0 0 17 17"><path d="M1 5 L4 2 L7 4 L10 1 V5" fill="none" stroke="#555" stroke-width="1"/><rect x="1" y="6" width="15" height="10" fill="#5aa7e6" stroke="#444" stroke-width="1"/></svg>
<svg class="abs" style="left:904px;top:929px" width="17" height="18" viewBox="0 0 17 18"><path d="M4 16 Q1 12 1 9 V7 Q2 6 3 7 V10 M3 9 V2 Q4 1 5 2 V8 M5 8 V1 Q6 0 7 1 V8 M7 8 V1.5 Q8 0.5 9 1.5 V8 M9 8 V3 Q10 2 11 3 V11 L13 8 Q14 7 15 8 L11 15 Q10 17 8 17 H5" fill="none" stroke="#777" stroke-width="0.9"/></svg>
<svg class="abs" style="left:929px;top:929px" width="19" height="18" viewBox="0 0 19 18"><circle cx="7" cy="9" r="5.5" fill="#ddd" stroke="#555" stroke-width="1.1"/><path d="M11 13 L15 17" stroke="#a0522d" stroke-width="1.8"/><path d="M14 4 H19 M16.5 1.5 V6.5 M14 8 H19" stroke="#444" stroke-width="1"/></svg>
<svg class="abs" style="left:955px;top:929px" width="19" height="18" viewBox="0 0 19 18"><rect x="1" y="1" width="16" height="16" fill="none" stroke="#333" stroke-width="1" stroke-dasharray="2 1.5"/><circle cx="8.5" cy="8" r="6" fill="#d8d8d8" stroke="#555" stroke-width="1"/><path d="M13 12 L17 16.5" stroke="#a0522d" stroke-width="1.8"/></svg>
<div class="arr" style="left:978px;top:937px;border-top:4px solid #555;border-left-width:3.5px;border-right-width:3.5px"></div>
<svg class="abs" style="left:989px;top:929px" width="18" height="17" viewBox="0 0 18 17"><rect x="1" y="2" width="16" height="11" fill="#bbb" stroke="#444" stroke-width="1.2"/><rect x="3" y="4" width="12" height="7" fill="#9a9a9a"/><path d="M9 13 V15.5 M5 16 H13" stroke="#444" stroke-width="1.2"/></svg>
<div class="arr" style="left:1009px;top:937px;border-top:4px solid #555;border-left-width:3.5px;border-right-width:3.5px"></div>
<svg class="abs" style="left:1020px;top:929px" width="16" height="17" viewBox="0 0 16 17"><rect x="1" y="1" width="14" height="15" fill="none" stroke="#444" stroke-width="1.1"/><path d="M5.7 1 V16 M10.3 1 V16 M1 6 H15 M1 11 H15" stroke="#444" stroke-width="1"/></svg>
<div class="arr" style="left:1039px;top:937px;border-top:4px solid #555;border-left-width:3.5px;border-right-width:3.5px"></div>
<svg class="abs" style="left:1052px;top:929px" width="17" height="17" viewBox="0 0 17 17"><rect x="1" y="1" width="15" height="15" fill="none" stroke="#444" stroke-width="1.1"/><path d="M8.5 1 V16 M1 8.5 H16" stroke="#444" stroke-width="1"/><rect x="3" y="3" width="3.5" height="3.5" fill="#888"/><rect x="10.5" y="3" width="3.5" height="3.5" fill="#888"/><rect x="3" y="10.5" width="3.5" height="3.5" fill="#888"/><rect x="10.5" y="10.5" width="3.5" height="3.5" fill="#888"/></svg>
<div class="arr" style="left:1071px;top:937px;border-top:4px solid #555;border-left-width:3.5px;border-right-width:3.5px"></div>
</body></html>
